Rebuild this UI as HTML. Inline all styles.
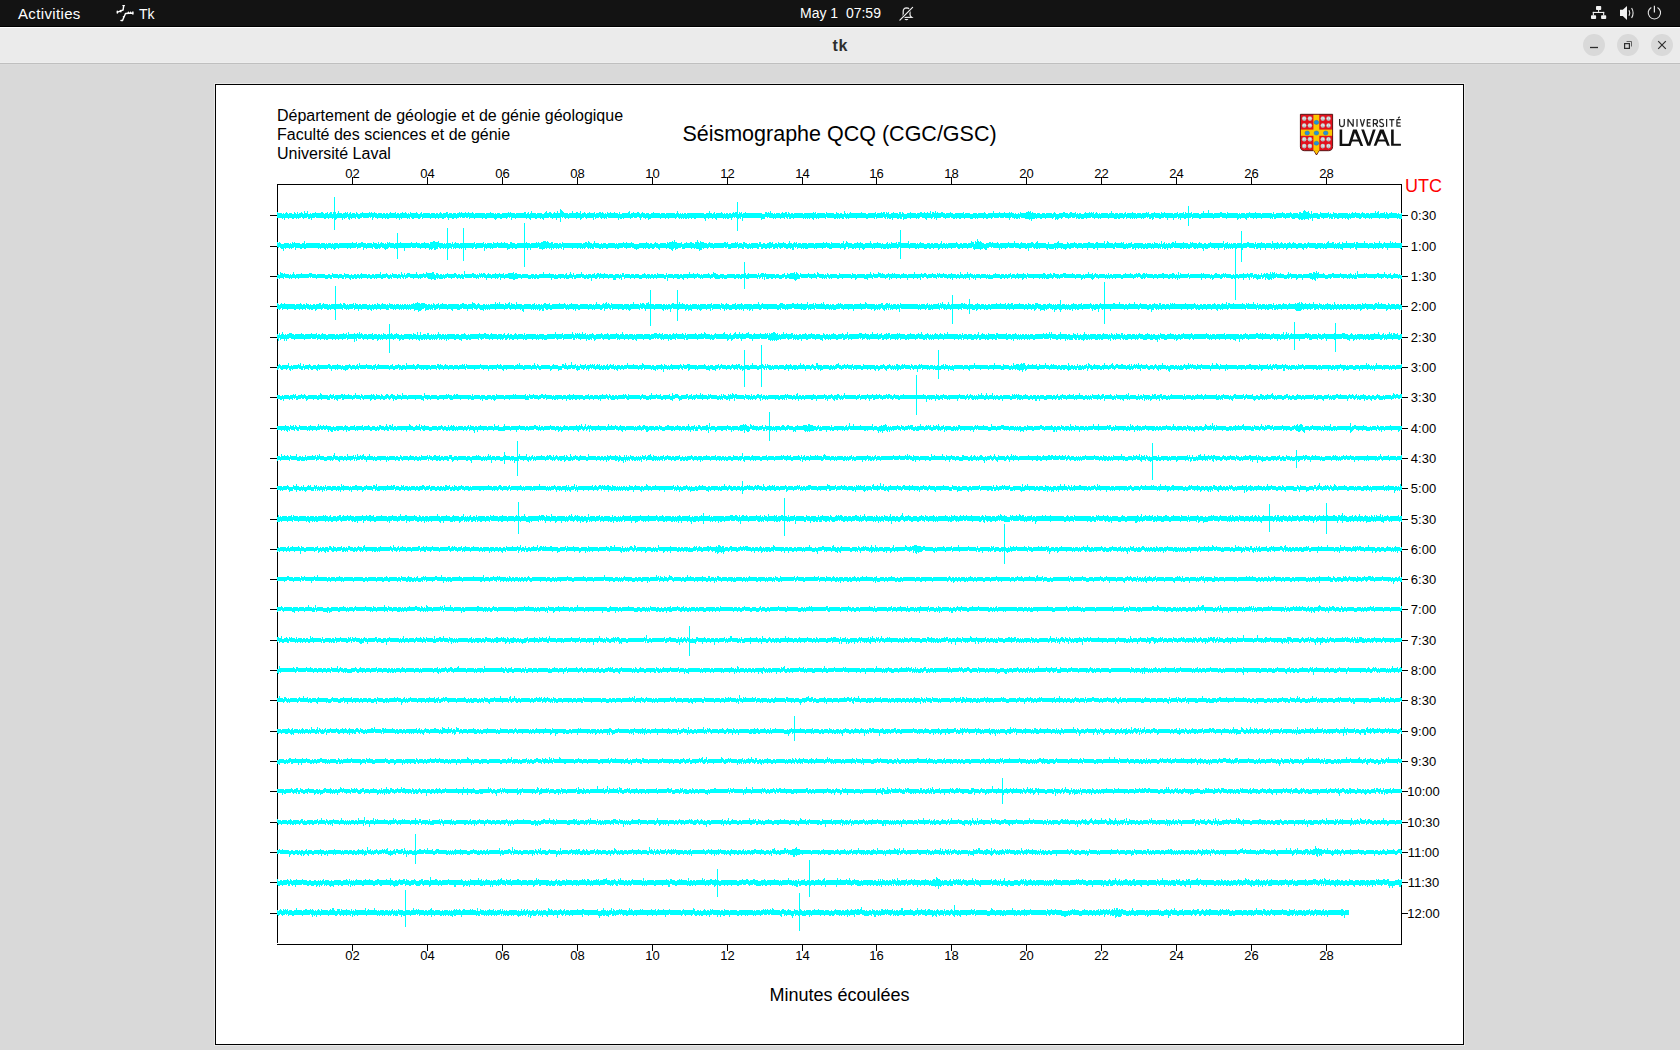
<!DOCTYPE html>
<html><head><meta charset="utf-8"><style>
html,body{margin:0;padding:0;width:1680px;height:1050px;overflow:hidden;background:#d9d9d9;font-family:"Liberation Sans",sans-serif}
.t{position:absolute;white-space:pre;font-family:"Liberation Sans",sans-serif}
#top{position:absolute;left:0;top:0;width:1680px;height:26px;background:#131313}
#tb{position:absolute;left:0;top:26px;width:1680px;height:39px;background:#ebebeb;border-top:1px solid #000}
</style></head><body>
<div id="top"></div>
<div style="position:absolute;left:0;top:26px;width:1680px;height:1px;background:#000"></div>
<div style="position:absolute;left:0;top:27px;width:1680px;height:1px;background:#fff"></div>
<div style="position:absolute;left:0;top:28px;width:1680px;height:34px;background:#ebebeb"></div>
<div style="position:absolute;left:0;top:62px;width:1680px;height:1px;background:#eeeeee"></div>
<div style="position:absolute;left:0;top:63px;width:1680px;height:1px;background:#bfbfbf"></div>
<div style="position:absolute;left:0;top:64px;width:1680px;height:1px;background:#dbdbdb"></div>

<div class="t" style="left:18px;top:5px;font-size:15px;line-height:18px;color:#fff;letter-spacing:0.35px">Activities</div>
<div class="t" style="left:139px;top:5px;font-size:14px;line-height:18px;color:#fff">Tk</div>
<div class="t" style="left:800px;top:4px;font-size:14px;line-height:18px;color:#fff">May 1  07:59</div>
<div class="t" style="left:832.5px;top:37px;font-size:16px;line-height:18px;color:#2e2e2e;font-weight:700;letter-spacing:0.6px">tk</div>
<svg width="1680" height="65" style="position:absolute;left:0;top:0">
 <g fill="none" stroke="#fff" stroke-width="1.3" stroke-linecap="round">
  <path d="M123.7 5.8 L123.1 10 L117.6 12.1 M122.9 5.6 H124.4 M117.3 11.3 V13 M120.3 10.6 L120.8 11.8 M125.5 13.5 L132.9 13 M132.9 11.9 V14.1 M128.4 12.3 V13.4 M130.6 12.2 V13.2 M125.5 13.5 L122.5 20.5 H121 M124.2 16.3 L123.4 16.9" stroke-width="1.45"/>
 </g>
 <g fill="#f2f2f2">
  <rect x="1596" y="6" width="5.2" height="4" rx="0.8"/>
  <rect x="1598.1" y="9.5" width="1" height="2.6"/>
  <rect x="1592.8" y="11.9" width="11.4" height="1.1"/>
  <rect x="1592.8" y="11.9" width="1.1" height="3.5"/>
  <rect x="1603.1" y="11.9" width="1.1" height="3.5"/>
  <rect x="1591" y="15.2" width="5.1" height="3.9" rx="0.8"/>
  <rect x="1601.1" y="15.2" width="5.1" height="3.9" rx="0.8"/>
  <path d="M1620 9.8 H1622.8 L1627 6 V20 L1622.8 16.1 H1620 Z"/>
 </g>
 <g fill="none" stroke="#e6e6e6" stroke-width="1.1">
  <path d="M1629 10.3 Q1630.6 13 1629 15.7"/>
  <path d="M1631.6 8 Q1634.6 13 1631.6 18"/>
  <path d="M1651.3 7.4 A6.2 6.2 0 1 0 1657.5 7.4" />
  <path d="M1654.4 5.7 V12.6" stroke-width="1.2"/>
  <path d="M902.3 17.3 Q903.2 16.2 903.2 14.5 V11.6 Q903.2 7.9 906.6 7.8 Q910 7.9 910 11.6 V14.5 Q910 16.2 911.6 17.3 Z" stroke-width="1.25"/>
 </g>
 <path d="M899.6 20.4 L912.9 7.1" stroke="#141414" stroke-width="2.8"/>
 <path d="M899.9 20.1 L912.6 7.4" stroke="#f0f0f0" stroke-width="1.2" stroke-linecap="round"/>
 <path d="M904.3 19.1 H908.5 Q906.4 21.6 904.3 19.1Z" fill="#f0f0f0"/>
 <g fill="#d9d9d9">
  <circle cx="1594" cy="45" r="11"/>
  <circle cx="1628" cy="45" r="11"/>
  <circle cx="1662" cy="45" r="11"/>
 </g>
 <g fill="none" stroke="#2e2e2e">
  <path d="M1590 47.5 H1598" stroke-width="1.3"/>
  <rect x="1624.6" y="43.6" width="4.8" height="4.8" stroke-width="1.2"/>
  <path d="M1626.6 41.5 H1631.5 V46.5" stroke-width="0.9" stroke="#555"/>
  <path d="M1658.2 41.2 L1665.8 48.8 M1665.8 41.2 L1658.2 48.8" stroke-width="1.2"/>
 </g>
</svg>

<svg width="1680" height="1050" viewBox="0 0 1680 1050" style="position:absolute;left:0;top:0" shape-rendering="crispEdges"><rect x="214" y="83" width="1251" height="963" fill="#e8e8e8"/><rect x="215" y="84" width="1249" height="961" fill="#000"/><rect x="216" y="85" width="1247" height="959" fill="#fff"/><g shape-rendering="geometricPrecision"><path d="M1300.4 114.3 H1332.6 V146.6 Q1332.6 150.7 1328.5 150.7 H1319 L1316.5 155 L1314 150.7 H1304.5 Q1300.4 150.7 1300.4 146.6 Z" fill="#e3101c" stroke="#4a0c0c" stroke-width="0.9"/><rect x="1313.4" y="114.8" width="5.9" height="36" fill="#fcc800"/><rect x="1300.9" y="129.6" width="31.2" height="6.2" fill="#fcc800"/><path d="M1314 150.4 L1316.5 154.2 L1319 150.4 Z" fill="#fcc800"/><circle cx="1304.2" cy="118.6" r="2.3" fill="#b9c0c0"/><circle cx="1304.2" cy="118.3" r="1.35" fill="#eef2f2"/><path d="M1304.2 117.4 V120.8" stroke="#9aa2a2" stroke-width="0.5"/><circle cx="1304.2" cy="125.5" r="2.3" fill="#b9c0c0"/><circle cx="1304.2" cy="125.2" r="1.35" fill="#eef2f2"/><path d="M1304.2 124.3 V127.7" stroke="#9aa2a2" stroke-width="0.5"/><circle cx="1304.2" cy="139.3" r="2.3" fill="#b9c0c0"/><circle cx="1304.2" cy="139.0" r="1.35" fill="#eef2f2"/><path d="M1304.2 138.1 V141.5" stroke="#9aa2a2" stroke-width="0.5"/><circle cx="1304.2" cy="146.1" r="2.3" fill="#b9c0c0"/><circle cx="1304.2" cy="145.8" r="1.35" fill="#eef2f2"/><path d="M1304.2 144.9 V148.3" stroke="#9aa2a2" stroke-width="0.5"/><circle cx="1309.9" cy="118.6" r="2.3" fill="#b9c0c0"/><circle cx="1309.9" cy="118.3" r="1.35" fill="#eef2f2"/><path d="M1309.9 117.4 V120.8" stroke="#9aa2a2" stroke-width="0.5"/><circle cx="1309.9" cy="125.5" r="2.3" fill="#b9c0c0"/><circle cx="1309.9" cy="125.2" r="1.35" fill="#eef2f2"/><path d="M1309.9 124.3 V127.7" stroke="#9aa2a2" stroke-width="0.5"/><circle cx="1309.9" cy="139.3" r="2.3" fill="#b9c0c0"/><circle cx="1309.9" cy="139.0" r="1.35" fill="#eef2f2"/><path d="M1309.9 138.1 V141.5" stroke="#9aa2a2" stroke-width="0.5"/><circle cx="1309.9" cy="146.1" r="2.3" fill="#b9c0c0"/><circle cx="1309.9" cy="145.8" r="1.35" fill="#eef2f2"/><path d="M1309.9 144.9 V148.3" stroke="#9aa2a2" stroke-width="0.5"/><circle cx="1322.8" cy="118.6" r="2.3" fill="#b9c0c0"/><circle cx="1322.8" cy="118.3" r="1.35" fill="#eef2f2"/><path d="M1322.8 117.4 V120.8" stroke="#9aa2a2" stroke-width="0.5"/><circle cx="1322.8" cy="125.5" r="2.3" fill="#b9c0c0"/><circle cx="1322.8" cy="125.2" r="1.35" fill="#eef2f2"/><path d="M1322.8 124.3 V127.7" stroke="#9aa2a2" stroke-width="0.5"/><circle cx="1322.8" cy="139.3" r="2.3" fill="#b9c0c0"/><circle cx="1322.8" cy="139.0" r="1.35" fill="#eef2f2"/><path d="M1322.8 138.1 V141.5" stroke="#9aa2a2" stroke-width="0.5"/><circle cx="1322.8" cy="146.1" r="2.3" fill="#b9c0c0"/><circle cx="1322.8" cy="145.8" r="1.35" fill="#eef2f2"/><path d="M1322.8 144.9 V148.3" stroke="#9aa2a2" stroke-width="0.5"/><circle cx="1328.5" cy="118.6" r="2.3" fill="#b9c0c0"/><circle cx="1328.5" cy="118.3" r="1.35" fill="#eef2f2"/><path d="M1328.5 117.4 V120.8" stroke="#9aa2a2" stroke-width="0.5"/><circle cx="1328.5" cy="125.5" r="2.3" fill="#b9c0c0"/><circle cx="1328.5" cy="125.2" r="1.35" fill="#eef2f2"/><path d="M1328.5 124.3 V127.7" stroke="#9aa2a2" stroke-width="0.5"/><circle cx="1328.5" cy="139.3" r="2.3" fill="#b9c0c0"/><circle cx="1328.5" cy="139.0" r="1.35" fill="#eef2f2"/><path d="M1328.5 138.1 V141.5" stroke="#9aa2a2" stroke-width="0.5"/><circle cx="1328.5" cy="146.1" r="2.3" fill="#b9c0c0"/><circle cx="1328.5" cy="145.8" r="1.35" fill="#eef2f2"/><path d="M1328.5 144.9 V148.3" stroke="#9aa2a2" stroke-width="0.5"/><ellipse cx="1316.4" cy="122.4" rx="2.35" ry="2.05" fill="#2590da" stroke="#156aa8" stroke-width="0.4"/><ellipse cx="1307.2" cy="133.0" rx="2.35" ry="2.05" fill="#2590da" stroke="#156aa8" stroke-width="0.4"/><ellipse cx="1316.4" cy="133.0" rx="2.35" ry="2.05" fill="#2590da" stroke="#156aa8" stroke-width="0.4"/><ellipse cx="1325.7" cy="133.0" rx="2.35" ry="2.05" fill="#2590da" stroke="#156aa8" stroke-width="0.4"/><ellipse cx="1316.4" cy="143.2" rx="2.35" ry="2.05" fill="#2590da" stroke="#156aa8" stroke-width="0.4"/></g><path shape-rendering="geometricPrecision" fill="none" stroke="#262626" stroke-width="1.25" stroke-linejoin="bevel" d="M1339.6 119.1 V124 Q1339.6 126.5 1341.95 126.5 Q1344.3 126.5 1344.3 124 V119.1 M1348 126.8 V119.1 L1353.2 126.6 V118.9 M1357 119.1 V126.8 M1360.3 119.1 L1362.4 126.6 L1364.5 119.1 M1370.7 119.7 H1367.3 V126.2 H1370.7 M1367.3 122.9 H1370.3 M1373.4 126.8 V119.7 H1375.5 Q1377.5 119.7 1377.5 121.65 Q1377.5 123.6 1375.5 123.6 H1373.4 M1375.3 123.6 L1377.7 126.8 M1383.4 120.2 Q1382.7 119.3 1381.5 119.3 Q1379.7 119.3 1379.7 121.1 Q1379.7 122.5 1381.6 122.9 Q1383.6 123.3 1383.6 124.9 Q1383.6 126.5 1381.5 126.5 Q1380.1 126.5 1379.4 125.6 M1386.6 119.1 V126.8 M1389.3 119.7 H1394.3 M1391.8 119.7 V126.8 M1400.8 119.7 H1396.9 V126.2 H1400.8 M1396.9 122.9 H1400.4 M1398.1 118.3 L1399.7 116.8"/><g fill="#111" shape-rendering="geometricPrecision"><path d="M1339.6 129.4 H1342.2 V143.7 H1349.6 V145.9 H1339.6 Z"/><path d="M1347.90 145.9 L1353.05 129.4 H1356.75 L1363.20 145.9 H1360.60 L1354.90 132.80 L1350.50 145.9 Z"/><rect x="1350.70" y="139.5" width="9.70" height="2"/><path d="M1361.2 129.4 H1364 L1368.7 142.7 L1372.9 129.6 H1375.7 L1370.2 145.8 H1367.2 Z"/><path d="M1373.70 145.8 L1379.95 129.6 H1383.65 L1389.80 145.8 H1387.20 L1381.80 133.00 L1376.30 145.8 Z"/><rect x="1376.50" y="139.5" width="10.50" height="2"/><path d="M1391.1 129.6 H1393.7 V143.7 H1400.9 V145.8 H1391.1 Z"/></g><path d="M277.5 184 V943 M277 184.5 H1402 M1401.5 184 V944 M277 944.5 H1402" stroke="#000" stroke-width="1" fill="none"/><path d="M270 215.5H277M1402 215.5H1408M270 246.5H277M1402 246.5H1408M270 276.5H277M1402 276.5H1408M270 306.5H277M1402 306.5H1408M270 337.5H277M1402 337.5H1408M270 367.5H277M1402 367.5H1408M270 397.5H277M1402 397.5H1408M270 428.5H277M1402 428.5H1408M270 458.5H277M1402 458.5H1408M270 488.5H277M1402 488.5H1408M270 519.5H277M1402 519.5H1408M270 549.5H277M1402 549.5H1408M270 579.5H277M1402 579.5H1408M270 609.5H277M1402 609.5H1408M270 640.5H277M1402 640.5H1408M270 670.5H277M1402 670.5H1408M270 700.5H277M1402 700.5H1408M270 731.5H277M1402 731.5H1408M270 761.5H277M1402 761.5H1408M270 791.5H277M1402 791.5H1408M270 822.5H277M1402 822.5H1408M270 852.5H277M1402 852.5H1408M270 882.5H277M1402 882.5H1408M270 913.5H277M1402 913.5H1408M352.5 177V184M352.5 945V951M427.5 177V184M427.5 945V951M502.5 177V184M502.5 945V951M577.5 177V184M577.5 945V951M652.5 177V184M652.5 945V951M727.5 177V184M727.5 945V951M802.5 177V184M802.5 945V951M876.5 177V184M876.5 945V951M951.5 177V184M951.5 945V951M1026.5 177V184M1026.5 945V951M1101.5 177V184M1101.5 945V951M1176.5 177V184M1176.5 945V951M1251.5 177V184M1251.5 945V951M1326.5 177V184M1326.5 945V951" stroke="#000" stroke-width="1" fill="none"/><path d="M277 212h1V213h4V214h1V213h1V214h1V213h1V212h1V213h1V214h1V213h3V214h2V212h1V213h1V214h1V212h1V214h1V213h2V212h1V213h1V214h1V211h1V213h2V211h1V214h2V213h1V214h1V213h3V212h1V213h5V212h2V213h1V214h1V213h2V212h1V214h1V213h1V212h2V214h1V212h1V213h1V212h1V214h1V213h1V211h1V213h3V214h1V213h2V212h1V213h1V212h1V214h1V213h1V212h1V214h1V213h3V214h1V212h1V213h1V214h2V213h2V212h1V213h6V212h1V213h1V212h1V213h2V212h1V213h2V214h1V213h4V214h1V213h2V214h1V213h2V214h1V213h1V212h1V213h4V212h1V214h1V213h2V214h1V213h2V212h1V213h2V212h1V213h1V214h1V213h1V214h1V212h1V213h5V212h1V213h1V214h2V213h1V212h1V214h1V213h7V214h1V213h4V214h1V213h2V214h1V213h1V212h1V213h1V214h1V213h3V212h2V214h1V213h3V214h1V213h3V214h1V213h2V212h1V213h1V212h1V213h3V212h1V213h2V212h1V213h3V212h1V213h1V214h1V213h10V214h1V213h4V212h1V213h3V214h1V213h1V214h1V213h3V214h2V213h6V212h1V213h1V212h1V213h4V214h1V213h8V212h2V214h1V213h1V212h1V214h1V213h1V211h1V213h4V214h1V213h5V214h2V213h1V212h1V211h1V213h2V212h2V213h1V214h1V213h1V212h1V213h2V211h1V213h3V210h1V211h1V212h1V213h4V214h1V213h3V211h1V213h3V212h2V213h3V214h1V213h2V212h1V213h1V214h1V213h2V212h1V213h4V212h1V214h1V213h3V212h2V213h1V212h1V213h1V214h1V213h1V214h1V212h1V213h2V212h1V213h3V212h1V213h3V214h1V212h1V214h2V213h6V212h1V211h1V214h1V213h2V212h1V213h3V212h2V213h1V214h1V213h1V212h1V213h2V214h1V213h3V214h2V213h2V212h1V213h6V214h1V213h4V214h1V213h9V214h1V213h1V211h1V213h1V214h1V213h1V214h1V213h1V214h1V213h2V214h1V213h17V214h2V213h3V211h1V213h2V214h1V213h1V212h1V214h1V213h5V212h1V213h1V214h1V213h1V214h1V213h2V214h1V213h2V214h1V213h1V212h1V213h1V212h2V213h1V214h1V212h1V213h1V212h1V214h1V213h2V212h1V213h16V214h3V212h2V213h1V212h1V213h1V211h1V213h2V214h1V213h1V214h1V213h4V214h1V213h1V212h1V213h2V212h2V214h1V212h1V213h1V214h1V213h2V214h1V213h9V214h1V213h9V212h1V213h1V212h1V214h1V213h8V214h1V212h1V213h7V214h2V212h1V213h2V214h1V213h2V214h2V211h1V213h1V214h1V213h1V214h1V213h1V212h1V213h10V212h1V213h4V214h2V213h7V212h1V214h1V213h4V212h1V213h1V212h2V214h1V212h1V213h1V212h1V214h2V213h2V212h1V213h4V214h1V212h2V214h1V212h1V213h1V214h3V213h3V212h1V213h5V214h1V213h3V212h2V213h2V212h1V213h2V212h1V213h2V211h1V214h1V212h2V213h1V211h1V213h1V212h1V213h3V212h2V213h2V214h1V213h4V212h1V213h2V214h2V213h8V212h1V214h1V213h5V214h3V213h4V214h1V213h6V212h1V213h1V214h2V213h5V211h1V213h5V212h1V213h4V212h1V213h4V212h1V213h1V212h1V213h2V214h1V213h1V214h2V213h1V214h1V212h1V213h5V212h2V211h1V212h1V211h1V213h1V212h1V213h3V214h1V213h3V214h2V213h3V214h1V213h6V214h1V213h1V212h1V213h1V214h3V213h4V212h2V213h3V214h1V213h1V212h2V213h3V212h1V214h1V213h1V214h1V213h2V214h3V213h1V212h1V213h3V212h1V213h1V212h1V213h1V212h1V214h1V213h1V212h1V213h1V214h1V213h1V214h1V213h7V214h1V213h2V211h1V213h2V214h1V213h3V214h1V213h4V214h1V213h1V212h1V214h1V213h5V212h1V213h3V214h1V213h4V214h1V213h4V212h1V213h1V212h1V214h2V213h3V212h1V213h5V214h1V212h1V213h2V212h1V213h8V214h1V213h3V212h1V214h1V213h4V212h1V214h1V212h1V213h5V212h1V214h1V213h6V214h2V213h2V211h1V213h9V214h1V213h6V212h2V213h4V214h1V212h1V213h10V214h1V213h1V214h1V213h4V214h1V213h3V212h1V213h5V212h1V213h5V214h1V213h10V214h1V212h1V214h2V213h6V212h1V213h2V214h1V213h4V212h1V213h1V214h1V213h5V214h1V212h2V213h2V211h1V210h1V211h1V212h2V211h1V213h1V214h1V211h1V214h1V213h5V214h2V212h1V213h7V212h1V214h1V213h1V214h2V212h1V213h3V214h1V213h10V214h1V213h1V214h1V213h1V212h1V213h2V212h1V213h4V214h1V213h1V212h1V213h2V214h1V213h3V214h1V213h5V211h1V213h1V212h1V211h1V214h1V213h4V212h1V214h1V212h1V213h1V214h1V213h2V212h1V213h5V214h1V213h1V214h2V213h1V219h-3V218h-1V219h-1V218h-8V219h-2V218h-1V219h-1V218h-5V219h-1V218h-7V219h-1V218h-1V219h-1V218h-3V219h-1V218h-2V217h-1V218h-1V219h-2V218h-3V217h-1V218h-4V219h-1V218h-1V220h-1V219h-1V218h-1V219h-1V218h-2V219h-1V218h-3V219h-2V218h-2V219h-1V217h-1V219h-2V218h-1V219h-1V217h-1V218h-4V219h-1V218h-2V217h-1V219h-3V218h-4V221h-1V218h-1V219h-1V218h-1V220h-1V219h-3V220h-1V219h-1V220h-2V219h-1V220h-1V219h-1V218h-3V219h-3V218h-1V217h-1V218h-4V219h-1V218h-2V217h-1V218h-6V219h-2V217h-1V219h-1V218h-1V219h-1V218h-8V219h-1V218h-4V219h-1V218h-2V219h-1V218h-3V217h-1V218h-2V220h-1V219h-1V218h-4V219h-1V218h-1V219h-1V220h-1V218h-10V219h-1V218h-4V217h-2V218h-6V219h-1V218h-12V219h-2V218h-6V219h-1V217h-1V218h-5V219h-2V218h-3V220h-1V218h-1V219h-1V217h-1V218h-3V220h-1V218h-5V220h-1V218h-2V217h-1V218h-3V219h-2V218h-4V217h-1V219h-1V220h-1V218h-1V219h-2V217h-1V218h-1V217h-1V218h-2V219h-1V218h-1V219h-1V218h-4V219h-1V218h-1V219h-1V218h-1V219h-1V218h-1V219h-1V218h-3V219h-1V217h-1V218h-1V219h-1V218h-3V219h-2V218h-1V219h-3V218h-5V219h-1V218h-7V219h-1V218h-1V219h-1V218h-3V219h-1V218h-2V217h-1V218h-4V219h-1V218h-2V219h-3V218h-1V219h-2V218h-1V219h-1V217h-1V218h-3V217h-1V218h-2V219h-1V218h-3V217h-2V218h-1V219h-1V218h-2V219h-1V220h-1V219h-1V220h-1V217h-1V218h-1V219h-1V218h-6V219h-1V218h-3V219h-2V218h-3V219h-1V218h-1V219h-3V221h-1V219h-1V220h-1V219h-4V218h-4V217h-1V219h-1V218h-1V219h-2V218h-1V219h-1V218h-2V217h-1V218h-1V220h-1V218h-4V217h-1V218h-4V217h-1V218h-5V217h-1V218h-1V219h-1V218h-3V219h-2V218h-2V219h-1V218h-5V219h-1V218h-1V219h-1V218h-2V219h-3V218h-5V219h-1V218h-3V219h-2V218h-2V219h-1V218h-1V219h-2V218h-2V217h-1V218h-4V219h-1V218h-2V217h-2V218h-4V220h-1V218h-1V219h-1V217h-1V218h-1V219h-1V218h-4V220h-1V219h-1V218h-3V217h-2V218h-1V219h-1V218h-1V219h-1V218h-5V219h-1V218h-3V219h-3V220h-1V217h-1V219h-2V218h-1V219h-2V218h-4V220h-1V218h-1V219h-2V218h-1V219h-1V217h-1V219h-1V218h-1V217h-1V218h-6V219h-1V217h-1V219h-1V218h-6V219h-2V218h-9V219h-1V218h-7V219h-1V218h-1V219h-1V218h-1V217h-1V219h-2V218h-2V219h-1V218h-1V219h-1V218h-1V219h-2V218h-7V217h-1V219h-1V218h-6V219h-1V218h-1V219h-1V218h-2V220h-1V219h-1V218h-2V219h-1V218h-1V219h-1V218h-1V219h-1V218h-1V219h-1V218h-9V219h-1V218h-2V219h-2V217h-1V219h-1V218h-1V217h-1V219h-1V218h-3V219h-1V218h-4V219h-1V218h-1V219h-1V218h-4V217h-1V218h-1V217h-2V219h-3V220h-1V218h-18V221h-1V217h-1V219h-1V218h-1V219h-1V218h-2V217h-1V218h-1V217h-1V218h-1V220h-1V218h-2V219h-2V218h-1V219h-1V218h-1V219h-1V218h-6V220h-1V219h-1V218h-2V219h-1V218h-3V219h-1V218h-2V221h-1V219h-1V218h-8V219h-2V218h-2V219h-1V218h-2V219h-1V218h-1V219h-2V218h-1V219h-1V218h-1V219h-1V218h-1V219h-1V218h-1V217h-1V218h-1V219h-1V218h-6V219h-1V218h-2V219h-1V218h-4V219h-1V218h-9V219h-2V220h-1V218h-2V219h-1V218h-2V217h-1V218h-1V220h-1V218h-1V217h-2V218h-3V217h-1V218h-2V219h-1V218h-6V219h-1V218h-1V219h-2V218h-1V220h-1V218h-10V217h-1V219h-1V218h-1V219h-1V218h-2V219h-1V218h-1V217h-1V218h-3V219h-1V217h-1V220h-1V218h-6V219h-1V218h-1V217h-1V218h-2V219h-1V218h-4V219h-1V218h-7V219h-1V218h-2V219h-1V218h-1V217h-1V218h-1V217h-1V218h-4V220h-1V218h-3V219h-1V218h-2V217h-1V218h-5V220h-1V219h-1V218h-1V219h-1V218h-3V219h-2V218h-4V220h-1V219h-1V218h-2V219h-1V218h-10V219h-1V218h-3V220h-1V217h-1V218h-1V217h-1V218h-1V219h-1V218h-4V219h-2V218h-3V219h-1V220h-1V219h-1V218h-7V219h-2V218h-2V219h-1V218h-7V219h-1V218h-4V219h-1V217h-1V218h-2V217h-1V218h-3V217h-1V218h-1V217h-1V218h-2V219h-1V218h-2V219h-2V218h-3V220h-1V218h-1V217h-1V218h-2V219h-2V218h-3V219h-1V218h-2V219h-1V218h-4V219h-1V218h-7V219h-1V217h-1V218h-1V219h-2V218h-4V219h-2V218h-1V217h-1V219h-1V218h-1V219h-1V218h-5V219h-1V218h-1V220h-1V218h-2V219h-1V218h-7V219h-2V218h-1V219h-1V218h-2V219h-1V218h-4V219h-1V218h-2V217h-1V218h-1V220h-1V217h-1V218h-1V217h-1V218h-6V217h-1V218h-2V219h-2V218h-1V217h-1V219h-1V218h-3V219h-1V218h-1V220h-1V219h-1V217h-1V218h-2V219h-1V218h-1V220h-1V218h-5V219h-1V220h-1V218h-2V219h-1V218h-3V219h-1V218h-2V219h-2V218h-8V217h-1V218h-3V220h-1V218h-1V219h-2V217h-1V218h-3V219h-1V218h-1V217h-1V218h-2V219h-1V218h-1V219h-1V218h-2V219h-2V218h-3V219h-1V218h-3V220h-1V218h-1V219h-1V218h-5ZM277 242h1V243h1V242h1V243h1V244h3V243h5V244h1V243h1V244h1V242h1V243h1V242h1V243h5V244h2V243h2V241h1V244h1V243h14V244h1V243h4V244h1V243h1V244h1V243h3V244h1V243h1V244h1V243h4V244h1V243h13V242h1V243h3V242h1V244h1V243h3V242h2V243h3V244h1V243h5V244h1V242h1V243h3V244h1V242h1V244h1V243h1V242h1V243h2V244h1V243h1V244h1V242h1V243h1V242h1V243h4V244h1V243h5V242h1V243h10V242h1V243h4V242h1V243h3V244h1V243h3V242h1V243h4V244h1V242h3V241h2V242h3V241h1V243h4V244h1V243h1V244h1V243h5V244h1V242h1V244h1V243h1V242h1V243h3V244h1V243h14V242h1V244h1V243h7V242h1V244h1V243h1V244h1V243h5V244h1V242h1V243h3V242h1V243h3V242h1V243h2V242h1V243h3V244h2V242h2V243h3V244h2V243h9V242h1V243h3V244h1V243h5V242h1V243h1V242h1V243h2V242h2V241h3V242h1V241h1V242h1V243h2V242h2V244h1V243h4V244h1V243h2V244h1V242h1V243h19V244h1V243h2V242h2V243h1V241h1V242h1V243h2V244h1V243h1V241h1V243h4V244h2V243h1V244h1V243h3V244h2V243h7V244h1V243h1V244h1V243h5V242h1V243h2V242h1V243h4V242h1V243h2V244h5V243h7V242h1V243h2V244h1V243h2V244h2V243h1V242h1V243h2V244h2V243h6V244h1V242h1V243h1V242h3V241h1V242h1V240h1V242h2V243h4V242h1V244h2V243h2V242h1V243h3V242h2V243h2V244h1V242h2V240h1V242h1V243h1V241h1V242h3V243h3V244h1V243h1V242h1V243h3V244h1V243h10V242h2V243h1V242h1V244h3V243h4V242h1V243h1V242h1V244h1V243h3V244h1V242h2V243h2V244h2V243h1V244h1V243h7V244h1V242h2V244h2V243h2V244h2V243h2V242h2V243h1V242h1V244h2V243h2V244h1V242h1V243h4V242h1V243h2V244h2V243h1V241h1V243h2V244h1V243h1V242h1V243h1V242h1V244h1V243h3V244h1V243h5V244h1V243h6V244h1V243h8V242h1V243h2V242h1V243h3V244h1V242h1V243h8V244h1V243h2V241h1V244h1V243h1V241h1V242h1V243h4V244h2V243h3V242h1V243h2V242h1V243h2V244h2V243h5V241h1V243h1V244h1V243h4V242h1V243h3V244h1V243h1V244h3V243h1V242h1V244h1V243h1V244h1V242h1V243h4V242h1V244h1V242h3V243h7V241h1V244h1V243h6V244h1V243h1V244h1V243h1V242h1V243h3V244h3V243h3V244h1V243h2V244h1V243h4V244h2V243h1V241h1V244h1V243h2V244h1V243h1V244h1V243h8V242h1V243h1V244h2V243h2V244h1V243h4V244h1V243h3V241h1V242h2V244h1V241h1V242h1V239h1V241h1V242h1V241h1V242h1V243h2V244h2V243h3V242h2V243h1V242h1V243h4V242h1V243h1V244h1V243h8V242h1V243h5V241h1V243h4V244h1V243h1V242h1V243h4V244h1V243h4V242h2V243h1V244h1V243h1V242h1V241h1V243h8V244h2V242h1V244h5V243h3V242h1V241h1V243h4V244h4V242h1V243h1V244h1V243h4V242h1V243h2V244h1V243h4V244h1V243h5V242h2V243h4V244h1V243h1V242h2V243h6V241h1V244h1V243h1V241h1V242h1V243h4V244h1V243h1V242h1V243h5V242h1V243h1V242h1V244h2V243h1V244h1V243h3V242h1V244h2V243h9V244h2V243h1V244h1V243h4V244h1V243h1V244h1V242h1V243h3V244h1V243h1V244h1V241h1V244h1V243h1V242h1V244h1V243h1V244h1V243h2V244h1V243h1V242h2V243h1V241h1V243h7V242h1V243h4V244h2V242h1V243h1V242h1V243h4V244h1V243h1V242h1V243h2V244h2V243h2V244h2V243h2V242h1V243h12V241h1V244h1V243h2V242h1V244h1V243h1V244h1V243h1V244h1V243h3V244h1V243h5V244h1V243h4V242h2V243h5V244h1V242h1V244h1V243h4V242h1V243h3V244h1V243h5V244h1V241h1V243h4V242h1V243h1V244h1V243h1V242h1V243h1V244h1V243h2V244h1V243h2V242h1V243h1V244h1V243h1V242h1V243h2V244h2V243h4V244h2V243h2V244h1V243h1V242h1V243h7V244h1V243h6V244h1V243h1V244h1V243h1V242h1V241h1V243h3V242h2V244h1V243h1V244h1V243h2V242h1V244h2V242h1V243h3V241h1V243h7V242h1V244h1V242h2V243h6V241h1V243h3V244h1V243h4V244h1V242h1V243h4V241h1V243h2V244h1V243h1V242h1V243h5V241h1V243h1V242h1V243h2V242h1V243h6V248h-1V249h-1V248h-12V250h-1V248h-2V247h-1V248h-1V249h-1V248h-3V249h-1V248h-2V249h-1V248h-1V249h-1V248h-4V249h-1V248h-11V250h-1V249h-1V247h-1V248h-3V249h-1V248h-7V250h-1V249h-2V248h-1V249h-1V248h-1V249h-1V248h-1V249h-1V248h-7V249h-2V248h-1V249h-1V248h-2V249h-1V248h-2V249h-3V248h-6V247h-1V248h-1V249h-1V248h-2V250h-1V249h-1V248h-4V249h-2V248h-4V249h-1V248h-3V249h-1V250h-1V248h-2V249h-1V248h-3V249h-1V248h-1V249h-2V248h-1V250h-1V248h-2V249h-1V248h-5V250h-1V248h-4V250h-1V248h-2V249h-2V247h-1V249h-1V248h-5V247h-2V248h-4V250h-1V248h-5V249h-2V248h-2V249h-1V248h-1V249h-1V248h-1V249h-1V248h-1V249h-1V248h-1V250h-1V247h-1V248h-4V250h-1V248h-3V249h-1V248h-3V247h-1V248h-2V249h-3V248h-1V251h-1V249h-1V248h-4V249h-1V248h-1V249h-2V248h-1V247h-1V248h-2V249h-2V248h-1V249h-1V248h-2V249h-1V248h-1V249h-2V248h-6V247h-1V248h-2V249h-1V248h-2V250h-1V248h-1V249h-2V248h-1V249h-1V247h-1V249h-1V248h-1V249h-1V248h-4V249h-1V248h-1V249h-1V248h-3V249h-2V248h-1V249h-2V248h-1V249h-1V248h-2V249h-1V248h-2V250h-1V248h-1V249h-2V247h-1V248h-3V249h-1V248h-1V249h-3V248h-7V247h-1V249h-2V248h-7V249h-1V248h-7V250h-1V248h-2V249h-2V248h-5V250h-1V248h-4V249h-1V248h-4V249h-1V248h-2V247h-1V248h-3V249h-2V248h-2V249h-1V250h-1V249h-2V248h-1V249h-1V248h-3V249h-1V248h-1V250h-1V248h-1V249h-5V248h-1V250h-1V249h-1V248h-6V249h-1V248h-1V249h-2V248h-1V249h-1V248h-1V247h-1V248h-3V251h-1V248h-1V249h-2V248h-4V249h-2V248h-4V247h-1V248h-5V247h-1V248h-2V249h-1V248h-3V249h-1V248h-1V250h-1V248h-6V247h-1V248h-1V247h-2V248h-2V250h-2V249h-1V248h-1V249h-2V250h-1V249h-5V250h-1V249h-1V247h-1V248h-4V249h-1V248h-4V249h-1V248h-2V249h-2V248h-1V247h-1V248h-4V249h-1V248h-3V249h-1V248h-1V249h-1V248h-2V249h-1V248h-2V249h-1V250h-1V248h-4V249h-1V248h-2V249h-2V248h-2V249h-3V248h-5V249h-1V248h-1V249h-2V248h-5V249h-1V248h-9V247h-1V248h-1V249h-1V248h-6V249h-1V248h-1V249h-2V248h-1V249h-3V248h-1V249h-1V248h-6V249h-1V248h-1V249h-1V248h-7V249h-1V250h-1V249h-1V248h-2V250h-1V248h-3V249h-1V248h-1V249h-2V248h-3V249h-1V247h-2V249h-1V250h-1V248h-3V249h-1V248h-8V249h-3V248h-2V247h-1V248h-3V249h-1V248h-5V249h-1V248h-1V249h-1V248h-6V249h-3V248h-1V249h-1V248h-1V249h-1V248h-3V249h-1V247h-1V248h-1V247h-1V250h-2V248h-1V249h-1V248h-2V249h-2V248h-2V247h-1V248h-2V249h-1V248h-1V247h-1V249h-1V248h-2V249h-2V247h-1V248h-2V249h-1V248h-2V249h-2V248h-2V249h-2V247h-2V249h-2V248h-4V249h-1V248h-1V249h-1V248h-1V249h-2V248h-2V247h-1V249h-2V248h-3V249h-1V247h-1V248h-6V249h-3V247h-1V248h-2V247h-1V248h-10V249h-1V248h-3V247h-1V248h-1V249h-1V248h-3V249h-1V248h-1V250h-2V251h-1V249h-3V248h-1V249h-1V248h-2V249h-1V248h-6V249h-3V247h-1V248h-3V249h-2V250h-1V248h-1V249h-1V251h-1V250h-1V249h-2V248h-2V249h-1V248h-6V250h-1V249h-1V248h-2V247h-1V248h-1V249h-2V248h-2V249h-2V248h-2V249h-1V248h-1V249h-1V248h-4V249h-2V250h-1V249h-2V248h-2V247h-1V248h-4V249h-1V248h-2V247h-1V248h-4V249h-2V248h-1V249h-1V248h-7V249h-2V248h-3V249h-1V248h-1V249h-2V248h-4V247h-1V249h-2V248h-1V249h-1V248h-1V249h-1V248h-1V247h-1V248h-1V249h-1V248h-1V249h-1V248h-1V249h-1V248h-2V249h-1V248h-4V249h-1V248h-8V250h-1V247h-1V249h-1V248h-2V249h-1V248h-1V249h-1V248h-2V249h-1V248h-1V250h-1V248h-1V249h-1V248h-2V249h-1V248h-1V249h-2V250h-1V249h-3V247h-1V248h-7V250h-1V248h-2V250h-1V248h-10V249h-2V248h-2V249h-1V248h-2V249h-2V250h-1V248h-9V247h-1V248h-4V249h-1V248h-1V249h-1V248h-3V249h-1V248h-1V251h-1V247h-1V248h-6V249h-2V247h-1V248h-1V249h-1V248h-6V250h-1V248h-3V249h-1V248h-1V249h-1V248h-3V249h-1V248h-1V249h-1V247h-1V249h-1V248h-2V249h-1V248h-2V249h-1V248h-1V249h-1V248h-2V249h-1V248h-1V247h-1V249h-2V250h-2V248h-1V249h-1V250h-1V249h-1V250h-1V248h-3V249h-1V248h-4V249h-1V248h-3V247h-1V248h-4V247h-1V248h-6V251h-1V248h-7V249h-1V248h-1V249h-1V248h-4V247h-1V248h-1V249h-2V250h-1V249h-1V248h-2V247h-1V248h-1V249h-1V248h-1V249h-3V248h-1V247h-1V249h-1V248h-5V249h-1V248h-2V250h-1V247h-2V248h-3V249h-1V247h-1V248h-5V249h-1V248h-2V249h-1V248h-8V249h-1V248h-2V249h-1V250h-1V249h-1V248h-1V249h-1V248h-3V249h-1V248h-1V250h-1V249h-1V248h-3V249h-1V248h-1V249h-1V248h-12V249h-2V248h-2V249h-2V248h-4V250h-1V247h-1V248h-2V249h-1V248h-1V249h-1V248h-3V249h-1V248h-1V251h-1V249h-2V248h-1V247h-1V248h-1V247h-1ZM277 275h1V274h1V275h1V272h1V273h2V274h1V273h1V274h4V275h1V274h1V275h1V274h1V272h1V274h1V275h1V274h5V273h1V274h7V273h3V274h4V275h1V274h8V275h3V274h2V275h2V273h1V274h5V275h1V274h3V275h2V273h1V274h4V275h2V274h1V275h2V274h2V275h1V274h2V275h1V274h1V273h1V274h5V275h1V274h2V275h2V274h2V275h1V274h5V272h1V275h1V274h4V273h1V274h1V275h2V274h1V275h1V273h1V274h4V275h1V274h2V275h1V272h1V274h1V275h1V273h1V275h1V274h1V273h3V274h6V272h1V274h1V275h1V274h4V273h1V274h2V272h1V273h5V272h2V274h1V275h1V273h2V274h1V275h1V274h2V275h1V274h1V275h1V274h2V273h1V274h6V273h2V274h1V275h1V274h2V275h1V274h2V275h1V271h1V274h7V273h2V274h2V275h1V274h1V275h1V273h1V274h1V273h1V274h1V273h2V274h1V275h1V274h1V273h1V274h2V275h1V274h3V273h1V274h3V273h1V274h3V273h1V275h1V274h3V273h5V272h1V274h1V273h2V274h4V275h1V274h6V275h3V274h3V275h1V274h2V275h2V274h4V272h1V274h5V273h1V274h4V275h1V274h1V275h2V274h6V275h1V274h1V273h1V275h2V274h1V272h1V274h1V275h1V273h1V275h2V274h5V272h1V274h2V275h2V274h1V275h1V274h3V275h1V274h2V273h1V275h1V274h1V273h2V274h1V273h1V274h3V273h1V274h3V275h1V274h4V275h2V274h4V275h1V274h1V275h1V273h2V275h1V274h5V275h1V274h3V275h1V274h4V275h3V274h2V273h1V274h1V275h1V274h3V275h1V274h2V275h1V274h2V275h1V273h1V274h6V275h2V273h1V275h1V274h5V275h1V274h5V275h1V274h2V275h1V274h6V272h1V274h3V273h1V274h3V273h1V274h2V275h1V274h1V275h1V274h5V273h1V274h1V275h1V274h2V272h1V273h2V274h2V275h2V274h4V275h3V274h8V275h1V274h4V275h1V274h3V273h2V275h1V274h1V273h1V274h8V275h1V273h1V275h1V274h1V273h3V274h1V273h1V274h9V275h1V274h3V275h3V274h2V273h1V275h2V273h1V274h2V273h4V272h1V274h1V272h1V273h1V274h1V275h1V273h1V274h7V273h1V274h5V273h1V274h1V275h1V272h1V273h1V274h5V275h1V274h1V275h1V273h1V274h1V275h1V274h7V275h2V273h1V274h11V275h1V273h1V274h3V275h1V274h8V275h1V274h4V272h1V274h1V275h1V273h1V274h4V272h1V273h2V274h1V273h1V274h2V275h1V274h2V273h1V274h3V273h1V274h1V273h1V274h5V275h1V274h2V273h1V274h3V275h1V274h6V272h1V274h6V273h1V274h2V273h2V274h1V275h1V274h4V273h1V274h3V275h1V273h1V274h1V273h1V274h3V273h1V274h3V275h1V274h3V273h1V274h4V275h1V274h2V275h1V272h1V274h2V275h1V274h3V272h1V274h2V273h1V274h2V275h1V274h1V275h1V274h4V275h1V274h5V275h1V274h1V275h1V274h1V275h3V274h2V273h1V274h4V275h1V274h3V275h1V274h2V275h1V274h2V273h1V275h1V274h3V275h1V274h1V273h1V274h5V273h1V274h2V275h1V273h1V274h15V273h2V274h1V275h1V274h3V273h1V274h1V275h1V273h2V274h4V275h1V274h3V273h3V274h6V273h1V274h2V275h1V274h5V275h2V274h1V275h1V274h3V272h1V274h3V273h1V275h1V274h1V273h1V274h2V275h1V274h6V275h1V274h1V275h1V273h1V275h1V274h2V275h1V274h8V275h2V274h2V273h1V274h4V273h1V274h2V275h1V274h2V273h1V274h1V273h2V274h1V275h1V274h1V273h2V274h1V273h1V274h6V275h1V274h3V275h1V274h4V273h2V274h4V275h1V274h3V273h2V274h1V275h1V274h1V275h1V272h1V275h1V273h1V274h7V273h1V275h1V274h11V273h1V274h1V273h1V274h6V275h1V274h1V275h2V274h1V273h2V274h3V275h1V274h2V273h1V274h1V273h1V274h5V275h2V274h1V275h1V274h3V275h1V274h4V273h1V274h3V273h1V274h2V273h3V275h1V274h3V275h1V274h1V275h2V273h1V275h1V274h1V273h1V274h1V273h2V274h2V272h1V274h1V272h1V273h1V272h1V274h1V273h1V274h3V273h1V274h3V275h3V274h1V272h1V274h1V273h1V274h6V275h1V274h4V275h1V274h6V273h3V274h1V272h2V273h1V271h1V273h1V272h1V274h4V273h1V274h1V275h3V274h4V273h2V274h6V273h1V274h6V275h1V274h2V273h1V274h1V275h1V274h1V275h1V273h1V275h1V271h1V274h6V273h1V274h1V273h1V274h10V273h2V274h5V272h1V274h2V275h1V274h2V273h1V275h2V274h1V273h1V274h3V275h1V274h1V275h2V279h-2V278h-1V279h-1V278h-5V279h-2V278h-3V279h-1V278h-2V277h-1V278h-2V279h-1V278h-3V277h-1V278h-2V279h-1V278h-7V277h-1V278h-8V277h-1V279h-3V278h-1V279h-1V278h-2V279h-1V278h-1V279h-1V278h-3V279h-1V278h-2V277h-1V278h-7V277h-1V278h-1V279h-1V278h-2V279h-3V278h-7V279h-1V278h-1V281h-1V280h-1V279h-1V280h-1V279h-2V278h-7V280h-1V278h-4V279h-1V280h-1V278h-4V279h-1V277h-1V278h-1V279h-1V278h-1V279h-3V278h-7V277h-1V278h-2V279h-1V278h-1V280h-1V279h-1V280h-2V279h-1V278h-1V280h-1V277h-1V278h-1V279h-1V277h-1V279h-3V280h-1V279h-1V278h-2V279h-1V277h-1V278h-1V277h-1V280h-1V278h-1V277h-1V278h-3V280h-1V278h-4V279h-1V278h-3V279h-1V278h-1V279h-2V278h-5V277h-1V278h-1V277h-1V278h-1V279h-2V278h-6V279h-1V280h-1V278h-1V279h-1V278h-4V279h-1V278h-3V280h-1V278h-11V279h-1V277h-1V278h-8V279h-1V278h-1V280h-1V278h-1V279h-1V278h-2V279h-1V278h-2V279h-2V278h-4V279h-1V278h-5V279h-1V278h-3V279h-1V278h-6V277h-1V278h-1V279h-1V278h-1V279h-2V278h-1V277h-2V278h-1V277h-1V278h-2V279h-1V278h-10V279h-2V278h-5V279h-1V278h-2V279h-1V278h-2V279h-1V278h-1V279h-1V278h-1V279h-1V278h-6V279h-1V278h-2V277h-1V278h-1V279h-1V280h-1V279h-1V278h-6V279h-1V278h-1V279h-1V280h-1V278h-5V279h-1V278h-11V277h-1V278h-3V279h-1V278h-1V279h-1V278h-2V277h-1V278h-1V279h-1V278h-3V279h-3V278h-1V279h-1V278h-1V279h-1V278h-2V279h-1V278h-5V279h-1V278h-5V277h-1V279h-1V278h-2V279h-1V280h-1V278h-3V279h-1V278h-2V279h-1V278h-3V279h-1V277h-1V278h-2V279h-1V278h-2V279h-1V278h-2V279h-2V278h-7V279h-5V278h-1V279h-1V278h-5V279h-1V278h-4V280h-1V278h-1V279h-1V278h-2V277h-1V280h-1V278h-3V279h-1V278h-1V279h-1V278h-3V279h-1V278h-2V279h-1V278h-3V280h-1V278h-1V279h-1V278h-2V279h-1V278h-3V277h-1V278h-3V277h-1V278h-1V277h-1V279h-1V278h-3V277h-1V278h-4V279h-1V278h-1V277h-2V278h-2V277h-1V280h-1V278h-2V279h-1V278h-3V279h-1V278h-5V280h-1V278h-6V279h-1V278h-3V279h-1V278h-4V279h-1V278h-1V280h-1V277h-1V278h-2V279h-1V278h-5V277h-2V278h-4V277h-1V279h-1V278h-4V280h-1V279h-3V278h-7V279h-1V280h-1V278h-3V279h-1V278h-8V279h-1V278h-3V279h-2V278h-5V279h-1V278h-1V279h-1V278h-1V277h-1V279h-1V278h-1V279h-1V278h-1V279h-1V278h-3V277h-2V279h-1V278h-4V279h-1V278h-2V277h-1V278h-7V277h-1V279h-3V280h-1V281h-1V280h-1V279h-5V278h-2V279h-2V277h-1V278h-2V279h-3V278h-3V279h-1V278h-2V279h-2V278h-2V279h-3V277h-1V280h-1V277h-1V279h-1V277h-1V278h-1V279h-1V277h-1V279h-1V278h-8V279h-3V278h-4V279h-2V278h-1V279h-1V278h-2V279h-2V278h-7V279h-3V278h-1V279h-1V278h-2V279h-5V278h-1V277h-1V278h-2V279h-1V278h-7V279h-1V278h-1V279h-1V278h-2V277h-1V278h-2V279h-1V278h-6V279h-1V278h-3V280h-1V279h-1V278h-2V279h-3V278h-3V279h-1V278h-5V281h-1V277h-1V279h-2V278h-7V279h-1V278h-2V279h-1V278h-2V279h-1V278h-1V279h-1V278h-1V279h-1V278h-4V279h-3V278h-4V279h-1V278h-3V279h-1V278h-5V279h-1V277h-2V280h-1V278h-1V279h-1V278h-3V280h-3V278h-4V279h-1V278h-4V279h-1V278h-3V279h-1V277h-1V278h-1V279h-2V278h-3V281h-1V278h-2V279h-2V278h-1V279h-2V278h-2V277h-1V278h-5V279h-2V277h-1V279h-1V278h-3V279h-3V278h-1V279h-1V278h-3V279h-1V278h-2V279h-4V278h-2V280h-1V278h-12V279h-2V278h-1V279h-2V278h-1V279h-1V278h-1V279h-3V278h-6V279h-1V278h-3V279h-3V280h-2V279h-4V278h-4V279h-1V278h-3V280h-1V277h-1V278h-1V279h-1V278h-1V279h-1V278h-3V279h-1V278h-4V280h-1V278h-2V277h-1V278h-1V277h-1V278h-1V277h-1V279h-1V278h-1V279h-1V278h-3V277h-1V278h-7V277h-1V279h-2V278h-1V279h-1V278h-2V279h-1V278h-1V277h-1V278h-3V279h-1V278h-3V277h-1V278h-2V279h-1V278h-1V279h-4V278h-1V279h-1V278h-1V280h-2V279h-2V280h-1V279h-3V278h-1V277h-1V278h-2V277h-1V278h-2V279h-1V278h-1V279h-1V278h-4V279h-1V278h-3V277h-2V278h-2V279h-1V277h-1V279h-1V278h-1V277h-1V279h-1V278h-2V279h-1V278h-4V277h-1V279h-1V278h-1V279h-2V278h-1V277h-1V278h-3V279h-2V278h-4V279h-1V278h-1V279h-1V278h-2V279h-2V278h-2V279h-1V278h-5V279h-1V278h-1V279h-1V278h-2V279h-2V278h-1V279h-2V278h-1V280h-1V279h-1V278h-3V279h-1V277h-1V279h-2V278h-3V279h-1V278h-5V277h-1V279h-2V278h-2V279h-3V278h-8V279h-1V278h-4V277h-1V278h-1V277h-1V278h-10V279h-1V278h-2V279h-1V278h-3V279h-1V278h-1V279h-1V278h-4V277h-1V279h-1V278h-3V279h-1V278h-1V279h-1ZM277 303h1V304h1V305h1V304h1V303h1V304h2V303h1V304h10V305h1V304h4V303h1V304h1V305h1V304h2V305h1V303h1V304h2V305h1V304h1V305h2V304h2V305h1V304h3V303h2V305h1V304h1V303h1V304h4V305h1V304h1V305h1V304h9V303h1V304h1V305h1V303h2V304h1V305h1V304h1V305h1V304h4V303h1V305h1V303h1V304h2V305h1V304h2V305h1V304h5V305h2V304h1V305h2V304h1V305h1V304h2V305h1V303h1V304h2V305h1V304h1V303h1V304h3V305h1V304h1V305h1V303h1V304h3V305h1V304h1V305h1V304h3V305h1V304h1V305h1V304h1V305h1V304h2V305h1V304h1V305h1V304h1V305h1V304h2V303h1V304h1V303h2V302h1V303h2V304h1V303h4V304h2V305h1V304h2V305h1V304h1V305h1V303h1V304h1V305h1V304h2V303h1V305h1V304h2V303h1V304h4V305h1V304h11V305h1V304h2V303h2V304h3V305h1V304h4V302h1V303h2V304h1V305h1V304h1V303h1V304h1V305h3V304h2V305h1V304h1V305h1V304h1V305h1V304h5V302h1V304h1V303h1V304h1V302h1V304h4V305h1V303h1V304h2V303h1V302h1V305h1V303h1V304h3V305h1V302h1V304h5V305h2V304h7V305h1V304h2V303h1V305h1V304h1V305h1V304h2V305h1V304h1V305h1V304h1V303h2V304h3V303h1V305h2V304h7V303h1V304h4V303h1V304h1V305h1V304h1V305h1V304h2V303h1V304h6V305h2V304h8V305h1V304h3V305h1V304h1V305h1V304h1V302h1V304h3V305h2V304h1V303h1V304h1V303h1V302h1V304h1V303h1V304h1V305h1V303h1V304h11V305h1V304h5V305h1V304h3V302h1V304h5V305h1V303h1V304h1V303h2V304h1V305h1V303h2V302h1V304h5V305h1V304h7V305h1V304h2V305h1V304h1V305h1V304h2V305h1V304h1V303h2V304h3V303h1V304h1V302h1V304h2V303h1V304h2V305h1V304h2V305h2V304h1V305h1V304h5V305h1V304h1V305h1V304h6V305h1V304h4V303h1V305h1V304h7V305h1V303h1V304h2V305h1V304h1V303h1V304h2V305h3V304h3V303h1V305h1V304h4V303h1V304h1V305h1V304h8V305h1V304h5V302h1V304h1V305h1V304h1V303h1V304h14V305h2V304h1V303h3V304h2V305h1V304h6V303h2V304h3V303h1V304h3V303h1V304h5V302h1V305h1V304h4V303h1V305h1V303h1V304h5V303h1V304h1V302h1V304h1V305h1V304h3V305h1V304h1V305h1V304h2V305h2V304h2V303h1V304h1V303h1V304h2V305h1V304h9V305h1V304h6V303h1V304h4V302h1V303h1V304h8V305h1V304h1V305h1V304h3V303h2V305h2V304h1V303h2V304h1V303h1V305h1V304h1V305h1V304h3V305h1V304h2V305h1V303h1V304h17V305h1V304h1V305h1V304h4V305h1V304h1V303h1V305h1V304h1V305h1V304h1V305h1V304h5V303h1V305h1V303h1V304h1V302h1V304h3V305h1V304h1V302h1V304h1V305h1V304h10V303h2V304h1V303h1V304h2V305h1V304h1V303h1V304h3V305h2V304h2V303h1V304h2V305h1V304h3V305h1V304h1V305h2V304h2V305h1V304h5V303h1V304h3V303h1V304h4V303h1V305h1V304h1V303h1V304h2V303h2V305h1V304h5V303h1V304h4V305h1V304h2V305h1V303h1V304h2V305h1V304h2V305h1V303h3V304h3V305h2V304h3V305h1V304h2V303h1V304h2V305h1V304h1V305h1V304h1V305h1V304h4V305h1V304h3V305h1V304h1V305h1V304h1V305h2V304h2V303h1V304h3V305h1V304h3V303h1V305h1V304h7V303h1V304h1V305h1V304h1V305h1V304h3V305h1V304h1V303h1V304h3V303h1V304h8V303h2V304h4V302h1V304h4V305h1V304h2V305h1V304h1V303h1V304h4V302h1V304h3V305h1V304h1V303h1V304h6V305h2V304h2V305h1V304h2V303h1V304h3V305h1V303h2V305h1V304h3V305h1V304h3V305h1V303h1V304h1V303h1V304h1V303h1V304h10V303h1V304h8V303h1V304h1V305h1V304h1V305h2V304h2V305h1V304h3V305h1V304h4V305h1V304h2V303h1V304h1V305h1V304h3V305h1V304h1V303h1V304h3V302h1V305h1V303h2V304h3V303h1V304h8V303h1V304h2V305h1V303h1V304h1V303h1V304h4V302h1V304h2V305h1V303h1V305h1V304h2V305h1V304h3V305h1V304h1V305h1V304h4V305h1V303h1V305h2V304h1V305h1V304h3V305h1V304h1V303h1V304h3V305h1V304h1V303h1V304h5V303h1V304h1V303h2V302h1V304h1V302h1V303h1V304h2V303h1V304h3V303h1V304h3V302h1V304h4V305h1V303h1V304h2V305h1V304h1V305h1V304h2V303h1V304h3V305h1V304h1V305h1V302h1V304h1V305h1V304h2V305h1V304h2V305h1V304h3V305h1V304h3V305h1V304h3V305h1V304h1V305h1V304h4V305h1V303h1V304h2V303h1V304h7V305h1V304h1V303h2V304h1V302h1V304h2V303h1V304h4V305h2V303h1V304h1V305h1V304h4V305h1V304h3V305h1V304h1V305h1V310h-1V309h-1V310h-1V309h-3V310h-1V309h-4V310h-1V309h-2V310h-1V311h-1V309h-9V308h-1V309h-1V310h-2V309h-5V310h-1V309h-1V308h-1V309h-3V310h-1V311h-1V309h-3V310h-1V309h-1V310h-1V309h-3V310h-1V309h-3V310h-1V309h-3V310h-1V309h-2V310h-1V309h-2V310h-1V309h-2V310h-1V309h-1V310h-2V309h-2V310h-1V309h-2V310h-1V309h-1V310h-1V309h-2V308h-1V310h-1V309h-2V310h-2V308h-1V309h-2V310h-1V309h-2V310h-1V309h-3V310h-1V309h-1V310h-1V311h-5V310h-1V309h-7V310h-1V309h-5V310h-1V309h-3V310h-1V309h-1V310h-2V308h-1V310h-1V309h-3V310h-2V309h-1V310h-1V309h-3V310h-1V309h-2V310h-1V308h-1V310h-1V309h-9V308h-1V310h-1V309h-15V308h-1V309h-1V310h-1V309h-4V310h-1V309h-1V310h-1V309h-2V311h-1V310h-1V309h-4V310h-1V309h-4V310h-1V309h-3V310h-1V309h-2V310h-2V309h-1V310h-1V309h-1V308h-1V309h-2V310h-1V309h-3V310h-1V309h-5V310h-1V309h-11V310h-1V309h-3V310h-1V309h-3V310h-1V309h-2V310h-1V309h-1V310h-1V309h-1V308h-1V310h-2V312h-1V309h-2V310h-2V309h-6V308h-1V309h-1V310h-1V309h-10V310h-1V309h-2V310h-1V309h-13V311h-1V309h-7V310h-1V309h-1V308h-1V309h-1V312h-1V309h-2V310h-2V309h-1V311h-1V309h-1V308h-1V309h-7V310h-1V309h-3V310h-2V309h-1V310h-1V309h-2V311h-1V309h-1V310h-2V309h-1V310h-1V309h-1V310h-1V309h-3V310h-1V309h-1V310h-1V309h-2V310h-2V312h-1V309h-1V310h-1V309h-2V308h-1V309h-2V310h-1V309h-1V311h-1V310h-3V311h-1V309h-2V308h-1V309h-1V310h-1V311h-1V309h-2V310h-1V309h-3V310h-1V309h-2V310h-1V309h-10V310h-1V309h-3V310h-1V309h-2V310h-1V309h-15V310h-1V309h-2V310h-2V309h-1V310h-1V309h-3V310h-1V309h-2V310h-1V311h-1V309h-1V310h-3V309h-2V308h-1V309h-1V310h-1V309h-4V308h-1V310h-1V309h-2V310h-1V309h-7V310h-1V309h-3V310h-1V309h-1V310h-1V309h-1V308h-1V309h-1V308h-1V310h-1V309h-6V310h-1V309h-1V310h-3V308h-1V309h-1V310h-1V309h-4V310h-1V309h-1V310h-1V309h-17V308h-1V312h-1V309h-2V310h-1V309h-3V310h-1V309h-1V310h-1V308h-1V310h-1V308h-1V310h-1V309h-1V311h-1V310h-1V309h-1V308h-1V309h-1V310h-1V309h-1V310h-1V309h-1V310h-1V311h-1V309h-2V310h-1V309h-4V308h-1V309h-4V310h-1V309h-7V311h-1V309h-4V310h-1V309h-4V310h-1V309h-2V308h-1V309h-4V310h-3V309h-1V310h-1V309h-1V310h-1V309h-3V310h-1V309h-9V308h-1V310h-1V309h-3V310h-1V309h-1V310h-1V308h-1V309h-1V310h-3V309h-1V310h-1V309h-7V308h-2V309h-4V310h-1V309h-1V310h-1V309h-3V308h-1V310h-1V309h-1V310h-2V309h-9V310h-1V309h-4V308h-1V309h-1V310h-2V309h-6V311h-1V309h-1V310h-1V311h-1V309h-1V310h-1V309h-3V311h-1V309h-1V310h-1V309h-1V310h-1V309h-2V310h-2V309h-3V310h-3V309h-2V310h-1V309h-1V311h-1V309h-2V308h-1V310h-1V309h-7V310h-1V308h-1V311h-1V309h-3V310h-1V309h-4V310h-1V311h-1V310h-1V309h-1V310h-1V309h-5V311h-1V310h-2V311h-1V309h-1V310h-1V311h-1V309h-6V310h-1V308h-1V309h-4V308h-1V309h-1V312h-1V309h-2V310h-1V309h-1V310h-1V309h-1V311h-1V310h-1V309h-7V310h-1V309h-8V311h-1V309h-1V308h-1V309h-2V308h-1V310h-1V309h-8V310h-1V311h-1V310h-1V309h-1V310h-1V309h-2V310h-2V309h-3V310h-1V309h-5V310h-1V308h-1V310h-1V309h-1V308h-1V309h-3V311h-1V308h-1V309h-1V310h-2V309h-5V310h-1V309h-1V310h-1V309h-3V310h-1V309h-8V310h-2V309h-2V311h-1V309h-1V310h-1V309h-4V310h-1V309h-1V310h-1V309h-1V308h-1V309h-12V310h-2V309h-2V310h-2V309h-1V308h-1V311h-2V309h-1V310h-1V311h-1V309h-1V310h-1V309h-1V310h-1V309h-1V310h-1V309h-1V310h-1V309h-7V312h-1V311h-1V309h-1V310h-1V309h-4V310h-1V309h-4V310h-1V309h-1V308h-1V309h-3V310h-1V309h-8V310h-1V309h-5V310h-1V309h-1V310h-1V309h-1V310h-1V309h-1V311h-1V310h-3V309h-1V308h-1V309h-1V310h-1V309h-2V308h-1V310h-1V309h-4V311h-1V309h-4V308h-1V309h-2V310h-3V309h-4V311h-1V310h-1V309h-3V310h-1V309h-7V310h-1V308h-1V309h-2V310h-2V308h-1V310h-1V309h-1V310h-1V309h-1V310h-3V311h-1V308h-1V309h-2V310h-1V311h-2V312h-1V310h-3V311h-1V309h-3V310h-1V309h-1V310h-1V309h-1V310h-1V309h-2V310h-1V309h-1V310h-1V309h-1V310h-1V309h-3V310h-1V309h-1V310h-1V309h-3V308h-1V310h-3V309h-5V310h-1V309h-3V310h-1V309h-2V310h-1V309h-1V311h-1V310h-1V309h-1V310h-2V309h-5V310h-1V309h-2V311h-1V309h-3V310h-1V308h-1V309h-4V310h-1V309h-1V310h-1V309h-2V308h-1V310h-1V309h-7V310h-1V309h-3V310h-1V309h-1V310h-2V309h-3V308h-1V309h-1V310h-1V309h-4V310h-1V311h-1V309h-2V310h-2V309h-1V310h-1V309h-2V308h-1V310h-1V309h-2V310h-1V309h-2V310h-1V309h-3V310h-2V309h-6V310h-1V309h-4V310h-1V308h-1V309h-1V310h-1V309h-2ZM277 334h1V335h1V333h1V335h1V334h1V332h1V334h1V335h1V334h1V335h1V334h2V333h3V334h2V335h1V334h6V333h1V334h2V335h1V334h6V333h1V334h4V333h1V335h1V334h2V335h1V334h1V333h1V334h3V335h2V334h7V335h1V334h2V335h1V334h4V333h1V334h2V333h1V335h1V332h1V334h5V333h1V334h2V333h1V334h1V332h1V334h1V333h1V334h1V335h1V334h3V335h1V334h4V333h1V335h1V334h3V335h1V334h2V335h1V334h1V335h1V333h1V334h2V335h1V334h4V333h1V334h1V335h1V334h2V333h1V334h2V335h2V334h1V335h2V334h8V335h1V333h1V334h2V335h1V332h1V335h2V332h1V335h2V334h3V335h1V333h2V335h2V334h1V335h1V334h1V335h1V334h1V335h1V334h1V332h1V334h2V335h1V334h2V335h1V334h1V335h1V334h8V335h1V334h3V335h2V334h3V333h1V334h1V335h2V334h1V335h1V334h9V333h1V334h4V333h2V334h3V335h1V334h1V333h1V334h5V335h1V334h4V335h1V334h1V333h1V335h2V334h1V333h1V335h1V334h2V335h2V334h1V333h1V334h1V335h1V334h5V335h1V333h1V335h1V334h10V335h1V334h1V335h1V334h5V335h3V334h8V332h1V334h6V333h1V335h1V334h8V332h1V334h1V335h1V333h1V334h1V333h1V334h1V333h1V334h2V332h1V334h2V333h1V335h1V334h1V335h1V334h3V333h1V334h1V335h2V334h5V333h1V334h1V335h1V334h3V333h1V334h1V335h1V334h6V333h1V334h2V335h1V334h2V332h1V334h1V335h1V334h3V335h1V334h4V335h1V334h1V335h1V334h7V335h1V334h6V335h1V334h3V333h3V334h2V333h1V334h2V333h1V335h1V334h4V335h1V334h2V335h1V334h1V333h1V334h2V333h1V334h5V333h1V334h1V335h1V333h1V335h1V334h8V333h1V334h1V335h1V334h3V333h1V334h2V332h1V333h1V334h4V335h1V334h1V335h2V334h1V333h1V334h7V333h1V332h1V334h3V335h1V334h1V333h1V335h2V334h1V333h1V332h1V334h3V332h1V334h2V333h1V334h3V333h2V332h1V334h3V335h1V334h1V333h1V334h5V333h1V334h4V333h1V334h1V333h1V335h1V333h1V334h1V333h2V332h2V333h1V334h1V333h1V335h1V334h1V335h1V334h2V332h1V334h2V333h1V334h4V333h2V335h1V334h1V335h1V334h1V335h2V334h2V335h1V334h3V333h1V334h1V335h1V334h3V333h1V334h3V335h1V334h4V335h3V333h1V334h1V335h1V334h2V335h1V334h1V335h1V334h2V333h1V334h2V335h2V334h4V333h1V334h1V335h1V334h2V332h1V335h1V334h10V333h3V334h3V333h1V334h3V335h1V334h2V332h1V334h4V333h1V335h1V334h2V333h1V335h2V334h2V333h1V334h1V333h2V335h1V334h6V333h1V334h1V333h1V334h5V335h2V334h3V333h1V334h4V335h1V334h2V333h1V334h2V332h1V334h1V335h2V334h2V333h1V334h1V335h1V334h1V335h1V334h1V335h1V334h1V333h1V334h2V335h1V334h1V333h1V334h2V335h1V333h1V334h2V332h1V334h10V335h1V334h2V335h1V333h1V335h1V334h3V335h1V334h4V335h2V334h2V335h1V334h1V332h1V335h2V334h1V333h1V334h2V335h1V334h1V335h1V333h1V334h6V335h1V333h2V334h8V333h1V335h1V334h3V335h1V334h3V333h1V334h1V335h1V334h1V335h1V334h1V335h1V334h2V335h1V334h2V335h1V334h1V335h1V334h3V335h2V334h8V333h1V334h2V333h1V334h2V332h1V334h1V332h1V334h4V335h2V334h2V332h1V334h6V335h1V334h2V335h3V333h1V334h2V335h1V333h1V335h2V334h1V335h2V334h1V332h1V334h2V335h1V334h1V335h1V334h6V335h1V334h4V335h1V334h1V333h1V334h4V335h1V334h1V335h1V333h1V334h1V335h1V334h1V335h1V333h1V334h3V335h1V333h2V335h1V334h1V335h2V334h4V335h1V334h3V335h1V334h1V335h1V334h1V333h1V334h3V335h2V334h2V333h1V334h2V335h1V334h1V335h1V334h2V335h3V334h1V335h1V333h1V334h4V335h2V334h3V333h1V334h3V335h1V334h1V335h2V334h2V335h1V334h2V333h1V334h7V333h1V334h1V335h1V334h12V333h1V334h2V335h1V334h1V335h1V334h3V335h1V334h8V333h1V335h1V334h13V335h1V334h2V335h1V334h2V333h1V334h2V335h1V334h7V333h2V334h2V333h1V334h1V333h1V334h2V333h1V334h4V335h1V334h2V333h1V334h6V335h1V334h2V332h1V335h1V334h1V332h1V334h1V333h1V335h1V334h1V333h1V334h2V333h1V334h10V333h2V334h1V333h1V334h2V335h1V334h5V335h1V333h1V334h2V335h1V334h2V333h1V334h9V333h1V334h7V333h3V334h3V335h2V334h1V333h1V334h1V335h2V334h1V335h1V334h6V335h1V334h1V335h1V334h3V335h1V334h4V333h1V334h3V332h1V334h1V335h2V334h1V333h1V335h1V334h1V335h1V334h2V332h1V334h1V333h1V335h1V333h2V334h2V333h1V335h2V334h2V339h-2V340h-2V339h-5V340h-1V339h-5V340h-1V339h-1V340h-1V338h-1V339h-1V340h-2V339h-6V340h-3V339h-1V340h-2V339h-2V340h-1V339h-1V340h-1V339h-3V340h-1V339h-2V340h-1V339h-1V340h-1V341h-1V339h-3V341h-1V340h-2V339h-4V338h-1V339h-7V340h-1V339h-7V341h-1V339h-1V338h-1V339h-2V340h-1V339h-2V338h-1V340h-1V339h-5V340h-3V338h-1V339h-1V338h-2V339h-5V341h-1V339h-4V338h-1V339h-4V340h-1V338h-1V339h-3V340h-1V339h-3V340h-1V339h-2V341h-1V339h-3V338h-1V339h-2V340h-1V339h-7V340h-1V339h-4V338h-2V339h-7V340h-1V339h-2V338h-1V339h-2V340h-1V339h-2V342h-1V339h-3V341h-1V340h-2V339h-2V340h-1V339h-4V340h-1V339h-5V340h-1V339h-3V340h-1V339h-3V340h-1V339h-1V340h-1V339h-2V338h-1V339h-12V340h-1V339h-1V338h-1V339h-1V340h-1V339h-5V338h-1V339h-2V340h-1V339h-2V340h-1V341h-1V339h-1V340h-1V339h-7V340h-3V339h-3V338h-1V340h-1V339h-1V342h-1V340h-2V339h-2V340h-3V339h-3V340h-4V339h-3V338h-1V339h-1V340h-1V339h-1V340h-1V339h-3V340h-1V339h-3V340h-3V339h-1V340h-1V339h-1V338h-1V340h-1V339h-4V340h-1V339h-1V340h-1V339h-1V338h-1V341h-1V339h-1V340h-1V339h-5V340h-2V339h-1V340h-1V339h-1V340h-3V339h-3V340h-1V339h-1V340h-1V339h-1V340h-2V339h-1V340h-1V341h-1V340h-2V339h-1V340h-2V338h-1V340h-2V339h-1V338h-1V340h-4V339h-1V340h-1V339h-1V341h-1V339h-4V340h-1V339h-2V340h-2V339h-4V338h-1V340h-1V338h-1V339h-5V338h-1V339h-8V340h-2V339h-3V340h-1V339h-1V340h-1V339h-2V340h-1V339h-2V340h-1V339h-1V340h-1V339h-1V340h-1V339h-3V341h-1V339h-1V340h-1V339h-3V340h-2V339h-8V338h-1V340h-2V339h-2V340h-1V339h-3V340h-2V339h-1V340h-1V339h-4V340h-2V338h-1V339h-1V340h-1V339h-2V340h-3V339h-3V340h-1V339h-3V340h-1V338h-1V340h-1V339h-2V340h-1V339h-3V340h-1V339h-10V340h-1V339h-4V340h-1V339h-4V340h-1V339h-1V340h-1V339h-1V340h-1V339h-1V338h-1V340h-1V339h-1V340h-2V339h-4V338h-1V339h-2V340h-1V339h-6V340h-1V339h-1V340h-2V339h-4V340h-1V338h-1V339h-1V340h-1V339h-1V340h-1V339h-4V340h-1V338h-1V339h-2V340h-1V339h-2V340h-2V338h-1V339h-2V340h-1V339h-8V340h-1V339h-1V340h-1V339h-1V338h-1V339h-2V340h-1V338h-1V339h-1V338h-1V339h-7V340h-1V339h-2V340h-1V338h-1V339h-2V340h-2V338h-1V339h-4V340h-2V339h-5V340h-1V339h-1V340h-1V339h-2V340h-1V339h-1V338h-1V341h-1V340h-2V339h-4V340h-1V339h-3V338h-1V339h-3V340h-2V339h-4V341h-1V339h-2V340h-2V339h-1V340h-1V339h-1V340h-1V338h-1V339h-3V340h-1V339h-1V338h-1V339h-5V340h-1V339h-1V340h-2V341h-1V340h-1V341h-1V340h-1V341h-1V340h-1V341h-1V340h-2V338h-1V339h-6V338h-1V339h-7V341h-1V339h-3V338h-3V339h-4V341h-1V339h-1V338h-1V339h-3V338h-1V339h-2V340h-1V341h-1V339h-2V340h-1V341h-1V339h-11V338h-1V339h-1V340h-2V339h-1V340h-1V339h-5V338h-1V339h-6V340h-1V339h-9V340h-2V338h-1V340h-1V339h-7V338h-1V340h-1V339h-3V340h-2V339h-1V341h-1V339h-4V340h-1V339h-1V340h-1V339h-1V338h-1V339h-2V338h-1V339h-1V338h-1V339h-3V340h-2V339h-5V340h-1V339h-6V341h-1V340h-1V339h-1V340h-2V339h-3V340h-1V339h-3V340h-1V339h-4V340h-1V339h-1V340h-1V338h-1V339h-6V340h-2V339h-4V340h-1V339h-1V338h-1V339h-5V340h-1V341h-1V339h-1V338h-1V340h-1V339h-1V340h-2V339h-1V341h-1V339h-5V340h-1V339h-2V338h-1V339h-1V338h-1V340h-2V338h-1V339h-8V340h-1V338h-1V339h-4V340h-1V339h-1V338h-1V339h-8V340h-3V339h-1V340h-1V339h-3V340h-1V339h-1V340h-1V339h-3V340h-1V339h-5V340h-2V339h-1V340h-1V339h-5V340h-1V339h-3V340h-2V339h-2V340h-1V338h-1V339h-1V340h-2V338h-1V339h-1V340h-1V339h-1V340h-1V339h-2V340h-1V339h-4V340h-1V339h-2V340h-1V339h-4V338h-1V339h-2V340h-1V339h-1V338h-1V340h-1V339h-7V340h-2V339h-1V340h-2V339h-4V341h-1V340h-2V339h-3V340h-2V339h-5V340h-1V339h-1V341h-1V339h-1V340h-1V339h-2V340h-1V339h-1V340h-1V338h-1V339h-1V340h-1V339h-1V340h-1V339h-1V340h-1V339h-1V340h-2V339h-2V340h-1V339h-1V340h-1V339h-1V340h-2V339h-1V341h-1V340h-1V339h-1V340h-1V339h-3V340h-1V339h-2V340h-1V339h-5V340h-2V339h-1V340h-1V341h-1V339h-2V338h-1V339h-2V340h-1V339h-6V340h-1V339h-3V340h-1V339h-1V340h-1V339h-1V340h-1V341h-1V339h-3V340h-2V339h-4V340h-1V339h-3V340h-1V339h-1V338h-1V339h-3V338h-1V341h-1V339h-1V342h-1V339h-6V340h-1V338h-1V339h-3V340h-1V339h-3V340h-1V339h-2V340h-1V339h-2V340h-1V339h-4V340h-2V339h-1V340h-1V339h-3V340h-1V339h-2V340h-1V338h-1V339h-4V338h-1V339h-6V340h-1V339h-9V340h-1V339h-3V338h-2V339h-2V341h-1V339h-1V341h-1V339h-3V340h-1V338h-1V341h-1V339h-1ZM277 366h1V365h1V364h1V365h1V366h1V365h6V363h1V366h2V365h1V366h1V365h5V364h1V365h1V363h1V366h2V364h1V366h1V365h4V364h1V365h1V366h2V365h3V366h1V365h1V364h1V365h9V364h2V365h1V366h1V365h5V364h1V365h3V366h1V365h1V366h2V365h4V364h1V365h1V366h1V365h3V366h1V365h1V364h1V366h1V363h1V365h6V364h1V365h5V366h1V365h2V364h1V366h1V365h1V364h1V365h10V366h1V365h2V364h1V366h2V365h3V364h1V365h2V366h1V365h3V366h1V363h1V365h6V364h1V365h1V366h1V365h1V364h2V365h11V366h1V365h5V366h1V364h2V365h1V364h1V365h2V366h1V365h1V364h1V365h2V366h1V365h4V366h1V365h4V366h1V365h3V364h1V365h1V364h1V366h1V364h1V365h13V364h1V365h7V366h1V365h8V364h1V365h2V364h1V365h1V366h1V365h11V366h1V365h2V364h1V365h1V363h1V365h3V366h1V365h7V366h1V365h2V363h1V365h1V366h1V364h1V365h1V366h2V365h9V366h2V365h1V364h1V365h4V366h4V364h2V365h1V363h1V365h1V366h1V365h3V362h1V365h3V364h1V366h1V365h1V366h2V364h1V365h4V364h1V366h1V365h3V364h1V365h1V364h1V365h1V364h1V366h1V365h1V364h1V365h1V364h1V366h1V365h1V366h1V365h2V366h1V365h1V364h1V366h1V365h1V364h1V365h2V364h1V366h1V365h1V366h1V365h3V366h1V365h2V366h1V365h3V363h1V365h5V364h1V365h4V366h1V365h3V363h1V364h1V365h7V366h1V365h2V366h2V365h5V364h1V365h1V366h1V364h1V365h2V366h1V365h1V366h1V365h1V364h1V365h8V364h1V365h1V366h1V364h1V365h3V364h3V365h7V366h1V365h6V364h1V365h1V366h2V365h1V366h1V365h3V366h2V365h3V364h1V366h1V365h1V364h1V365h4V366h1V365h3V366h1V365h1V364h1V365h3V364h1V365h1V364h2V366h1V365h1V366h3V365h4V366h1V365h2V363h1V365h4V366h2V365h2V364h2V365h1V366h1V364h1V366h1V364h1V365h3V366h1V365h1V366h1V365h4V366h1V365h5V366h1V365h1V364h1V365h3V364h1V365h1V366h1V365h4V366h1V365h2V363h1V365h2V364h1V365h1V366h1V365h4V366h1V365h1V364h1V365h1V366h2V363h2V365h4V366h1V365h6V366h1V365h2V366h1V365h1V366h1V365h1V364h2V363h1V365h2V366h1V365h2V364h1V365h2V364h1V365h4V364h1V366h1V365h7V366h2V364h1V365h11V366h1V365h2V366h2V365h3V364h1V365h1V366h2V365h2V364h1V365h1V366h1V365h1V366h1V365h1V366h1V364h2V365h2V366h1V365h1V364h1V365h1V364h1V365h5V366h1V364h1V365h1V366h1V365h3V366h1V365h1V364h1V365h1V364h1V365h7V366h1V365h3V366h1V365h1V366h2V365h1V366h3V365h2V364h1V366h1V364h1V365h2V366h1V365h1V366h2V365h1V366h1V365h9V366h1V365h4V366h1V365h5V363h1V365h13V366h1V365h5V363h1V365h6V366h2V364h1V365h5V366h2V365h1V366h1V363h1V365h2V364h3V365h1V364h1V363h1V364h1V363h2V365h1V366h1V365h1V364h1V365h3V364h1V365h3V364h1V366h2V364h1V365h5V363h1V365h3V366h1V365h1V364h1V365h1V364h1V365h3V366h1V365h2V366h1V365h6V366h1V363h1V365h1V366h1V365h2V366h1V365h1V366h2V364h1V366h1V365h2V366h1V365h1V366h1V365h2V364h1V366h1V363h1V364h1V365h2V366h1V365h1V364h1V365h5V366h2V365h2V363h1V365h3V366h1V365h2V364h1V363h1V365h1V366h1V365h1V364h2V365h3V364h2V365h3V366h1V365h2V364h1V366h1V364h1V366h1V365h1V364h1V365h1V364h1V365h1V363h1V365h2V364h1V365h4V364h1V365h1V366h2V365h3V366h1V365h1V364h1V365h1V366h1V365h4V363h1V365h3V366h1V365h1V366h2V365h4V366h1V365h2V366h1V365h1V366h1V365h2V366h1V365h1V364h1V365h3V363h1V365h1V364h1V365h1V364h1V365h3V366h1V364h1V365h3V364h1V365h8V366h1V365h1V363h1V365h3V363h1V364h1V365h1V366h1V364h1V365h5V364h1V365h10V366h1V365h7V366h1V365h3V364h2V365h7V366h1V364h1V365h7V364h1V366h1V365h1V364h1V366h1V365h1V364h1V365h1V364h2V365h5V364h1V365h2V364h1V365h2V366h1V365h1V366h1V365h4V366h1V365h1V366h1V364h1V365h3V364h1V365h1V366h1V365h12V366h1V365h3V366h1V365h9V366h1V365h2V366h1V365h5V364h1V365h5V366h1V365h1V366h1V365h4V366h2V365h4V366h1V365h6V363h1V365h1V364h1V365h1V366h1V365h1V366h1V365h1V366h1V365h1V363h1V365h5V366h1V365h6V366h1V365h1V366h1V365h3V366h1V365h5V364h1V368h-1V369h-5V370h-1V369h-3V370h-1V369h-1V370h-1V369h-4V370h-1V369h-1V370h-1V369h-7V371h-1V369h-1V370h-1V369h-1V370h-1V369h-2V370h-1V369h-4V370h-1V369h-2V371h-1V369h-3V370h-3V369h-4V370h-3V369h-1V370h-1V371h-1V369h-2V368h-1V369h-2V371h-1V369h-2V370h-1V369h-1V370h-2V369h-2V371h-1V369h-6V370h-1V369h-1V370h-1V369h-1V370h-2V369h-2V370h-1V369h-8V370h-1V369h-1V368h-1V369h-4V370h-1V369h-1V370h-1V369h-3V370h-2V369h-1V370h-1V369h-2V368h-1V371h-2V368h-1V369h-4V370h-1V369h-1V368h-1V369h-1V368h-1V370h-2V369h-2V370h-1V369h-5V370h-1V371h-1V369h-2V370h-1V369h-2V370h-2V369h-2V370h-1V369h-5V370h-1V369h-3V370h-1V369h-3V370h-1V369h-9V370h-1V369h-1V371h-1V369h-5V370h-1V369h-8V371h-1V369h-8V368h-1V370h-1V369h-3V370h-1V369h-3V368h-1V369h-1V368h-1V369h-3V370h-1V369h-1V368h-1V369h-1V370h-4V369h-1V370h-1V369h-2V370h-1V369h-3V370h-1V372h-1V371h-1V369h-1V370h-1V369h-5V370h-1V369h-1V371h-1V370h-1V369h-1V368h-1V369h-1V370h-1V369h-3V370h-2V369h-1V368h-1V369h-4V368h-1V371h-1V369h-3V368h-1V369h-1V368h-1V369h-1V370h-1V369h-1V370h-2V369h-2V370h-1V369h-8V368h-2V369h-1V370h-1V369h-2V368h-1V369h-2V370h-1V369h-4V370h-1V369h-1V370h-2V369h-2V370h-1V369h-4V370h-2V369h-1V368h-1V369h-1V371h-1V368h-1V369h-2V370h-1V369h-1V370h-4V368h-1V370h-2V369h-1V370h-1V369h-2V370h-2V371h-1V370h-1V369h-2V370h-2V369h-1V370h-2V369h-2V370h-1V369h-7V370h-1V369h-3V368h-1V369h-6V370h-2V369h-10V370h-1V371h-1V369h-1V370h-1V372h-1V370h-2V371h-1V370h-2V369h-1V370h-1V369h-2V370h-1V369h-1V370h-2V369h-5V370h-3V369h-7V370h-1V369h-4V370h-1V369h-7V370h-1V369h-5V368h-1V369h-4V371h-1V370h-1V369h-4V370h-1V369h-9V371h-1V370h-3V369h-1V371h-1V369h-3V370h-1V369h-3V370h-6V369h-1V370h-1V369h-3V370h-1V369h-1V370h-1V369h-4V370h-1V368h-1V369h-3V372h-1V369h-3V370h-1V369h-1V368h-1V370h-1V369h-5V368h-1V369h-3V370h-1V369h-1V370h-1V371h-1V369h-1V370h-1V369h-1V370h-1V369h-1V370h-1V369h-1V368h-1V369h-2V371h-1V370h-1V369h-1V368h-1V369h-3V370h-1V371h-1V369h-2V371h-1V370h-1V369h-3V370h-1V369h-2V370h-1V369h-4V370h-2V369h-4V370h-1V369h-2V370h-1V368h-1V370h-1V369h-3V368h-1V369h-2V368h-1V369h-2V370h-1V369h-2V368h-2V369h-2V370h-1V369h-1V370h-1V369h-1V370h-2V369h-6V370h-2V371h-1V369h-1V370h-1V369h-1V368h-1V370h-2V369h-1V368h-1V369h-1V370h-1V369h-4V371h-1V369h-7V370h-1V369h-1V370h-2V369h-1V370h-1V369h-3V371h-1V369h-2V370h-2V369h-5V370h-1V369h-4V370h-1V369h-1V370h-3V369h-1V368h-1V370h-1V368h-1V370h-1V369h-1V368h-2V369h-2V370h-2V369h-7V370h-3V369h-2V370h-2V371h-1V369h-1V370h-1V369h-1V368h-1V370h-1V369h-2V370h-1V369h-1V368h-1V369h-1V370h-1V369h-3V370h-1V369h-4V368h-1V369h-1V370h-1V368h-1V369h-2V371h-1V370h-3V369h-2V371h-1V370h-3V369h-8V370h-1V369h-1V370h-1V369h-5V370h-1V371h-1V368h-1V369h-3V368h-1V370h-1V369h-1V368h-1V369h-1V370h-1V369h-5V370h-1V369h-2V370h-1V369h-1V370h-1V369h-3V372h-1V369h-1V370h-1V369h-3V370h-1V369h-1V371h-1V370h-2V369h-1V370h-1V369h-6V370h-1V368h-1V369h-1V370h-1V369h-2V370h-1V369h-10V368h-1V369h-3V370h-1V369h-2V370h-1V369h-2V371h-1V370h-1V369h-1V370h-1V369h-3V368h-1V369h-1V370h-2V369h-1V370h-1V369h-1V370h-2V369h-1V370h-2V369h-3V370h-1V369h-2V368h-1V369h-1V368h-1V369h-1V371h-1V369h-1V370h-1V368h-1V369h-1V370h-1V369h-2V368h-1V370h-2V371h-1V370h-1V368h-1V369h-3V368h-1V369h-3V370h-1V369h-3V368h-2V370h-3V371h-1V369h-6V370h-1V371h-1V369h-9V370h-2V369h-1V368h-1V370h-1V369h-4V370h-1V369h-6V370h-2V369h-8V370h-1V369h-7V370h-1V369h-2V371h-1V370h-1V369h-4V368h-1V370h-1V369h-3V370h-1V369h-3V371h-1V369h-4V370h-1V369h-2V368h-1V369h-5V370h-1V369h-7V368h-1V370h-1V369h-6V370h-1V369h-4V370h-1V369h-4V370h-1V369h-4V370h-1V369h-3V370h-1V369h-1V368h-1V370h-1V369h-5V370h-1V369h-2V370h-2V369h-2V370h-1V369h-1V370h-1V369h-2V368h-1V369h-2V370h-1V369h-9V370h-1V369h-2V370h-2V369h-1V370h-1V368h-1V369h-3V370h-2V369h-3V370h-1V369h-12V370h-1V368h-1V370h-1V369h-1V370h-1V369h-5V368h-1V369h-6V368h-1V370h-1V369h-2V370h-1V369h-3V370h-1V369h-1V368h-1V369h-1V370h-2V371h-1V370h-2V369h-1V370h-1V369h-3V370h-1V369h-1V370h-1V369h-3V371h-1V369h-2V368h-1V369h-8V370h-1V369h-1V371h-1V370h-1V369h-3V370h-2V369h-1V368h-1V370h-1V369h-3V370h-1V368h-1V370h-2V369h-2V368h-1V369h-5V370h-1V369h-1V371h-1V370h-1V368h-1V369h-1V370h-1V369h-3V370h-2V369h-1V368h-1V369h-1V370h-1ZM277 395h3V396h2V395h1V396h1V395h5V396h1V395h3V394h1V395h1V394h1V396h2V395h3V394h1V395h2V394h1V395h1V396h2V395h9V396h1V395h2V393h1V394h1V395h6V396h1V395h1V394h1V395h2V394h1V396h1V395h6V394h2V395h1V394h1V395h3V394h1V395h3V396h1V395h2V393h1V395h4V396h1V394h1V395h1V396h1V395h7V394h1V395h1V394h1V395h1V396h1V394h1V395h3V396h1V394h1V395h1V396h2V395h1V394h2V395h1V396h1V395h1V394h2V395h2V396h2V394h1V395h3V396h1V393h1V395h4V396h1V395h14V396h2V393h1V395h5V396h1V395h6V396h2V395h7V394h1V395h1V394h1V395h3V396h1V395h1V394h1V395h1V394h2V395h13V396h1V394h1V396h1V395h6V396h1V395h4V396h2V395h4V396h1V395h3V396h1V394h1V395h7V396h1V395h8V394h1V395h1V394h1V395h9V394h1V396h1V395h1V396h1V394h1V395h3V394h1V395h4V396h1V395h2V394h2V395h2V394h1V395h6V396h1V395h1V396h1V395h7V396h1V395h3V396h1V395h2V394h1V395h3V394h1V395h9V396h2V395h3V394h1V396h1V395h3V396h1V395h4V396h1V395h3V394h1V395h3V394h1V395h1V396h1V394h1V395h1V396h1V395h2V396h1V395h2V396h1V395h5V394h1V395h1V394h1V395h1V396h1V394h1V395h11V396h1V395h1V394h1V395h3V396h3V395h2V393h1V395h4V394h1V395h3V394h1V396h2V395h6V394h1V396h2V393h1V395h2V394h3V395h1V396h2V395h5V394h2V396h1V395h2V394h1V396h1V395h3V394h1V395h3V393h1V395h1V394h1V395h4V396h1V394h1V395h1V394h1V395h6V396h2V395h1V396h1V394h1V396h1V394h1V395h2V396h2V394h1V395h1V394h1V395h1V393h1V394h1V395h1V394h2V395h7V396h1V394h1V395h4V396h1V394h1V396h1V395h2V396h1V395h1V394h2V395h2V394h1V396h1V395h2V396h1V395h1V396h1V395h11V396h1V395h5V394h1V395h1V394h1V395h4V396h1V395h2V396h1V394h1V393h1V396h1V395h2V396h1V395h2V396h1V395h8V394h1V395h2V396h1V395h7V394h1V395h2V396h1V395h3V394h1V395h1V396h1V395h3V394h2V395h1V396h1V395h1V396h1V395h1V393h1V395h11V396h1V395h2V394h1V396h1V395h6V394h1V395h4V394h1V395h3V394h1V395h2V394h1V395h2V396h1V395h3V394h1V395h1V394h2V395h2V396h1V395h1V394h1V395h4V396h1V395h3V394h1V395h19V394h1V395h2V396h1V395h8V396h1V394h1V395h2V396h1V395h3V394h1V395h3V396h1V395h11V394h1V395h5V396h1V395h1V394h1V396h1V395h1V394h1V395h2V396h1V395h1V396h1V395h1V396h1V394h1V395h2V393h1V395h2V396h1V395h1V393h1V395h1V396h1V395h3V393h1V396h1V395h1V396h1V395h2V396h2V395h2V396h1V395h7V396h2V394h1V395h1V394h1V395h1V394h1V395h1V394h1V395h3V396h1V395h2V394h1V395h2V396h2V395h2V396h1V395h3V396h1V395h2V396h1V395h4V396h2V395h6V396h1V395h2V396h1V395h1V394h1V396h2V395h2V394h1V395h3V396h1V395h2V394h1V395h3V394h1V396h1V395h4V393h1V395h3V396h2V395h2V396h1V395h1V396h1V395h1V396h1V394h1V395h5V394h1V395h1V396h1V395h1V394h2V396h1V395h5V394h1V395h1V396h2V395h1V396h1V394h1V395h9V394h1V395h1V393h1V396h1V395h6V396h2V394h1V396h1V395h2V396h1V394h1V395h6V396h2V394h1V395h1V394h2V396h1V395h3V394h2V396h1V395h3V396h2V395h1V396h1V395h1V394h1V395h11V396h1V394h1V396h1V395h5V396h1V395h2V396h1V395h2V394h1V395h3V394h1V395h1V396h1V395h1V394h1V395h10V394h1V396h1V395h2V396h1V395h2V394h1V395h5V396h1V395h1V396h2V395h1V394h2V395h7V394h1V396h1V395h1V394h1V395h5V394h1V396h3V395h2V396h2V394h2V395h2V396h1V395h2V394h1V395h3V394h1V393h1V395h1V396h1V395h1V396h1V395h5V396h2V395h2V394h2V396h1V395h1V396h2V395h2V396h2V395h1V394h1V395h3V396h1V395h2V396h1V395h8V394h1V396h1V395h1V396h1V395h5V396h2V395h4V394h1V396h1V395h1V396h1V395h4V394h2V395h2V394h1V395h6V396h1V395h1V394h1V395h2V394h1V395h1V396h1V395h1V394h1V396h1V395h1V396h1V395h3V394h1V395h2V396h2V395h2V396h2V395h2V396h2V395h1V394h1V395h2V396h3V395h1V396h1V395h6V396h1V395h1V393h1V394h1V395h1V394h2V395h2V394h2V399h-1V398h-1V399h-2V398h-2V399h-1V398h-1V399h-2V400h-1V399h-6V400h-1V399h-1V400h-4V399h-1V398h-1V399h-1V400h-2V399h-2V401h-1V400h-1V399h-2V400h-2V399h-1V401h-1V399h-3V400h-2V399h-1V400h-1V398h-1V399h-1V400h-1V399h-1V398h-1V399h-2V398h-1V399h-1V401h-1V399h-9V398h-2V399h-1V400h-2V399h-1V400h-1V399h-1V400h-1V398h-1V399h-4V401h-1V400h-1V399h-4V400h-2V399h-1V400h-1V398h-1V399h-8V400h-1V399h-2V400h-1V399h-4V400h-3V399h-2V400h-2V399h-1V400h-1V398h-2V399h-2V400h-2V399h-5V400h-1V399h-1V400h-1V399h-2V398h-1V399h-4V400h-1V399h-1V400h-1V399h-1V400h-1V399h-2V400h-2V399h-2V400h-1V401h-1V400h-1V399h-6V398h-1V399h-1V400h-1V398h-1V399h-8V398h-1V399h-1V401h-1V400h-1V399h-1V400h-1V399h-5V398h-1V400h-1V399h-1V400h-1V399h-1V400h-3V399h-12V400h-1V399h-8V400h-1V399h-1V400h-2V399h-5V400h-1V399h-1V400h-1V399h-13V400h-1V399h-1V400h-2V399h-3V400h-1V399h-1V398h-1V401h-1V399h-2V400h-1V399h-4V400h-1V401h-1V399h-1V400h-1V399h-1V400h-1V399h-1V401h-1V398h-1V400h-1V399h-2V400h-1V399h-1V400h-2V399h-6V400h-1V399h-1V400h-1V399h-3V401h-1V400h-1V399h-1V400h-1V399h-3V398h-1V400h-1V399h-1V400h-2V399h-7V401h-1V398h-1V399h-2V400h-1V399h-2V400h-1V399h-4V398h-1V400h-1V399h-1V400h-1V399h-1V400h-1V399h-2V400h-2V399h-6V400h-1V399h-1V400h-1V399h-7V400h-1V399h-3V398h-1V400h-1V399h-1V400h-2V398h-1V399h-1V400h-1V399h-2V400h-1V399h-5V400h-3V399h-4V401h-1V399h-2V401h-2V399h-2V400h-1V399h-2V400h-2V399h-5V400h-1V399h-1V400h-2V399h-1V400h-1V398h-1V399h-4V400h-2V399h-7V401h-1V399h-2V400h-2V399h-2V400h-1V399h-1V400h-1V399h-4V400h-1V399h-2V400h-2V399h-6V400h-1V399h-1V400h-1V399h-1V400h-2V399h-1V398h-1V399h-1V400h-1V398h-1V399h-1V400h-1V399h-5V398h-1V399h-1V401h-1V399h-7V400h-1V399h-1V400h-1V399h-3V398h-1V400h-1V399h-2V400h-2V399h-2V401h-1V399h-3V400h-1V399h-1V400h-1V399h-2V402h-1V399h-26V400h-2V399h-3V398h-1V399h-1V400h-1V399h-2V398h-1V399h-2V398h-1V399h-3V400h-1V399h-2V398h-1V399h-4V400h-2V398h-1V399h-2V401h-1V399h-1V398h-1V399h-1V400h-1V399h-4V400h-1V398h-1V399h-2V400h-1V399h-11V398h-1V399h-1V400h-1V399h-1V400h-1V399h-1V398h-1V400h-2V399h-1V401h-1V400h-1V399h-1V398h-1V399h-3V401h-1V399h-1V400h-1V398h-1V399h-7V401h-1V399h-3V400h-2V399h-6V400h-1V399h-2V400h-1V399h-2V401h-1V399h-2V400h-1V399h-2V400h-1V399h-4V398h-1V400h-1V398h-1V400h-1V399h-1V400h-1V399h-2V400h-2V399h-2V400h-1V399h-7V400h-1V399h-1V400h-1V399h-2V400h-1V398h-1V401h-1V399h-1V398h-2V399h-1V400h-1V399h-2V400h-1V399h-1V400h-1V399h-1V400h-1V399h-2V398h-1V400h-1V399h-8V398h-1V401h-1V398h-1V399h-3V401h-1V399h-1V400h-2V399h-2V398h-1V400h-1V399h-1V400h-1V399h-1V400h-2V399h-6V398h-1V399h-2V400h-1V399h-4V400h-1V399h-5V398h-1V399h-1V400h-1V399h-1V400h-1V399h-3V400h-1V398h-1V399h-5V400h-2V401h-1V399h-1V398h-3V399h-2V401h-1V400h-2V399h-4V400h-1V399h-2V400h-2V399h-4V398h-1V399h-5V400h-1V399h-1V400h-3V399h-3V398h-1V399h-1V400h-1V399h-11V400h-2V399h-1V398h-1V399h-7V400h-1V399h-2V400h-4V399h-1V398h-1V400h-1V399h-1V398h-1V399h-5V401h-1V399h-1V400h-1V399h-4V400h-1V399h-3V400h-1V399h-4V400h-2V399h-3V400h-1V399h-2V400h-2V399h-2V400h-1V399h-1V400h-2V399h-2V401h-1V399h-3V400h-1V399h-4V400h-1V399h-1V400h-2V399h-1V400h-1V399h-5V400h-1V398h-1V399h-2V398h-2V399h-2V400h-1V399h-4V398h-1V399h-3V398h-1V400h-4V399h-15V400h-1V399h-4V400h-1V399h-8V400h-1V401h-1V400h-1V399h-1V400h-1V399h-3V400h-3V399h-2V401h-1V399h-1V400h-1V399h-6V400h-3V399h-2V400h-1V399h-7V400h-1V399h-7V400h-3V399h-1V398h-1V399h-4V400h-1V399h-4V400h-2V399h-6V400h-1V399h-2V400h-1V399h-2V398h-1V401h-1V400h-2V399h-5V400h-1V399h-7V400h-1V399h-5V400h-1V399h-4V400h-2V399h-1V401h-1V399h-1V398h-1V399h-1V400h-1V399h-1V398h-1V399h-2V400h-2V399h-2V400h-1V399h-4V400h-2V399h-2V400h-1V401h-1V399h-6V400h-1V399h-1V398h-1V400h-1V399h-4V398h-1V399h-2V400h-1V399h-8V400h-2V398h-1V399h-3V401h-1V400h-1V399h-1V400h-1V398h-1V399h-2V398h-1V400h-3V399h-5V400h-1V399h-2V400h-2V399h-3V400h-1V399h-5V400h-1V401h-1V399h-1V398h-1V399h-2V398h-1V399h-3V400h-2V398h-1V399h-1V398h-1V400h-1V399h-2V400h-1V399h-5V401h-1V399h-1V400h-2V399h-3ZM277 426h8V425h1V426h3V427h1V425h1V426h2V425h1V427h1V425h1V426h1V427h2V425h1V426h7V427h1V426h2V425h1V426h5V427h1V426h1V424h1V426h1V425h1V426h2V425h1V426h2V425h1V426h4V427h2V426h1V427h2V426h7V427h1V426h1V425h1V426h2V427h2V426h4V425h1V427h1V426h6V425h1V427h1V426h4V425h1V426h1V427h2V426h3V427h2V426h1V427h1V425h2V426h3V427h1V426h1V424h1V426h1V427h1V425h2V426h1V424h1V427h1V426h2V427h1V426h12V424h1V425h1V426h2V427h2V426h1V425h1V426h2V424h1V427h1V425h1V426h2V425h1V426h4V427h3V426h5V427h1V426h3V425h1V426h1V427h1V426h2V427h2V425h1V427h1V426h1V425h1V426h1V425h1V426h1V427h1V426h1V427h1V426h5V427h1V426h2V427h1V426h1V425h1V427h1V425h1V426h3V427h1V426h2V427h1V426h2V425h1V426h6V427h1V426h5V427h1V424h1V426h3V425h1V427h4V426h1V424h1V426h5V427h1V426h8V425h1V426h5V427h1V426h2V427h1V426h5V425h2V426h2V427h1V425h1V427h1V426h2V427h1V426h6V425h1V426h4V427h1V426h3V427h1V426h1V427h2V426h1V425h1V426h3V427h1V426h7V425h1V426h2V425h1V426h1V424h1V426h1V427h1V426h1V424h1V427h1V426h1V425h1V426h1V425h1V426h7V425h1V426h7V427h1V426h1V424h1V426h2V425h1V426h3V425h1V426h2V427h1V426h1V425h1V426h4V427h1V426h8V427h1V426h1V427h1V426h2V425h1V426h1V427h1V426h1V425h2V426h3V427h1V426h5V427h1V426h3V427h1V425h1V426h2V427h3V426h2V425h2V426h5V427h1V426h2V425h1V426h3V427h1V426h3V427h1V426h2V424h1V426h1V427h1V426h3V425h1V427h1V426h1V427h1V425h2V426h1V427h1V426h4V425h2V427h1V423h1V427h1V426h4V427h2V426h10V425h1V426h3V427h1V426h6V427h1V426h1V425h3V424h1V425h1V424h1V425h1V426h2V427h1V424h1V425h1V426h1V425h1V426h4V427h1V426h3V425h1V427h2V425h1V426h3V425h1V426h2V427h1V426h1V427h1V426h5V427h1V426h1V425h2V426h1V427h1V426h1V425h2V426h4V427h2V426h2V425h1V426h5V425h4V426h1V424h2V425h3V426h3V427h1V426h1V425h1V427h1V426h1V427h1V426h8V427h1V425h1V427h2V426h10V427h1V426h1V425h1V427h1V426h1V423h1V426h3V424h1V426h6V425h1V426h11V424h1V427h1V426h3V427h2V426h2V425h1V426h1V425h2V424h1V425h1V427h1V426h1V427h1V426h1V427h1V426h5V425h1V426h2V427h1V425h1V426h2V427h1V426h3V425h1V426h1V425h3V427h2V426h1V427h1V426h3V424h1V426h3V427h1V426h1V425h1V426h1V425h1V426h1V425h1V427h2V425h1V426h2V425h1V426h1V424h1V426h1V427h1V426h2V425h1V427h1V426h6V427h2V426h2V427h1V426h1V427h1V425h2V426h13V427h1V426h1V425h1V426h1V425h1V426h5V425h1V426h4V427h3V424h1V426h4V427h1V426h4V425h3V426h5V427h1V426h4V427h1V426h1V427h1V426h1V427h1V426h2V427h3V426h2V427h1V425h1V426h5V427h1V426h6V425h2V426h2V427h1V426h6V425h1V426h1V427h1V426h2V427h1V426h3V427h1V425h1V426h2V427h1V426h4V427h1V424h1V426h3V427h1V425h1V426h3V427h1V426h4V427h1V426h2V427h1V426h5V424h1V426h4V424h1V426h8V425h1V426h1V425h2V427h2V426h1V427h1V425h1V426h10V427h1V426h2V427h1V424h1V426h1V425h1V426h1V427h1V426h2V425h1V426h3V427h1V426h3V425h1V426h9V427h1V426h2V427h1V426h2V427h1V426h4V425h1V426h4V427h1V426h1V424h1V426h2V427h1V426h5V427h1V426h3V427h1V425h1V426h3V427h1V426h1V427h2V426h3V427h1V426h3V427h2V426h1V424h1V425h1V426h3V425h1V426h1V423h1V426h1V425h1V427h1V425h1V426h9V427h3V426h3V427h1V426h2V425h1V426h2V425h1V426h3V425h1V424h1V426h7V427h1V426h1V427h1V425h1V426h4V427h1V426h1V424h1V426h2V427h1V425h1V426h1V425h3V426h2V425h1V427h1V426h8V425h1V426h7V427h2V426h2V425h1V426h1V425h1V424h1V426h1V425h1V424h2V425h1V427h2V426h4V427h1V426h2V425h1V426h8V427h1V426h1V427h1V425h1V426h5V424h1V427h2V426h3V427h1V426h13V427h2V426h2V425h2V426h7V425h1V426h3V427h3V426h1V427h1V426h4V427h1V425h1V426h1V427h1V426h4V427h1V426h5V425h1V426h11V430h-2V431h-1V432h-1V430h-6V431h-1V430h-6V431h-1V430h-2V432h-1V430h-1V431h-1V430h-1V429h-1V431h-1V430h-4V431h-1V430h-1V431h-4V430h-3V431h-1V430h-3V431h-1V430h-2V429h-2V430h-1V431h-1V432h-1V431h-1V430h-3V431h-1V430h-9V431h-1V430h-1V431h-1V430h-1V431h-2V430h-1V431h-1V430h-1V431h-1V430h-3V431h-1V430h-1V431h-1V430h-3V431h-1V430h-4V429h-1V430h-2V431h-1V430h-4V433h-1V432h-1V431h-1V430h-1V431h-1V432h-2V431h-2V430h-1V429h-1V430h-2V431h-2V430h-3V431h-1V430h-2V431h-1V429h-1V430h-8V431h-1V429h-1V430h-2V429h-3V430h-2V431h-1V430h-2V429h-1V430h-1V431h-1V430h-4V429h-1V431h-3V430h-5V431h-1V430h-2V429h-1V430h-6V431h-1V430h-2V431h-1V430h-1V431h-1V430h-1V431h-3V430h-3V431h-1V430h-6V431h-1V430h-1V431h-1V429h-1V430h-5V429h-1V430h-2V431h-2V430h-3V431h-1V430h-3V432h-1V431h-1V430h-1V431h-1V430h-1V431h-1V430h-1V429h-1V431h-1V430h-3V431h-1V430h-3V431h-1V430h-1V431h-1V430h-4V431h-1V430h-4V429h-1V430h-4V431h-1V430h-2V431h-1V430h-2V431h-1V430h-1V431h-2V430h-3V431h-1V430h-2V429h-1V430h-3V431h-1V430h-1V431h-1V430h-1V431h-1V430h-2V432h-1V430h-4V431h-1V430h-1V431h-2V430h-2V431h-1V430h-4V431h-1V430h-3V431h-1V430h-1V431h-2V429h-1V430h-2V429h-1V430h-8V431h-1V430h-4V429h-1V430h-5V431h-1V430h-2V431h-1V430h-4V432h-1V430h-4V431h-1V430h-2V431h-1V430h-1V431h-1V430h-2V431h-1V430h-1V431h-1V430h-2V429h-1V431h-1V430h-3V432h-1V430h-1V432h-2V430h-8V431h-1V430h-2V429h-2V430h-6V431h-2V430h-5V431h-1V430h-2V432h-1V431h-2V432h-1V430h-1V431h-1V430h-1V431h-1V430h-1V431h-1V430h-4V431h-1V430h-6V429h-2V430h-4V431h-1V430h-5V431h-3V430h-10V429h-1V430h-1V429h-1V430h-1V432h-1V430h-2V431h-1V430h-5V431h-1V430h-3V431h-1V429h-1V430h-1V431h-1V430h-1V431h-1V430h-1V431h-3V430h-4V431h-1V430h-1V432h-1V429h-1V430h-2V431h-1V430h-1V431h-1V430h-1V429h-1V430h-3V431h-2V430h-2V429h-1V430h-3V431h-1V430h-5V431h-3V430h-1V431h-2V430h-2V429h-1V430h-1V429h-1V430h-3V431h-1V430h-2V429h-1V431h-1V430h-2V429h-1V430h-3V431h-1V430h-1V431h-1V430h-1V432h-1V430h-1V432h-1V431h-1V430h-1V431h-2V433h-1V431h-1V432h-1V431h-1V433h-1V431h-1V430h-3V431h-1V430h-5V431h-1V430h-1V431h-2V430h-14V429h-1V430h-1V431h-1V430h-2V431h-1V430h-1V431h-1V430h-4V431h-1V430h-3V431h-2V430h-1V431h-1V430h-3V432h-1V430h-4V431h-3V429h-1V430h-1V431h-1V430h-2V431h-4V432h-1V431h-1V432h-1V431h-1V432h-1V431h-1V430h-8V432h-1V431h-1V432h-1V430h-4V429h-1V430h-2V431h-1V430h-4V431h-1V430h-3V432h-1V430h-1V431h-1V430h-1V431h-1V430h-1V431h-1V430h-3V431h-1V429h-1V431h-2V429h-1V430h-3V431h-1V430h-1V431h-1V430h-4V429h-2V431h-1V432h-2V431h-1V430h-1V433h-1V430h-1V431h-3V430h-1V431h-1V430h-4V431h-1V430h-1V432h-1V430h-3V429h-1V431h-1V430h-3V431h-2V430h-4V431h-1V432h-1V430h-4V431h-1V429h-1V433h-1V430h-1V431h-1V430h-4V431h-1V430h-1V429h-2V431h-3V429h-1V431h-1V430h-2V432h-1V430h-1V431h-1V430h-2V431h-1V430h-3V431h-1V430h-1V431h-1V430h-4V431h-1V430h-1V431h-2V430h-6V431h-3V430h-2V429h-1V431h-1V430h-3V431h-1V430h-2V431h-1V430h-2V431h-1V432h-2V430h-1V429h-1V430h-2V431h-1V430h-4V431h-1V430h-1V431h-1V430h-8V431h-1V430h-2V432h-1V431h-1V430h-2V431h-1V430h-2V429h-1V430h-8V431h-1V430h-5V431h-1V430h-4V431h-1V430h-2V431h-1V430h-1V429h-1V432h-1V429h-1V430h-1V431h-1V429h-1V430h-1V431h-1V430h-1V429h-1V430h-2V432h-1V431h-1V430h-3V431h-1V430h-4V431h-1V430h-5V431h-1V432h-1V430h-1V431h-1V432h-1V430h-2V431h-1V430h-4V429h-1V430h-6V431h-1V430h-2V431h-1V430h-1V431h-1V430h-2V429h-2V430h-5V431h-1V430h-2V431h-1V430h-5V429h-1V430h-2V432h-1V430h-5V431h-1V430h-5V431h-7V430h-4V431h-1V430h-5V431h-1V430h-3V431h-1V430h-5V432h-1V430h-2V433h-1V431h-1V430h-3V431h-1V429h-1V430h-1V431h-1V430h-2V431h-1V430h-5V431h-1V430h-1V431h-1V430h-1V431h-2V430h-2V431h-1V430h-1V431h-2V430h-2V431h-1V430h-1V429h-1V430h-3V431h-1V430h-5V431h-3V430h-4V431h-2V430h-1V429h-1V431h-1V430h-5V431h-2V430h-6V432h-1V430h-4V431h-1V430h-4V431h-1V430h-2V431h-1V430h-3V429h-1V431h-2V430h-2V431h-1V430h-3V429h-1V430h-1V431h-1V430h-1V431h-2V430h-3V431h-2V430h-6V431h-1V430h-5V431h-1V430h-1V431h-1V430h-5V431h-2V430h-1V432h-1V430h-2V431h-1V430h-4V431h-2V430h-1V431h-2V430h-1V432h-2V431h-1V430h-1V432h-1V430h-1V429h-1V430h-2V429h-1V430h-2V429h-1V430h-3V431h-1V430h-3V431h-1V430h-2V431h-1V430h-1V431h-1V430h-7V429h-1V431h-2V430h-1V429h-1V431h-1V430h-3V429h-1V431h-1V430h-1V432h-1V431h-1V430h-1V431h-1V430h-2V431h-1V430h-4ZM277 456h3V457h1V454h1V456h2V455h1V456h2V455h1V456h1V457h1V455h1V456h5V454h1V457h2V456h2V457h1V456h1V457h2V455h1V457h1V456h5V455h1V456h2V455h1V457h1V455h1V456h1V454h1V456h4V457h3V456h5V457h1V455h1V453h1V456h3V457h1V456h4V457h1V456h2V457h1V454h1V456h5V455h1V457h1V455h1V457h1V454h1V456h2V455h1V456h1V455h1V454h1V456h2V457h1V456h2V454h1V456h3V457h1V456h1V457h2V456h9V457h1V456h1V457h1V456h6V457h1V456h2V457h2V455h1V456h1V457h1V456h5V457h1V456h1V455h1V456h3V457h1V456h2V457h2V456h1V457h1V455h1V456h5V455h1V457h1V455h1V456h2V457h1V456h1V455h2V456h3V455h1V457h1V456h2V457h1V456h4V457h1V455h3V457h2V456h3V457h1V456h8V457h1V456h3V457h2V456h4V455h1V456h1V455h1V456h2V457h2V456h1V457h1V456h1V457h1V456h1V454h1V456h1V455h1V457h1V456h3V457h1V456h4V457h3V456h1V457h1V455h1V456h4V457h1V456h3V457h3V456h2V454h1V456h6V454h1V457h2V456h1V457h1V456h1V455h1V457h1V456h1V457h1V456h5V455h1V456h3V457h1V456h1V455h1V456h1V455h2V456h1V457h1V455h1V457h1V456h1V455h1V456h1V457h1V456h5V455h1V457h1V455h1V456h1V457h2V454h1V456h1V457h1V456h2V455h1V456h2V457h1V456h1V455h1V456h5V457h2V454h1V456h7V457h1V456h3V457h1V456h2V457h1V456h2V457h1V455h1V456h2V455h1V456h4V455h1V456h2V457h1V455h1V456h1V457h3V455h1V457h1V455h1V457h1V456h1V457h1V455h1V456h3V457h2V456h1V457h1V456h1V457h1V456h1V457h1V455h1V456h2V455h1V457h1V456h1V455h2V454h1V456h1V457h1V455h1V456h3V457h1V456h1V457h1V456h3V455h1V457h1V456h2V455h1V456h3V457h1V456h2V457h1V456h4V455h1V457h2V456h1V457h2V456h1V457h1V456h4V455h1V456h1V457h1V456h3V457h1V456h4V457h1V456h3V455h1V456h3V457h1V456h4V455h1V457h1V456h4V457h1V456h2V457h1V456h1V457h2V456h3V457h2V455h1V456h4V457h1V456h3V453h1V457h1V456h6V457h1V456h1V455h1V456h7V457h2V456h4V455h1V457h1V456h6V457h1V456h6V455h1V456h1V455h1V456h3V455h1V456h2V455h1V457h2V456h5V455h1V456h1V457h1V455h1V457h1V456h1V455h1V457h1V456h3V457h1V455h1V456h4V455h1V456h1V455h1V456h4V457h1V455h1V454h1V455h1V456h4V457h1V456h3V457h1V456h1V457h1V456h6V457h1V456h2V457h1V456h1V457h1V456h2V455h1V457h1V456h1V457h2V456h11V455h1V456h3V457h1V456h1V457h1V456h1V455h1V457h1V456h3V457h1V456h12V455h1V456h5V455h1V456h5V455h1V456h1V454h1V456h1V455h1V456h2V457h1V455h1V456h5V457h1V456h9V457h2V454h1V456h2V455h1V456h7V454h1V456h2V457h1V455h1V456h4V455h1V456h3V457h1V456h3V457h3V455h2V456h4V457h2V456h1V455h1V457h1V456h1V455h1V456h1V457h1V456h1V457h1V456h1V455h2V456h1V457h2V456h1V457h1V456h3V455h1V456h1V457h1V456h1V454h1V456h1V457h2V455h1V456h6V457h1V456h1V455h1V456h1V457h1V456h1V454h1V456h1V455h1V456h1V455h1V456h2V457h1V456h9V455h1V456h8V455h1V456h3V457h1V456h1V455h1V456h4V455h2V456h1V455h2V456h2V455h1V456h3V455h1V456h2V455h1V456h2V455h1V457h1V456h1V455h1V456h1V457h1V456h3V457h2V456h1V457h1V456h1V457h1V456h1V457h1V456h3V455h1V456h8V455h1V456h4V457h1V456h2V457h1V455h1V456h3V457h1V456h2V457h1V456h1V457h1V455h1V456h7V454h1V456h3V457h3V456h4V457h1V455h1V456h2V455h1V456h2V454h1V457h1V455h1V456h2V455h1V457h1V455h1V456h1V457h1V456h1V457h2V456h5V457h1V455h1V457h2V456h7V457h1V456h1V457h1V456h5V457h1V456h10V455h1V457h1V455h1V457h2V455h1V457h3V456h1V457h1V455h2V454h1V456h3V454h1V456h3V455h1V456h2V455h1V456h1V455h2V456h5V457h2V456h1V455h1V456h2V457h1V456h3V455h1V456h4V457h1V455h1V456h2V457h2V456h1V457h1V456h2V455h1V456h3V455h2V456h5V455h1V457h1V455h1V456h2V457h1V456h1V457h3V456h2V457h3V456h5V457h1V456h2V455h1V457h2V456h2V457h2V455h1V456h3V457h1V456h1V457h3V456h8V455h1V456h1V455h2V456h3V457h1V456h1V455h1V456h2V455h1V456h4V457h1V456h1V457h3V456h6V457h1V456h1V455h1V456h1V455h1V456h2V457h1V456h1V457h1V456h2V455h1V456h2V455h1V456h3V455h1V456h3V457h1V456h12V455h1V456h9V457h1V456h2V454h1V456h1V457h1V456h5V455h1V457h1V456h6V457h1V456h4V455h1V460h-5V461h-1V460h-6V461h-1V460h-6V461h-1V460h-1V459h-1V460h-2V461h-1V460h-1V461h-1V460h-6V461h-1V460h-1V461h-1V460h-1V461h-1V460h-5V461h-1V460h-3V462h-1V460h-3V459h-1V460h-3V459h-1V460h-2V459h-1V460h-2V461h-1V460h-1V461h-1V460h-1V461h-1V460h-4V461h-1V460h-6V461h-3V460h-1V461h-1V460h-9V462h-1V460h-3V459h-1V460h-1V461h-1V459h-1V460h-3V461h-1V462h-1V460h-3V461h-3V460h-1V461h-1V460h-3V459h-1V461h-3V460h-1V461h-2V459h-1V460h-2V461h-1V460h-2V461h-1V460h-2V461h-3V460h-2V461h-3V462h-1V461h-1V460h-3V463h-1V460h-4V462h-1V460h-1V461h-1V459h-1V460h-6V461h-1V460h-1V461h-2V460h-2V459h-1V461h-1V460h-4V459h-1V460h-3V461h-1V460h-2V459h-1V460h-1V461h-2V460h-3V461h-1V460h-1V459h-1V462h-1V461h-1V459h-1V460h-2V459h-1V461h-1V460h-1V461h-1V460h-2V461h-1V460h-4V461h-1V460h-1V461h-3V459h-1V461h-1V462h-1V459h-1V461h-1V460h-2V461h-1V460h-7V461h-1V462h-1V460h-5V461h-1V460h-1V461h-2V460h-3V461h-1V460h-2V461h-2V460h-1V461h-2V460h-4V461h-1V462h-1V461h-2V460h-1V459h-1V461h-1V460h-3V462h-1V461h-1V460h-3V459h-1V460h-3V461h-1V460h-4V461h-3V460h-1V461h-1V460h-4V461h-1V460h-5V461h-1V460h-1V461h-1V460h-1V461h-2V460h-1V461h-2V460h-1V461h-1V460h-2V461h-1V460h-4V459h-1V460h-8V459h-1V460h-3V461h-1V460h-1V461h-1V460h-1V461h-1V460h-1V461h-2V460h-3V461h-1V460h-1V459h-1V460h-1V461h-1V459h-1V460h-5V459h-1V460h-6V459h-1V460h-5V461h-1V460h-4V461h-2V460h-2V461h-2V460h-3V461h-1V460h-13V461h-1V460h-4V461h-1V460h-3V462h-1V460h-1V459h-1V460h-1V461h-2V460h-6V462h-1V461h-1V460h-1V459h-1V460h-1V461h-1V460h-1V459h-1V460h-3V461h-1V460h-1V463h-1V461h-1V460h-4V461h-1V460h-1V461h-1V460h-3V461h-2V460h-1V461h-2V460h-5V461h-4V460h-3V461h-1V460h-3V459h-1V460h-1V462h-1V460h-3V461h-1V460h-14V461h-2V460h-3V461h-1V460h-5V461h-1V460h-3V462h-1V460h-1V461h-2V460h-2V459h-1V460h-3V459h-1V460h-5V459h-1V460h-5V459h-1V460h-12V461h-1V460h-3V461h-1V459h-1V460h-1V461h-1V460h-1V461h-2V460h-1V461h-1V459h-1V460h-1V461h-1V460h-2V462h-1V460h-6V461h-2V460h-1V461h-1V459h-1V460h-2V461h-1V460h-1V461h-1V460h-1V461h-2V460h-6V461h-1V460h-1V461h-1V460h-3V461h-1V460h-5V459h-1V460h-1V461h-2V460h-11V461h-1V460h-3V461h-1V460h-2V462h-1V459h-1V461h-1V460h-7V461h-2V460h-4V461h-1V460h-2V459h-1V460h-8V461h-1V460h-6V461h-1V460h-5V461h-2V460h-4V461h-1V460h-1V461h-1V460h-2V461h-1V460h-5V462h-1V461h-1V459h-1V460h-1V461h-1V460h-1V461h-1V460h-5V461h-2V460h-3V461h-2V460h-1V461h-1V460h-2V461h-1V460h-1V461h-1V460h-2V461h-1V460h-5V461h-1V460h-7V461h-1V460h-1V462h-1V460h-2V461h-1V460h-3V461h-1V460h-1V459h-1V460h-3V461h-2V460h-1V461h-2V460h-1V461h-2V459h-1V460h-3V461h-2V460h-2V461h-1V460h-3V459h-1V460h-2V461h-1V459h-1V461h-1V460h-2V461h-1V460h-1V461h-1V460h-1V461h-1V460h-1V461h-2V460h-5V461h-1V459h-1V460h-2V459h-1V462h-1V460h-1V461h-1V460h-1V461h-1V460h-1V461h-2V460h-1V461h-1V460h-1V459h-1V461h-1V460h-1V461h-1V460h-1V462h-1V460h-1V463h-1V461h-2V460h-1V461h-1V462h-1V460h-1V461h-2V460h-4V459h-1V460h-1V461h-1V460h-1V462h-1V460h-2V461h-1V460h-2V461h-1V460h-3V461h-1V460h-8V461h-2V460h-6V461h-2V460h-2V459h-1V460h-2V461h-1V460h-1V461h-3V460h-2V461h-1V462h-1V460h-2V461h-2V460h-1V461h-1V460h-1V459h-1V460h-1V461h-1V460h-1V461h-1V460h-2V459h-1V460h-3V461h-1V460h-9V461h-1V460h-1V461h-1V459h-1V460h-1V461h-1V460h-1V462h-1V461h-1V460h-3V461h-1V460h-3V459h-1V461h-1V460h-1V461h-2V463h-1V460h-1V461h-1V460h-1V461h-1V460h-5V461h-1V460h-1V461h-3V460h-4V461h-1V460h-3V463h-1V460h-4V461h-1V460h-1V461h-1V460h-1V461h-2V460h-9V463h-1V461h-1V460h-2V461h-2V460h-8V461h-1V460h-3V461h-1V462h-1V460h-1V459h-2V461h-2V460h-3V461h-1V460h-2V461h-2V460h-1V461h-2V460h-3V461h-1V460h-2V459h-1V461h-1V459h-1V460h-6V461h-1V460h-1V461h-2V460h-2V461h-1V460h-5V461h-1V460h-5V461h-1V460h-1V459h-1V461h-2V460h-2V461h-1V460h-6V461h-1V460h-1V462h-1V460h-5V461h-1V460h-3V461h-2V460h-1V461h-1V460h-6V462h-1V460h-2V459h-1V460h-2V459h-1V460h-3V461h-1V459h-1V461h-1V459h-1V460h-2V461h-1V460h-3V461h-1V460h-2V461h-1V460h-3V462h-1V461h-1V460h-3V459h-1V460h-1V461h-1V460h-1V461h-1V460h-3V461h-3V460h-4V459h-1V460h-2V461h-1V459h-1V460h-8V461h-1V460h-1V461h-4V460h-1V461h-3V460h-6V459h-1V461h-1V460h-8V461h-1V460h-2V461h-1ZM277 486h5V487h1V486h4V485h1V486h1V487h4V485h1V486h2V484h1V486h2V487h2V486h1V487h1V485h1V487h3V486h1V485h1V486h1V485h1V487h3V485h1V486h1V485h1V487h1V486h1V487h1V486h2V487h1V486h1V487h1V485h1V487h1V486h4V487h1V486h4V487h1V486h3V487h1V484h1V486h1V485h1V486h5V487h1V486h1V487h1V486h3V485h2V486h5V487h2V486h2V485h1V486h5V487h1V485h2V486h1V484h1V487h1V486h9V485h1V486h3V485h1V486h1V485h2V487h1V486h3V487h2V485h1V486h1V485h1V487h1V486h3V487h1V486h1V487h1V486h4V487h1V486h2V487h1V486h3V485h2V486h1V487h1V486h3V485h1V487h1V486h4V487h2V486h2V487h1V486h2V487h1V486h1V487h1V485h2V486h2V485h1V487h2V486h1V487h1V485h1V486h2V487h1V486h3V485h1V486h2V487h1V486h4V487h1V486h1V487h1V486h16V485h1V486h3V487h1V486h4V487h1V486h1V485h2V486h1V487h1V486h4V487h1V486h1V485h1V487h1V486h9V485h1V486h1V487h1V486h1V487h1V486h7V487h1V486h6V484h1V486h6V487h1V486h1V487h1V486h1V487h1V486h3V485h1V486h1V487h1V486h4V487h1V486h4V485h1V487h1V485h1V487h2V486h3V484h1V487h1V485h1V487h1V486h14V485h1V487h1V486h1V485h1V486h1V487h1V486h1V485h2V486h1V485h1V486h1V485h1V486h2V485h2V486h2V487h1V485h1V486h3V487h1V486h1V487h1V486h1V487h1V486h1V487h1V486h2V487h1V486h1V487h2V485h1V486h3V487h1V486h1V485h1V486h4V487h1V486h2V487h1V486h2V484h1V485h1V486h3V487h1V486h3V485h1V486h17V485h1V487h1V486h1V487h1V485h1V486h1V487h1V486h1V487h2V486h3V485h1V486h1V487h1V486h1V487h1V486h1V487h3V486h2V487h1V486h1V485h1V486h2V485h1V486h3V487h2V486h2V487h1V486h7V487h1V486h1V487h1V486h3V484h1V486h2V487h1V486h1V485h1V486h2V487h1V486h3V487h1V486h3V487h1V486h1V485h1V487h1V486h3V485h1V486h1V485h1V486h3V487h1V486h1V485h1V486h1V485h2V486h3V487h1V484h1V486h1V487h2V486h2V485h1V486h2V485h1V486h1V485h1V487h1V486h3V487h1V486h5V485h1V486h1V487h1V486h5V487h1V486h3V485h1V486h1V485h1V487h1V486h1V487h1V486h2V487h1V486h2V485h3V486h6V487h1V486h9V484h1V485h2V486h5V485h1V487h1V486h4V485h1V486h2V485h1V486h2V487h1V486h5V487h1V486h1V487h1V485h1V486h1V485h1V486h1V485h1V486h3V485h1V487h1V486h5V487h1V485h1V484h1V486h3V485h1V486h2V483h1V486h2V484h1V487h1V486h2V487h1V486h2V485h1V486h6V485h1V486h3V487h1V486h1V485h2V486h4V485h1V486h2V485h1V486h6V487h1V486h3V485h1V486h3V487h1V486h1V485h1V486h5V487h1V486h7V485h1V486h5V487h3V485h1V486h4V487h1V486h2V487h2V486h5V487h2V486h2V487h1V486h7V485h1V487h1V486h11V487h1V485h1V487h2V485h1V486h1V487h1V486h3V485h1V486h1V485h1V486h4V485h1V487h3V486h8V487h1V484h1V487h1V486h1V485h1V486h1V484h1V486h7V487h1V486h2V487h1V486h4V487h2V485h1V486h3V487h1V486h1V487h2V486h3V487h1V486h3V484h1V486h3V484h1V486h2V487h1V485h1V486h1V487h1V485h1V487h1V486h1V485h1V486h4V485h2V486h6V487h1V486h2V487h1V486h3V485h1V486h1V487h1V484h1V486h1V485h1V486h10V487h1V486h3V487h1V486h12V487h1V486h2V485h1V486h1V487h2V486h5V487h1V486h1V485h1V486h3V485h1V486h5V485h1V486h1V485h1V486h3V487h1V486h2V484h1V486h4V485h1V486h4V487h1V486h1V485h2V486h9V487h2V486h1V487h2V486h1V485h1V486h1V485h1V486h5V485h1V486h2V487h1V486h3V487h1V486h3V487h1V486h3V487h1V485h2V486h2V487h1V486h2V485h1V486h1V487h1V486h2V487h1V486h2V487h1V485h1V486h1V485h1V486h1V487h2V486h1V487h1V486h5V485h1V486h3V485h1V487h1V486h2V485h1V486h2V487h1V486h4V485h1V486h3V487h1V486h2V487h1V486h1V484h1V486h3V485h1V486h4V487h2V486h3V487h1V485h1V486h1V487h2V486h8V487h3V485h1V486h1V487h1V485h1V486h5V487h3V486h4V487h1V485h2V487h1V486h1V485h1V483h1V486h2V487h1V486h2V485h1V486h1V485h1V486h1V487h1V485h1V486h1V487h1V486h1V484h1V485h1V486h1V487h1V486h6V485h1V486h2V487h2V486h5V487h1V486h1V487h1V486h4V487h2V486h4V485h1V486h1V487h1V486h1V487h1V486h11V485h1V487h1V486h3V485h1V486h5V487h1V486h2V487h1V486h1V487h1V484h1V486h1V490h-2V491h-1V490h-1V491h-1V490h-1V491h-1V493h-1V490h-5V491h-1V490h-1V491h-1V490h-1V491h-1V490h-7V491h-1V490h-4V492h-1V490h-1V491h-1V490h-2V491h-1V490h-2V491h-3V490h-4V491h-1V490h-1V491h-1V490h-5V491h-2V490h-9V491h-1V490h-3V491h-2V490h-1V489h-1V491h-1V490h-1V489h-1V490h-4V491h-1V490h-2V489h-1V490h-2V491h-1V489h-2V491h-1V490h-4V491h-2V492h-1V490h-6V492h-1V490h-1V489h-1V491h-4V490h-7V492h-1V491h-1V490h-2V491h-1V490h-3V491h-2V490h-4V489h-1V490h-2V491h-1V490h-2V491h-1V490h-2V491h-1V490h-5V491h-1V490h-2V491h-1V490h-1V491h-2V490h-2V491h-1V492h-1V490h-1V493h-1V490h-7V491h-1V490h-1V491h-2V490h-1V489h-1V490h-1V489h-1V491h-1V490h-2V491h-1V490h-2V491h-1V490h-3V492h-1V491h-1V490h-3V489h-1V491h-1V490h-1V492h-1V490h-1V492h-1V491h-1V490h-2V491h-1V490h-2V491h-1V492h-1V490h-2V491h-1V490h-2V491h-1V490h-2V489h-1V490h-3V491h-2V490h-1V491h-2V490h-4V491h-1V490h-4V491h-1V490h-2V491h-1V490h-1V491h-1V492h-1V490h-7V491h-1V490h-1V491h-1V490h-15V489h-1V490h-1V491h-1V490h-5V491h-2V490h-1V489h-1V490h-2V491h-1V490h-2V491h-1V490h-4V491h-1V490h-4V491h-1V490h-1V491h-1V490h-1V491h-1V490h-3V492h-1V490h-5V491h-1V490h-3V491h-1V490h-1V489h-1V490h-3V491h-1V490h-2V491h-1V490h-2V491h-1V490h-9V491h-1V490h-1V491h-1V490h-1V491h-1V490h-1V489h-1V491h-1V490h-4V491h-1V490h-3V492h-1V490h-1V491h-1V490h-2V492h-1V491h-1V492h-1V490h-1V491h-1V490h-1V492h-1V490h-1V491h-3V490h-3V491h-2V490h-2V491h-2V490h-4V491h-1V490h-4V491h-3V492h-1V491h-1V490h-5V491h-1V490h-1V491h-3V489h-1V490h-4V489h-1V490h-1V489h-1V490h-3V491h-1V490h-2V491h-2V489h-1V491h-2V490h-2V491h-2V490h-6V491h-1V489h-1V490h-7V491h-1V490h-2V492h-1V491h-1V490h-5V491h-4V492h-1V490h-4V489h-1V491h-3V490h-8V491h-1V490h-4V492h-1V491h-1V490h-4V489h-1V490h-1V491h-1V490h-3V489h-1V490h-3V492h-1V490h-1V491h-1V490h-2V491h-1V490h-4V491h-1V490h-5V489h-1V490h-1V491h-1V490h-3V489h-1V491h-1V490h-7V492h-1V491h-1V490h-1V491h-2V490h-3V489h-1V490h-2V491h-1V490h-4V489h-1V491h-1V490h-3V491h-1V490h-1V491h-1V492h-1V491h-1V490h-7V492h-1V490h-1V491h-2V490h-4V491h-1V490h-5V489h-1V490h-4V491h-1V489h-1V490h-4V491h-2V489h-2V491h-1V490h-5V491h-1V490h-2V491h-1V490h-6V489h-1V490h-4V491h-1V490h-2V491h-1V490h-1V491h-1V489h-1V490h-1V489h-1V490h-3V491h-1V490h-5V491h-1V492h-1V489h-1V490h-5V491h-1V490h-3V491h-2V490h-3V491h-1V490h-3V491h-2V490h-2V491h-1V490h-3V489h-1V490h-2V489h-1V490h-1V491h-1V490h-5V489h-1V490h-3V491h-1V489h-1V490h-1V491h-1V490h-3V491h-1V490h-3V491h-2V490h-1V489h-1V490h-1V491h-1V490h-5V491h-2V490h-1V491h-1V490h-3V491h-1V490h-3V491h-1V490h-1V492h-1V491h-2V490h-8V491h-2V490h-1V491h-4V492h-1V490h-1V491h-1V490h-1V489h-1V490h-3V491h-2V490h-1V492h-1V490h-2V491h-1V490h-1V491h-1V489h-1V490h-8V492h-1V490h-4V491h-1V490h-7V491h-1V490h-2V491h-1V490h-4V491h-1V490h-1V492h-1V491h-1V490h-6V492h-1V490h-4V491h-2V490h-1V491h-1V490h-2V491h-1V490h-1V491h-1V490h-1V491h-1V490h-1V491h-1V490h-1V491h-1V490h-1V491h-2V490h-2V492h-1V490h-5V489h-1V491h-1V489h-2V490h-1V491h-1V490h-3V491h-1V490h-4V491h-1V490h-4V491h-1V490h-5V492h-1V490h-1V491h-1V489h-1V490h-3V492h-1V491h-1V490h-1V491h-1V490h-1V492h-1V490h-3V491h-1V490h-1V491h-1V490h-2V492h-1V490h-1V489h-1V490h-3V491h-1V490h-1V491h-1V490h-1V491h-1V490h-11V491h-1V490h-1V491h-1V490h-1V491h-1V490h-5V491h-1V490h-1V491h-1V490h-4V491h-1V490h-6V491h-1V489h-1V490h-1V491h-1V490h-4V491h-1V490h-2V489h-1V490h-1V491h-1V490h-2V491h-1V490h-1V491h-1V490h-8V491h-1V490h-2V491h-2V490h-7V491h-1V490h-1V491h-2V490h-3V491h-1V490h-2V489h-1V490h-2V491h-2V490h-2V491h-2V490h-1V491h-2V489h-1V490h-3V491h-2V490h-1V491h-1V490h-1V491h-2V490h-2V491h-2V490h-3V491h-2V489h-1V490h-3V491h-1V490h-1V489h-1V490h-3V491h-2V490h-2V491h-1V490h-4V491h-1V490h-1V491h-2V490h-2V491h-1V490h-3V491h-2V490h-3V491h-1V489h-1V490h-8V491h-1V490h-1V491h-1V490h-3V491h-3V490h-1V491h-1V489h-2V491h-1V490h-5V489h-1V490h-2V491h-1V492h-1V490h-4V491h-1V490h-5V492h-1V490h-1V491h-1V490h-5V491h-1V490h-2V492h-1V490h-1V491h-1V490h-1V491h-1V490h-3V491h-2V490h-4V491h-1V489h-1V491h-1V490h-1V492h-1V490h-2V491h-1V490h-1V491h-1V489h-1V491h-1V489h-1V491h-3V490h-4V491h-1V492h-1V491h-1V490h-1V491h-1V490h-1V491h-2V490h-2V492h-1V490h-2V489h-1V491h-3V492h-1V490h-1V489h-1V490h-4V491h-1V490h-1V491h-1V490h-3ZM277 517h1V515h1V517h1V516h1V517h1V516h5V517h1V516h3V515h1V517h1V515h1V516h4V517h1V516h7V517h1V516h2V517h1V516h4V517h1V516h2V517h1V516h5V515h1V516h1V515h1V516h2V517h1V516h1V515h1V517h2V516h3V517h1V516h2V515h2V517h1V516h1V515h1V516h3V515h1V516h2V515h1V516h3V517h1V516h7V515h1V516h3V515h1V516h2V515h2V516h2V515h1V517h2V516h5V515h1V516h5V517h1V516h4V515h1V516h4V517h1V516h2V514h1V516h4V515h2V516h7V515h1V516h2V517h2V515h1V516h1V517h1V516h2V517h1V516h3V517h1V516h8V514h1V516h2V517h1V516h5V515h1V516h3V517h2V516h1V515h1V516h5V517h2V516h2V514h1V517h1V516h1V517h1V516h1V517h1V516h1V515h1V517h2V516h2V517h1V515h1V517h1V516h7V517h1V516h3V517h1V515h1V516h2V515h1V516h4V517h1V516h3V515h1V516h4V517h1V516h6V517h1V516h1V515h1V516h3V517h1V516h3V514h1V516h1V517h2V516h11V515h1V516h1V515h3V516h1V517h1V515h1V516h3V517h1V514h1V516h4V517h1V516h8V517h1V516h1V517h1V516h1V515h1V516h1V514h1V516h1V517h1V516h1V515h1V516h1V515h1V516h2V517h1V516h2V517h1V516h2V517h2V514h1V517h1V516h5V517h1V516h3V515h1V517h1V516h2V517h1V516h6V517h2V515h1V517h1V516h2V517h2V516h1V517h1V516h1V517h1V516h1V515h1V516h6V515h1V517h1V516h8V515h1V516h7V515h1V516h7V515h1V516h1V517h1V516h3V515h1V516h1V517h1V516h6V517h1V516h2V517h1V516h1V517h1V516h2V515h1V516h1V517h1V516h7V515h1V517h2V516h1V517h1V516h4V517h1V516h2V515h1V516h7V515h1V517h1V516h1V517h1V516h11V517h1V516h5V515h3V516h2V515h2V516h1V517h1V515h1V517h1V516h1V515h2V516h2V515h1V516h1V517h1V516h7V515h1V516h3V515h1V517h1V516h1V517h1V515h1V516h2V517h1V514h1V516h5V515h1V516h1V515h1V517h1V516h3V515h2V516h1V515h1V516h2V517h1V515h1V517h1V516h4V515h1V517h1V516h8V517h2V515h1V516h3V517h1V516h5V517h2V515h1V517h1V516h2V515h1V516h6V517h1V515h1V516h1V517h3V516h1V515h1V516h1V515h1V516h1V515h2V516h1V517h1V516h3V517h1V516h3V517h1V516h3V515h2V516h2V517h1V515h1V517h1V516h2V514h1V516h1V517h1V516h6V517h1V516h1V517h1V515h1V516h1V517h1V516h1V517h1V516h2V517h1V515h1V516h3V517h1V516h1V514h1V517h1V516h3V517h1V516h2V517h2V516h1V515h1V513h1V516h1V517h1V516h3V515h1V516h2V517h2V516h4V517h2V516h2V515h1V516h2V517h1V515h1V516h2V517h1V516h4V515h1V516h1V517h1V516h1V517h1V516h7V515h1V516h2V517h1V516h1V517h1V515h1V516h2V515h1V516h3V517h1V516h1V515h1V516h2V515h1V516h2V515h1V516h4V515h1V516h8V517h1V516h1V515h1V516h1V517h1V515h1V516h5V517h1V516h3V517h1V516h2V515h1V516h1V514h1V515h1V516h2V515h1V516h2V517h3V515h1V516h1V515h1V516h3V515h1V516h2V514h1V515h1V516h1V515h2V517h1V516h1V517h1V516h4V515h1V517h1V516h2V517h1V516h6V515h1V516h2V515h1V516h4V515h1V516h13V517h2V516h1V515h1V516h1V517h1V516h3V517h1V515h1V516h16V517h1V516h2V517h2V515h1V516h1V515h1V516h4V515h1V516h3V515h1V516h1V517h1V516h1V517h1V516h6V517h3V516h1V515h1V516h2V517h2V516h10V515h1V516h1V517h1V516h1V514h1V517h1V516h2V515h1V516h3V515h1V516h2V515h1V517h1V516h2V517h1V515h1V516h4V517h1V516h2V515h2V516h2V517h2V516h2V515h1V516h6V517h1V515h1V516h5V517h1V515h1V517h1V516h7V515h1V516h1V517h1V516h3V517h2V516h1V517h2V516h3V515h1V516h1V515h1V516h4V517h1V516h1V515h1V516h6V517h1V516h2V515h1V517h1V515h1V516h1V517h1V516h3V517h1V515h1V516h4V517h1V516h4V517h1V516h2V515h1V517h1V516h1V515h1V516h1V517h1V515h1V516h1V517h2V516h1V515h1V516h5V515h1V516h3V517h1V516h1V515h1V517h1V515h2V517h1V516h3V515h1V516h3V517h1V516h1V515h1V516h1V517h1V515h1V516h4V515h1V516h1V517h1V516h3V515h2V516h4V515h1V516h3V517h1V516h1V515h1V517h1V516h2V515h1V516h3V515h1V516h3V515h1V516h5V515h2V516h2V517h1V515h2V516h1V515h1V516h2V515h1V516h2V517h2V516h3V515h1V517h1V516h1V515h1V516h1V517h1V516h1V514h1V516h3V517h1V516h1V515h1V516h2V517h1V516h1V517h1V515h1V516h1V517h1V515h1V517h1V515h1V516h3V514h1V517h1V515h1V517h1V516h3V515h1V516h1V517h1V516h8V515h1V517h1V516h2V522h-1V521h-1V522h-1V521h-7V522h-1V521h-1V522h-1V521h-1V520h-1V521h-3V523h-1V522h-2V521h-5V522h-1V521h-1V522h-1V521h-2V522h-4V523h-1V521h-2V522h-1V521h-2V522h-1V521h-2V522h-1V521h-3V522h-1V521h-2V522h-1V521h-1V522h-3V521h-6V520h-1V521h-1V523h-1V521h-17V520h-1V521h-2V522h-1V520h-1V521h-1V523h-1V521h-3V520h-1V522h-1V521h-4V520h-1V521h-3V522h-1V521h-1V520h-1V521h-5V522h-1V521h-3V522h-1V521h-3V520h-1V522h-2V521h-1V522h-1V521h-2V522h-1V520h-1V521h-1V522h-1V521h-11V523h-1V522h-1V521h-2V522h-1V521h-3V522h-1V521h-3V522h-1V521h-4V522h-1V521h-4V520h-1V522h-1V521h-3V522h-1V521h-2V522h-1V521h-1V522h-1V521h-1V522h-1V521h-6V520h-1V521h-1V522h-1V521h-4V520h-1V521h-5V522h-4V523h-1V521h-3V522h-1V523h-1V520h-1V522h-1V521h-6V522h-1V520h-1V522h-1V521h-6V522h-1V521h-9V522h-2V521h-5V522h-3V521h-4V522h-1V521h-1V522h-2V520h-1V521h-6V520h-1V521h-2V522h-1V521h-2V522h-1V521h-1V522h-1V523h-2V521h-8V522h-2V521h-4V522h-3V521h-6V523h-1V521h-1V522h-2V521h-2V522h-1V521h-1V520h-1V521h-4V520h-1V521h-1V520h-1V522h-2V521h-2V522h-2V521h-2V522h-1V521h-12V520h-1V522h-1V521h-3V522h-1V521h-3V522h-2V521h-13V522h-1V521h-13V522h-1V524h-1V521h-2V522h-1V520h-1V521h-4V522h-1V521h-1V522h-1V521h-4V520h-1V521h-6V520h-1V521h-1V520h-1V522h-6V521h-3V520h-1V521h-1V520h-1V521h-2V522h-1V521h-3V522h-2V521h-2V522h-1V521h-1V520h-1V523h-1V522h-1V520h-1V521h-1V522h-2V521h-6V522h-1V521h-5V520h-1V521h-2V520h-1V521h-4V522h-1V521h-1V522h-1V521h-1V520h-1V521h-2V522h-2V521h-1V522h-1V521h-10V522h-1V521h-1V522h-1V521h-1V522h-1V521h-4V522h-1V521h-2V520h-1V522h-1V521h-2V520h-1V521h-2V522h-2V521h-4V522h-2V521h-2V520h-1V521h-3V522h-1V521h-1V520h-2V521h-1V522h-2V521h-2V522h-1V521h-3V524h-1V521h-2V522h-1V521h-3V520h-1V522h-1V521h-2V522h-1V521h-1V523h-1V521h-2V522h-1V521h-1V522h-1V521h-6V522h-1V521h-1V520h-1V521h-2V522h-1V521h-1V522h-1V521h-3V520h-1V521h-3V522h-1V521h-3V522h-1V521h-2V522h-2V521h-2V520h-1V521h-1V520h-1V521h-3V522h-3V521h-1V520h-1V522h-1V521h-2V522h-2V521h-2V520h-1V522h-3V520h-1V522h-2V521h-1V522h-2V521h-2V523h-1V521h-3V520h-1V522h-2V521h-8V524h-1V520h-1V521h-4V522h-1V521h-1V522h-1V521h-2V520h-1V521h-2V520h-1V521h-1V522h-1V521h-1V522h-2V521h-1V522h-1V521h-6V522h-1V521h-2V520h-1V522h-1V521h-1V522h-1V521h-1V522h-2V521h-1V520h-1V521h-7V522h-1V521h-7V524h-1V521h-1V522h-1V521h-2V520h-1V521h-4V520h-1V521h-5V522h-1V521h-2V522h-2V521h-1V523h-1V521h-2V522h-1V521h-2V522h-1V521h-1V522h-1V521h-11V522h-1V521h-2V522h-3V521h-1V524h-1V522h-1V521h-2V522h-1V521h-5V523h-1V521h-2V523h-1V521h-1V522h-1V521h-1V522h-1V521h-1V522h-2V521h-4V522h-1V521h-1V522h-2V521h-4V522h-1V521h-1V520h-1V521h-7V522h-1V521h-2V522h-1V521h-1V522h-1V521h-2V520h-1V521h-2V522h-2V523h-1V521h-3V523h-1V521h-6V522h-1V520h-1V521h-1V522h-1V521h-1V522h-1V521h-1V522h-2V521h-2V523h-1V521h-1V522h-2V521h-1V522h-1V521h-4V522h-1V521h-2V522h-1V520h-1V521h-3V522h-1V521h-3V522h-1V521h-1V522h-1V520h-1V522h-1V523h-1V521h-2V522h-2V521h-1V523h-1V521h-2V522h-1V521h-1V520h-1V521h-1V522h-1V521h-3V520h-1V521h-1V522h-1V521h-1V522h-1V521h-3V523h-1V521h-4V522h-1V523h-1V521h-4V522h-1V521h-4V523h-1V521h-1V520h-1V521h-1V520h-1V521h-1V520h-1V522h-1V521h-6V522h-1V521h-1V523h-1V522h-3V521h-5V522h-1V521h-5V522h-1V521h-6V522h-1V521h-4V522h-2V521h-2V522h-1V521h-7V520h-1V522h-1V521h-3V522h-1V521h-3V522h-2V521h-2V522h-1V520h-1V522h-1V521h-2V522h-2V520h-1V521h-1V522h-1V521h-1V522h-1V521h-1V522h-1V520h-1V521h-2V522h-1V523h-1V521h-4V522h-1V521h-1V522h-3V521h-6V523h-1V521h-2V523h-1V522h-1V521h-7V522h-1V521h-2V522h-1V521h-1V522h-1V521h-1V523h-1V521h-2V522h-1V521h-2V522h-2V521h-2V520h-1V521h-4V522h-1V521h-2V523h-1V520h-1V521h-4V520h-1V521h-2V522h-1V521h-4V520h-1V521h-2V523h-1V521h-1V522h-1V521h-11V522h-2V521h-3V522h-1V521h-3V520h-1V521h-2V523h-1V520h-1V521h-4V523h-1V521h-1V522h-2V521h-1V522h-1V521h-1V520h-1V521h-2V520h-1V521h-5V522h-1V521h-1V520h-1V521h-2V522h-1V521h-3V522h-2V521h-2V522h-1V521h-2V522h-1V521h-7V522h-2V521h-1V522h-1V521h-1V522h-1V521h-2V523h-1V522h-1V521h-1V522h-1V521h-7V522h-1V521h-4V520h-1V522h-1V521h-4V522h-1V521h-5V522h-1V521h-1V522h-3ZM277 548h1V547h1V548h1V547h6V548h1V547h1V546h1V548h1V547h2V546h1V547h5V546h1V547h1V548h1V546h1V547h2V548h2V547h8V548h1V547h2V546h1V548h2V547h1V548h1V547h2V548h1V547h3V548h1V546h2V547h1V548h1V546h1V547h2V548h1V547h4V546h1V548h1V547h2V548h1V547h1V548h1V546h2V547h3V548h1V547h2V548h1V547h1V546h1V547h3V548h1V546h1V545h1V547h12V548h1V547h2V546h1V547h9V546h1V547h1V548h1V545h1V547h2V548h1V547h1V546h1V548h1V547h2V546h1V547h3V548h1V547h4V548h1V547h6V546h2V548h1V547h2V546h1V547h2V546h1V547h5V546h1V547h6V548h1V547h8V546h2V548h1V547h1V546h1V547h1V546h1V547h2V548h1V547h3V546h1V548h1V547h2V546h1V547h4V548h1V547h2V546h1V547h5V548h1V547h2V548h1V547h6V548h1V547h4V548h1V547h3V548h1V547h2V548h2V547h2V548h1V546h1V547h5V546h1V547h4V546h1V547h2V545h1V548h1V547h2V548h1V546h1V548h2V547h2V548h1V547h2V546h1V547h3V545h1V548h1V547h1V546h2V547h1V546h1V547h1V546h1V547h4V546h2V547h6V548h2V547h5V546h1V548h1V546h1V547h5V546h1V547h5V548h2V547h6V548h1V546h1V547h9V548h1V547h7V546h1V547h2V548h1V546h2V547h2V545h1V547h6V548h1V546h1V548h2V547h1V548h1V547h1V548h1V547h1V546h2V547h1V548h1V545h1V546h1V548h1V547h9V548h1V547h4V548h2V547h1V548h1V547h1V548h2V545h1V547h11V546h1V547h6V548h1V547h2V548h1V547h2V548h1V547h4V548h1V547h1V548h3V547h1V546h1V547h1V546h1V548h1V547h1V546h1V547h2V548h1V547h4V546h2V547h1V546h1V547h5V546h1V547h1V545h2V546h1V547h1V546h2V548h1V547h3V548h1V547h1V546h2V547h5V548h1V547h2V546h1V547h2V546h1V547h1V546h3V547h3V548h1V547h2V548h1V547h3V548h1V547h1V546h1V547h1V548h1V547h1V548h1V547h5V548h1V547h2V545h1V546h1V547h9V548h1V547h3V548h1V547h3V548h2V547h2V548h1V547h5V548h1V547h1V548h1V547h4V545h1V547h2V548h3V547h1V548h2V547h4V546h2V547h7V548h1V546h1V545h1V547h2V548h1V547h2V548h1V547h1V546h1V547h8V548h2V547h5V548h1V546h1V547h1V548h1V547h2V546h1V547h1V546h1V547h3V548h1V547h1V545h1V547h2V548h1V545h1V547h2V548h1V547h4V548h1V547h6V548h2V547h1V545h1V548h1V547h10V545h1V546h1V547h3V546h1V547h1V546h2V545h3V546h4V547h2V546h2V547h8V548h2V547h1V548h1V547h6V546h1V547h1V548h1V547h5V546h1V548h1V547h5V545h1V547h9V546h1V547h7V548h1V546h1V548h2V547h10V548h1V546h1V547h1V546h1V548h1V547h4V548h2V547h5V548h2V547h1V548h1V546h1V547h2V546h1V547h2V546h1V547h7V546h1V547h2V548h1V546h1V547h3V548h1V547h5V546h1V547h2V546h1V547h4V546h1V547h1V546h1V548h2V547h3V548h1V547h3V548h1V547h2V546h1V547h10V548h1V547h1V548h1V547h3V548h1V547h1V548h1V547h2V546h1V547h3V545h1V547h2V548h1V547h2V548h1V547h7V546h1V547h1V548h1V547h2V548h3V547h3V546h1V547h4V548h1V547h2V546h1V548h1V547h1V548h1V547h2V548h2V547h1V548h1V546h1V547h2V546h1V548h2V547h1V548h1V547h2V548h1V547h1V546h2V547h1V548h1V547h1V548h1V547h1V548h1V547h2V548h1V547h2V548h1V546h1V547h1V548h1V547h4V548h1V547h3V546h1V547h5V548h1V547h3V548h1V547h1V548h1V547h1V548h1V547h1V548h1V547h1V548h2V547h3V548h1V547h6V548h1V547h1V546h1V547h4V546h1V547h3V546h1V547h3V545h1V546h1V547h2V546h1V547h4V548h1V547h1V548h1V547h6V548h1V547h2V548h2V545h1V547h2V546h1V547h3V548h1V547h1V548h1V546h1V547h3V548h1V546h2V548h2V547h1V548h1V546h1V548h1V547h1V546h1V548h1V547h5V546h1V548h2V547h2V546h1V547h1V546h1V547h6V546h2V547h1V548h1V546h1V545h1V547h2V548h1V547h2V548h1V547h2V548h1V547h3V548h1V547h3V548h1V547h3V546h1V547h1V546h1V548h2V547h7V546h1V547h2V546h1V547h5V545h1V547h6V548h1V547h4V548h1V545h1V547h3V546h1V547h6V548h1V547h1V546h1V547h1V546h1V547h1V546h1V547h1V546h2V547h3V548h1V547h3V545h1V547h6V548h2V547h3V548h1V547h3V548h2V547h1V546h1V547h3V548h1V547h1V548h1V547h1V546h1V547h4V548h1V547h1V551h-1V552h-1V551h-2V553h-1V551h-1V552h-1V551h-1V552h-1V551h-1V552h-1V551h-5V552h-2V551h-3V552h-2V551h-2V552h-1V553h-1V551h-2V553h-1V551h-7V552h-1V551h-4V550h-1V551h-1V550h-1V551h-1V552h-1V551h-3V552h-1V551h-3V552h-1V551h-2V550h-1V551h-4V553h-1V551h-1V552h-1V551h-2V552h-1V551h-16V553h-1V551h-6V552h-2V550h-1V551h-4V552h-3V551h-2V552h-1V551h-3V552h-1V551h-2V552h-2V551h-1V552h-1V551h-2V552h-1V550h-1V552h-1V551h-1V550h-2V551h-5V552h-1V551h-2V550h-1V552h-1V551h-1V552h-2V551h-6V552h-2V551h-1V552h-1V550h-1V552h-1V551h-1V553h-1V552h-1V550h-2V552h-1V551h-3V550h-1V552h-1V551h-1V552h-1V553h-1V551h-6V552h-2V551h-2V552h-1V551h-6V552h-3V551h-4V550h-1V551h-2V550h-1V551h-4V552h-1V551h-7V552h-1V550h-1V551h-1V552h-1V551h-6V553h-1V551h-3V552h-2V551h-1V552h-1V551h-1V552h-1V551h-1V552h-1V551h-1V552h-3V551h-1V552h-1V551h-5V550h-1V551h-1V552h-1V551h-1V553h-1V551h-2V552h-1V551h-1V552h-1V551h-2V552h-2V551h-1V552h-1V551h-2V552h-1V551h-1V552h-1V551h-1V552h-1V551h-1V550h-2V551h-1V552h-4V551h-1V552h-2V551h-3V550h-1V552h-1V551h-1V554h-1V552h-1V551h-2V552h-1V551h-1V552h-1V551h-3V552h-1V551h-4V550h-1V551h-1V552h-1V551h-1V552h-3V551h-1V552h-2V551h-1V550h-1V551h-4V552h-1V551h-2V552h-1V551h-1V552h-3V551h-1V550h-1V552h-2V551h-1V550h-1V551h-2V552h-1V551h-1V552h-1V551h-3V552h-1V551h-1V552h-1V551h-5V552h-1V551h-7V552h-1V553h-1V551h-2V552h-1V551h-3V552h-1V554h-1V551h-1V552h-1V550h-1V551h-13V552h-2V551h-2V550h-1V552h-1V551h-10V550h-1V551h-4V552h-1V551h-1V552h-2V553h-1V552h-1V551h-3V552h-1V551h-1V552h-2V551h-3V552h-2V550h-1V551h-2V552h-1V551h-1V552h-1V551h-5V553h-1V551h-2V552h-2V550h-1V552h-1V551h-7V550h-1V551h-8V552h-1V551h-6V552h-1V550h-1V551h-5V552h-1V551h-8V552h-1V551h-1V553h-1V552h-1V551h-8V550h-2V551h-1V552h-3V553h-1V552h-1V554h-1V553h-1V551h-1V553h-1V550h-1V551h-2V552h-1V551h-2V550h-2V551h-7V552h-1V551h-2V552h-1V551h-2V552h-1V553h-1V551h-3V553h-1V551h-1V552h-2V551h-4V552h-1V551h-1V552h-1V551h-1V552h-1V551h-1V552h-1V553h-1V551h-1V552h-1V551h-3V550h-1V551h-4V553h-1V551h-1V550h-1V552h-1V551h-1V552h-1V551h-3V552h-2V551h-9V553h-1V552h-1V551h-1V553h-1V552h-2V551h-3V552h-1V551h-4V552h-1V551h-1V552h-1V550h-2V551h-4V554h-1V552h-1V551h-1V552h-3V551h-7V552h-1V551h-1V552h-1V551h-5V552h-1V551h-2V552h-2V551h-3V553h-1V551h-3V553h-1V551h-2V552h-1V551h-6V550h-1V552h-1V551h-2V552h-2V551h-1V552h-2V551h-1V552h-1V551h-1V552h-1V553h-1V551h-2V552h-1V551h-3V553h-1V551h-2V552h-1V551h-5V550h-1V551h-1V550h-1V551h-2V550h-1V551h-2V552h-2V551h-4V552h-1V550h-1V551h-1V552h-1V551h-3V552h-1V554h-1V552h-1V553h-1V552h-2V553h-1V554h-1V552h-1V553h-1V551h-2V552h-1V551h-1V550h-1V551h-1V552h-1V551h-5V552h-2V551h-3V552h-1V550h-1V551h-3V552h-5V551h-1V552h-1V551h-2V552h-1V551h-2V552h-1V551h-1V552h-2V551h-6V553h-1V551h-2V552h-1V551h-2V552h-1V553h-1V551h-4V550h-1V552h-2V551h-1V552h-1V551h-1V552h-2V551h-4V552h-1V553h-1V551h-3V552h-1V551h-4V552h-1V550h-1V551h-1V552h-1V551h-1V550h-2V551h-1V552h-1V551h-1V552h-1V551h-1V552h-2V551h-1V553h-1V552h-1V551h-10V552h-1V551h-2V550h-1V551h-7V552h-1V551h-5V552h-1V551h-2V552h-1V551h-1V552h-1V551h-1V553h-1V551h-4V552h-1V553h-1V551h-4V552h-1V551h-7V552h-1V550h-1V551h-5V552h-2V553h-1V551h-4V552h-1V551h-10V550h-1V551h-2V552h-1V550h-1V551h-6V552h-1V551h-2V552h-2V550h-1V552h-1V551h-2V552h-1V550h-1V551h-1V553h-1V550h-1V551h-10V550h-1V552h-1V551h-2V553h-1V552h-1V551h-2V552h-1V551h-3V552h-1V551h-2V552h-1V551h-1V553h-1V551h-4V552h-1V551h-1V552h-1V551h-2V552h-1V551h-8V552h-1V551h-5V552h-1V551h-1V552h-1V550h-1V551h-3V552h-1V551h-2V550h-1V551h-3V552h-1V551h-1V550h-1V551h-8V552h-1V551h-6V550h-1V551h-1V552h-1V551h-3V550h-1V552h-2V551h-3V552h-1V550h-1V551h-7V552h-1V551h-4V552h-1V551h-6V552h-1V550h-1V551h-1V552h-1V551h-2V550h-1V552h-1V551h-1V550h-1V551h-10V552h-1V551h-1V552h-1V551h-1V552h-2V551h-1V552h-1V551h-5V552h-1V551h-1V550h-1V551h-1V552h-1V551h-1V552h-1V551h-1V550h-1V551h-1V552h-1V551h-1V552h-2V551h-3V550h-2V552h-1V551h-1V552h-1V551h-1V552h-2V550h-1V551h-4V552h-1V551h-2V552h-2V551h-1V550h-2V552h-2V551h-1V553h-1V552h-1V551h-2V552h-1V551h-1V552h-1V553h-1V550h-1V551h-2V552h-1V551h-8V552h-2V551h-3V554h-1V551h-5V552h-1V551h-4V552h-1V551h-2V552h-1V551h-2V552h-1V551h-3V552h-1V551h-1V552h-1ZM277 577h10V576h2V577h4V578h1V577h6V578h1V576h1V577h2V576h1V577h9V576h1V577h2V575h1V577h9V578h1V577h2V578h1V577h4V578h1V577h3V576h1V577h3V578h1V577h9V578h1V577h9V578h2V577h2V578h1V577h8V578h1V577h6V578h1V577h2V576h1V577h1V578h1V577h8V578h1V577h2V578h1V576h1V577h4V578h1V577h1V576h1V577h3V578h2V577h1V578h1V577h1V576h1V578h3V577h2V576h1V577h1V576h1V577h9V576h2V577h4V575h1V577h4V578h1V577h4V578h1V577h7V576h1V577h2V578h1V577h10V576h1V577h9V575h1V578h1V577h4V578h1V577h3V576h1V577h3V576h1V577h1V576h1V577h6V578h1V577h1V578h1V576h1V577h1V578h1V577h2V578h1V577h3V578h1V577h1V578h1V577h2V578h1V577h2V578h1V577h1V576h1V577h1V578h2V577h14V578h1V577h3V578h2V577h2V578h1V577h1V578h1V577h10V576h1V577h4V578h2V577h9V576h1V577h2V578h1V577h6V578h1V577h10V575h1V577h8V578h2V577h3V578h1V577h1V578h1V577h1V578h1V577h1V576h1V577h7V578h3V577h2V578h1V577h3V578h1V577h7V578h1V577h6V575h1V577h1V576h1V578h1V576h1V577h2V578h1V576h1V577h2V578h1V577h1V575h1V576h2V577h1V578h1V577h7V578h1V577h2V578h1V577h2V575h1V577h2V576h1V577h3V578h1V577h7V576h1V577h3V578h2V576h2V578h1V577h3V578h1V577h1V578h1V576h2V577h2V578h1V577h5V578h1V577h5V578h1V577h1V578h1V577h6V578h1V577h2V578h1V577h1V578h1V577h1V576h1V577h7V578h1V577h7V578h1V577h1V578h1V577h4V578h1V577h1V578h1V576h1V577h2V578h2V576h1V577h13V576h1V578h1V577h1V576h1V577h6V578h1V577h9V576h1V577h3V576h1V578h1V577h5V578h1V576h1V577h4V578h1V577h1V576h1V577h1V578h1V577h2V578h1V577h4V578h1V577h4V578h1V577h2V578h1V577h2V576h1V577h1V578h1V577h2V578h1V577h2V576h1V577h3V576h1V577h6V578h1V577h2V576h1V578h3V577h4V578h1V577h2V578h1V577h3V576h1V577h3V578h2V577h1V578h2V577h2V578h1V577h12V578h1V577h4V578h1V577h11V578h1V577h14V578h1V577h1V576h1V577h1V578h1V577h2V578h1V577h2V578h1V577h2V578h1V577h4V578h1V577h1V578h1V577h2V576h1V577h2V578h1V577h2V578h1V577h6V578h2V577h5V578h1V577h5V576h1V577h13V578h1V577h3V578h1V577h2V576h1V577h3V576h1V577h1V578h1V577h5V576h1V577h5V578h1V576h1V575h1V577h4V576h1V578h1V577h3V578h3V577h1V578h2V577h15V576h1V578h1V576h1V577h2V578h1V577h8V576h1V577h3V578h3V577h4V578h1V577h6V576h1V577h2V578h1V577h2V576h1V577h9V578h1V577h6V578h2V577h2V576h1V577h2V576h1V577h1V578h1V577h3V578h1V576h1V578h1V577h2V578h1V577h1V578h1V577h1V576h1V578h1V577h2V576h1V577h2V578h1V577h2V576h1V578h1V577h7V578h1V577h8V578h2V577h2V576h1V577h1V576h1V577h1V578h1V576h1V578h2V577h4V578h1V577h6V578h1V577h1V578h1V577h2V576h1V577h1V576h1V578h1V577h7V578h2V576h1V577h3V578h1V577h5V578h1V577h12V578h1V577h8V576h1V577h2V576h1V577h2V576h1V577h3V578h2V577h2V578h1V577h2V578h1V577h3V578h1V576h1V577h1V578h1V577h3V576h1V577h6V578h1V577h2V578h1V577h5V578h2V577h2V578h1V577h11V578h2V577h1V578h1V577h1V578h1V577h3V578h1V577h3V576h1V577h8V576h1V577h2V578h2V576h1V577h1V578h2V577h4V578h2V576h1V577h1V576h1V577h1V578h1V577h1V576h1V577h6V578h1V576h1V577h3V578h1V577h2V576h1V577h3V576h3V577h1V576h1V577h1V578h1V577h7V576h1V577h8V578h1V577h1V578h2V577h2V578h1V577h1V576h1V578h1V577h1V582h-2V581h-2V582h-1V581h-2V582h-1V584h-1V581h-1V582h-1V581h-2V582h-1V581h-5V580h-1V581h-7V582h-1V581h-4V580h-2V581h-1V582h-1V581h-1V580h-1V581h-2V582h-1V581h-3V582h-2V581h-2V582h-1V581h-3V580h-1V581h-1V582h-1V581h-4V582h-2V581h-2V582h-1V581h-1V582h-2V581h-1V580h-1V582h-3V581h-10V583h-1V581h-3V582h-1V581h-3V582h-1V581h-1V582h-1V581h-1V582h-2V581h-7V582h-1V581h-3V582h-1V581h-2V582h-2V581h-5V582h-1V581h-2V582h-1V581h-4V582h-1V581h-1V580h-1V581h-3V582h-1V581h-2V582h-1V581h-3V582h-1V581h-2V582h-1V581h-2V582h-2V581h-18V582h-1V581h-2V582h-1V581h-9V582h-1V581h-5V582h-1V581h-3V582h-3V581h-4V582h-1V581h-2V583h-1V581h-2V580h-1V581h-2V582h-1V581h-1V582h-1V581h-6V583h-1V581h-4V582h-2V581h-1V582h-1V581h-6V583h-1V582h-1V581h-8V582h-1V581h-7V582h-1V580h-1V581h-2V582h-1V581h-5V583h-1V582h-1V581h-1V582h-1V581h-1V582h-1V581h-2V582h-1V580h-1V582h-1V581h-3V582h-1V581h-1V580h-1V581h-2V580h-1V581h-2V583h-1V582h-1V581h-6V582h-1V581h-6V583h-1V581h-2V580h-1V581h-2V582h-1V581h-2V580h-1V581h-6V582h-1V581h-4V582h-3V581h-3V580h-1V581h-8V582h-1V581h-2V580h-1V582h-1V581h-16V582h-2V581h-1V582h-3V581h-3V582h-1V580h-1V581h-6V582h-1V581h-11V582h-1V581h-5V580h-1V581h-2V582h-1V581h-3V582h-1V581h-8V582h-1V581h-2V582h-1V581h-1V580h-1V581h-5V582h-1V581h-5V582h-2V581h-6V582h-1V581h-2V582h-1V581h-5V582h-1V581h-1V582h-2V581h-3V582h-1V581h-2V582h-1V581h-2V582h-1V583h-1V581h-1V582h-1V581h-1V580h-1V581h-1V582h-1V581h-14V582h-1V581h-6V582h-1V581h-3V582h-2V581h-4V582h-1V581h-12V582h-1V581h-1V582h-3V581h-1V582h-2V581h-7V582h-1V581h-2V582h-1V581h-4V582h-3V581h-1V583h-1V581h-1V582h-1V581h-13V582h-1V581h-2V582h-1V581h-4V582h-2V581h-1V582h-2V581h-3V582h-1V581h-2V583h-1V581h-1V582h-1V581h-1V582h-2V581h-3V582h-1V581h-5V582h-1V581h-5V582h-1V580h-1V581h-13V582h-2V581h-5V580h-1V581h-1V582h-1V580h-1V581h-12V582h-1V581h-1V582h-2V581h-2V580h-1V582h-1V581h-1V582h-1V581h-4V582h-1V581h-1V582h-1V581h-4V582h-1V581h-2V582h-2V581h-8V582h-1V581h-1V582h-1V581h-2V582h-1V581h-6V582h-3V581h-1V582h-1V581h-3V582h-1V581h-5V582h-1V581h-3V580h-1V582h-1V581h-1V583h-1V581h-3V582h-1V581h-2V582h-2V581h-3V582h-1V581h-4V582h-1V581h-2V582h-1V581h-8V582h-2V581h-2V582h-1V581h-7V582h-1V581h-1V580h-3V581h-1V582h-1V581h-3V582h-1V581h-3V582h-1V580h-1V581h-8V582h-1V581h-1V583h-1V581h-4V582h-2V581h-3V582h-1V581h-2V582h-3V581h-3V582h-1V581h-3V580h-1V581h-1V582h-1V581h-1V582h-1V581h-1V582h-1V581h-3V582h-2V581h-3V582h-1V581h-4V580h-1V581h-10V582h-1V581h-6V582h-1V581h-12V582h-2V581h-4V580h-1V581h-6V582h-1V581h-3V582h-1V581h-1V582h-1V581h-2V582h-2V581h-3V582h-1V581h-5V582h-1V581h-8V582h-2V581h-1V580h-1V581h-1V582h-1V581h-2V582h-1V581h-2V582h-1V581h-1V582h-1V581h-3V582h-1V581h-2V582h-1V581h-2V582h-1V581h-1V582h-1V581h-2V582h-1V581h-2V582h-1V580h-1V581h-1V580h-1V582h-1V581h-2V580h-1V581h-3V582h-1V581h-4V582h-1V581h-2V582h-2V581h-17V582h-1V581h-10V582h-2V581h-1V582h-1V581h-1V582h-1V581h-2V583h-1V581h-6V580h-2V581h-2V582h-1V581h-5V582h-1V580h-1V581h-1V580h-1V582h-1V581h-1V582h-3V581h-2V582h-1V581h-1V582h-2V581h-1V582h-2V581h-1V582h-2V581h-4V580h-1V582h-1V581h-2V582h-1V581h-7V582h-2V581h-4V582h-2V581h-5V582h-1V581h-8V582h-1V581h-2V582h-2V581h-9V582h-1V581h-9V582h-1V581h-1V582h-1V581h-5V582h-1V581h-4V582h-1V581h-2V582h-1V581h-12V580h-1V581h-2V583h-1V581h-6V580h-1V581h-2V580h-1V582h-1V581h-6V582h-1V581h-4V580h-2V581h-2V582h-1V581h-7ZM277 607h4V606h1V607h1V608h1V607h8V608h1V607h5V608h1V607h5V608h1V607h3V605h1V607h3V608h1V607h1V608h1V605h1V608h1V607h6V608h4V607h2V608h2V607h7V608h1V607h4V606h1V607h2V608h1V607h1V608h1V607h4V608h1V607h1V606h1V607h9V606h1V607h6V608h1V606h1V607h2V608h1V607h7V605h1V607h2V608h1V606h1V607h3V608h1V607h4V608h1V607h3V608h1V607h1V608h1V607h2V608h1V607h2V606h1V607h5V606h2V607h3V608h1V606h1V607h1V608h1V607h1V608h1V605h1V606h1V607h4V608h1V607h7V606h1V607h1V606h1V608h1V605h1V607h5V605h1V607h2V608h1V607h7V608h1V607h2V608h1V607h12V606h2V607h4V608h1V607h3V608h1V607h2V608h2V607h1V606h1V607h3V608h1V607h16V608h1V607h1V608h1V607h7V606h1V607h3V606h1V607h5V608h1V607h1V608h1V607h2V608h1V607h5V608h1V607h1V608h1V606h1V607h5V608h1V607h3V606h1V607h4V606h1V607h5V608h1V607h3V608h1V607h3V605h1V607h6V608h1V607h22V608h2V607h1V606h1V607h7V608h1V607h2V608h1V607h6V606h1V607h5V608h3V607h3V608h2V607h3V608h1V607h1V608h1V607h1V608h1V606h1V607h5V608h1V607h2V608h2V607h1V608h2V607h2V608h1V607h3V606h1V608h1V607h5V606h1V607h2V608h1V607h2V606h1V608h1V607h2V608h2V607h1V608h1V607h4V608h1V607h2V608h1V607h5V608h2V607h9V608h1V607h3V608h1V606h1V607h12V608h1V607h3V608h1V607h2V608h2V607h2V606h1V607h5V608h2V607h4V608h3V607h1V606h1V608h1V607h3V608h2V607h2V608h1V607h8V606h1V607h7V608h1V606h1V607h10V608h3V607h2V608h1V607h1V608h1V607h3V606h1V607h1V606h1V607h14V606h2V608h1V607h11V608h1V607h7V606h1V607h2V608h1V607h2V608h2V607h3V608h1V607h9V606h1V607h3V608h1V606h1V608h2V607h10V608h1V607h3V606h1V608h1V607h3V608h1V607h3V606h1V607h5V608h1V606h1V608h2V607h4V608h1V607h1V608h1V607h3V606h1V607h7V606h1V608h1V607h4V608h2V607h1V608h1V606h1V607h2V608h1V607h7V608h1V607h1V608h2V607h2V608h1V607h1V606h1V607h3V606h1V607h5V608h2V607h3V606h1V607h5V606h1V607h10V608h1V607h2V608h1V607h1V608h1V607h1V606h1V608h1V607h19V608h1V607h5V608h1V607h3V608h1V607h2V608h1V607h1V608h1V607h14V606h1V607h5V608h2V607h11V606h1V607h1V608h1V607h4V606h1V607h3V606h1V607h3V608h1V607h1V608h2V607h10V608h1V607h16V606h1V608h1V607h9V606h1V608h2V607h2V608h1V606h1V607h6V608h1V607h4V608h1V607h10V606h2V607h3V605h1V606h1V607h7V608h1V607h4V608h2V607h3V608h1V607h1V608h1V607h2V608h1V607h4V608h2V607h3V608h1V607h3V608h1V607h2V605h1V607h2V606h1V605h2V607h9V608h2V607h1V608h1V607h1V606h1V608h1V605h1V607h1V608h1V607h5V608h1V607h8V608h1V607h4V608h1V607h1V608h1V607h4V606h1V607h1V606h1V608h1V606h1V608h1V607h1V608h1V607h5V608h1V607h5V606h1V607h2V606h1V607h12V608h1V606h1V608h1V607h2V608h1V607h3V606h1V607h2V606h1V607h2V606h1V607h2V606h1V607h3V608h1V607h1V606h1V608h1V607h3V608h1V607h4V606h1V605h1V606h1V607h4V608h1V607h2V608h1V606h1V607h2V606h2V607h1V608h1V607h3V608h2V606h1V607h1V608h1V607h2V608h1V607h7V608h3V607h4V608h1V607h1V608h1V607h2V608h1V607h3V606h1V607h2V606h1V608h1V607h8V608h1V607h6V608h1V607h9V608h1V606h1V611h-1V612h-1V611h-9V612h-1V611h-6V612h-1V611h-8V612h-1V611h-3V610h-1V611h-3V612h-1V611h-2V612h-1V611h-1V612h-1V611h-4V612h-3V611h-7V612h-1V611h-2V612h-2V610h-1V612h-2V611h-3V612h-1V611h-2V610h-1V611h-3V613h-1V611h-2V612h-1V611h-4V610h-1V611h-1V612h-1V611h-3V613h-1V612h-1V611h-1V613h-1V611h-1V612h-1V611h-2V612h-1V611h-3V610h-1V611h-8V610h-1V611h-3V612h-1V611h-2V612h-1V610h-1V612h-1V611h-2V612h-1V611h-9V610h-1V611h-8V612h-1V611h-5V612h-1V611h-1V612h-1V610h-1V612h-1V610h-1V611h-6V612h-1V611h-1V612h-1V611h-4V613h-1V611h-6V612h-1V611h-1V613h-1V611h-5V613h-1V611h-2V612h-1V610h-1V611h-1V612h-1V611h-1V612h-2V611h-7V613h-1V611h-1V610h-1V611h-1V610h-1V611h-2V610h-1V611h-2V612h-1V611h-3V612h-1V611h-3V612h-2V611h-4V612h-1V611h-2V612h-1V611h-1V612h-1V611h-3V612h-2V611h-3V612h-2V611h-1V612h-1V611h-5V610h-1V611h-5V610h-1V611h-10V612h-1V611h-1V612h-2V611h-1V612h-1V611h-6V610h-1V612h-1V611h-2V612h-2V610h-1V611h-9V612h-1V611h-17V612h-1V611h-10V612h-2V611h-1V612h-1V611h-12V612h-1V611h-1V610h-1V611h-11V612h-3V611h-14V612h-1V611h-4V612h-3V611h-2V612h-1V611h-3V612h-1V611h-5V612h-1V611h-11V612h-1V611h-1V612h-1V611h-5V612h-1V611h-2V612h-1V611h-1V612h-1V611h-2V612h-2V611h-9V610h-1V611h-9V612h-2V611h-5V610h-1V612h-1V611h-2V610h-1V611h-1V612h-1V611h-2V613h-2V611h-1V612h-1V611h-7V612h-1V611h-1V613h-1V611h-1V612h-1V611h-1V612h-2V611h-4V612h-1V610h-1V612h-1V611h-7V613h-1V611h-2V612h-1V611h-1V612h-1V611h-4V612h-2V611h-1V612h-1V611h-4V612h-1V611h-4V612h-1V611h-3V612h-1V610h-1V611h-3V612h-1V611h-10V612h-2V611h-1V612h-1V611h-13V612h-1V611h-3V612h-2V611h-2V612h-1V611h-2V610h-1V612h-1V611h-6V612h-1V611h-10V612h-2V611h-1V610h-1V611h-13V612h-1V611h-6V612h-1V611h-1V612h-1V611h-2V612h-3V611h-11V612h-2V611h-6V610h-1V611h-8V612h-1V611h-2V612h-2V611h-3V612h-1V610h-1V611h-1V612h-3V611h-4V612h-2V611h-5V610h-1V611h-2V612h-2V611h-2V612h-1V611h-3V612h-1V611h-13V612h-1V611h-3V612h-1V611h-2V612h-1V611h-2V612h-1V611h-3V612h-3V611h-4V612h-1V611h-2V612h-1V611h-4V612h-1V611h-1V612h-2V611h-2V612h-1V611h-2V612h-2V611h-2V610h-1V611h-5V612h-3V611h-2V613h-1V611h-2V612h-2V611h-1V612h-2V611h-1V612h-2V611h-5V610h-1V612h-1V611h-1V612h-1V611h-1V612h-1V611h-3V612h-2V611h-2V612h-4V611h-12V612h-1V611h-2V612h-1V611h-2V613h-1V611h-5V612h-3V611h-4V613h-1V611h-8V612h-1V611h-4V612h-1V611h-3V612h-1V611h-8V612h-1V611h-1V612h-1V611h-3V612h-1V611h-9V612h-1V611h-4V612h-1V613h-1V611h-4V610h-1V613h-1V611h-1V612h-1V611h-5V612h-1V611h-2V612h-1V611h-1V612h-1V611h-9V610h-1V611h-7V612h-1V611h-1V612h-1V611h-16V612h-1V611h-3V610h-1V611h-1V612h-2V611h-2V612h-1V611h-1V612h-1V611h-1V612h-1V611h-5V612h-1V611h-12V612h-2V611h-1V613h-1V611h-7V612h-1V611h-8V610h-1V612h-1V610h-1V611h-1V610h-1V611h-7V612h-1V611h-4V612h-1V611h-1V612h-1V611h-1V612h-1V611h-2V612h-1V611h-3V610h-2V611h-8V612h-1V611h-2V612h-1V611h-1V612h-1V611h-1V612h-3V611h-4V612h-1V611h-3V610h-1V612h-1V611h-2V612h-1V611h-7V612h-1V611h-3V612h-1V611h-1V612h-1V611h-4V610h-1V611h-9V610h-1V611h-1V612h-1V611h-4V612h-1V611h-1V612h-1V611h-6V612h-2V611h-6V612h-2V613h-1V611h-1V613h-1V612h-4V611h-6V612h-1V610h-1V612h-3V611h-7V612h-1V611h-5V612h-1V611h-3V613h-1V612h-2V611h-8V612h-1V611h-1V610h-1V611h-3V612h-1ZM277 637h2V638h2V636h1V639h2V638h2V637h1V638h1V639h1V637h1V638h1V637h1V638h3V639h1V637h1V639h1V638h4V639h1V638h2V639h1V638h2V639h2V636h1V638h1V637h1V638h8V639h1V637h1V639h2V638h6V639h1V638h2V639h1V637h1V638h4V637h1V638h6V639h1V637h1V638h1V637h1V639h1V637h1V638h2V637h1V638h4V639h1V638h1V639h1V638h1V637h1V638h2V639h1V638h7V637h2V639h1V638h3V639h2V638h3V639h1V638h2V637h1V638h9V639h1V638h1V639h1V638h1V636h1V639h1V638h3V639h1V638h5V639h1V638h1V637h1V638h3V637h1V638h1V639h1V637h1V638h1V639h1V637h1V638h6V639h1V636h1V639h1V638h3V637h2V638h2V636h1V638h4V639h1V637h1V638h3V639h1V638h1V639h1V638h1V639h1V638h10V639h1V638h2V637h1V639h1V638h1V639h1V638h6V639h1V638h2V639h1V637h2V638h4V639h1V638h1V639h1V638h2V637h2V638h3V637h1V638h1V637h1V638h2V639h1V637h1V638h1V639h1V638h3V637h1V638h2V639h1V638h2V639h1V638h1V639h3V638h3V637h1V639h1V638h5V637h1V638h3V639h1V637h1V638h2V637h1V638h3V637h1V639h1V638h1V636h1V638h6V639h1V638h6V639h1V638h7V637h1V638h7V637h1V639h1V638h5V639h1V638h6V639h1V638h5V636h1V638h3V639h1V638h1V639h1V637h1V638h2V639h2V638h2V637h1V638h1V637h1V638h1V637h2V638h1V639h1V638h5V639h2V638h16V637h1V638h1V635h1V639h2V638h2V639h1V638h12V637h1V639h1V638h3V637h2V638h5V639h2V637h1V639h1V638h1V637h1V639h1V638h1V637h1V638h1V639h1V637h1V638h2V639h2V638h1V639h3V637h2V638h6V637h1V638h1V639h1V638h3V639h1V638h3V639h1V638h3V639h1V638h5V637h1V639h1V638h1V639h1V638h2V636h2V638h6V639h1V638h1V639h1V637h1V639h2V638h6V637h1V638h5V637h1V638h1V639h1V638h2V639h1V636h1V638h3V639h2V638h1V637h1V638h1V639h1V638h2V639h1V638h4V639h1V638h5V636h1V638h2V637h1V638h4V639h1V638h3V639h1V638h1V637h1V638h7V637h1V638h4V639h1V638h2V639h1V637h1V638h1V639h1V638h7V639h1V638h4V637h1V638h1V637h3V638h3V639h1V637h1V639h1V638h3V637h1V639h1V638h1V639h2V638h7V639h1V638h1V637h1V638h1V637h1V638h6V637h1V639h1V637h1V638h1V636h1V638h2V639h1V637h1V638h1V637h1V639h1V638h1V636h1V638h2V639h1V638h2V637h1V638h1V637h1V638h8V639h1V638h2V639h1V638h1V639h1V637h1V638h3V639h1V638h2V637h1V638h8V639h2V638h4V639h1V637h2V638h2V637h1V638h3V639h1V638h2V639h1V638h1V639h1V638h3V637h1V638h1V637h2V639h1V638h2V639h1V638h3V639h1V638h1V637h1V638h3V639h1V637h1V638h7V636h1V637h1V638h4V637h1V638h8V637h1V639h1V638h2V639h1V638h3V639h1V638h1V639h1V638h1V639h1V637h1V638h4V639h2V638h3V637h2V638h1V637h1V638h2V637h2V639h1V638h2V639h1V638h1V639h1V638h1V639h1V638h6V639h1V637h1V638h2V639h1V638h2V639h2V638h9V639h1V638h1V636h1V638h4V639h1V637h1V639h1V638h1V639h1V638h1V637h2V638h1V639h1V637h1V638h2V639h1V637h1V638h1V639h1V638h1V639h1V638h5V637h1V638h2V639h1V637h1V638h3V637h1V638h2V637h1V638h7V637h1V638h8V639h1V638h7V639h1V638h2V637h1V638h7V639h2V638h1V639h1V636h1V638h1V639h1V638h4V639h1V638h2V637h1V638h5V639h1V637h1V638h3V637h3V638h3V639h1V638h2V637h1V638h1V637h1V639h1V638h3V639h1V638h4V639h1V637h1V638h3V639h1V638h3V637h1V638h1V637h1V638h1V639h1V638h6V639h1V637h1V638h1V637h1V638h1V639h1V638h2V637h1V638h1V639h1V638h4V639h1V637h1V638h1V637h2V638h1V637h2V639h1V638h1V637h1V639h1V637h1V638h3V639h2V638h2V637h1V638h4V637h1V638h3V639h1V637h1V638h5V635h1V638h9V639h1V638h3V635h1V638h5V639h1V638h1V637h2V638h3V637h1V638h11V639h1V638h3V639h1V637h4V638h1V639h1V638h6V639h2V638h1V637h1V638h1V639h1V638h3V637h1V639h1V637h1V638h3V639h2V638h1V637h1V638h4V637h1V638h2V639h2V637h1V639h1V638h1V637h1V638h3V639h1V638h7V637h1V638h2V637h1V638h1V637h1V638h2V639h1V638h1V637h1V639h1V637h1V638h1V639h1V637h1V639h1V637h3V638h2V639h1V638h1V639h1V638h3V639h1V638h3V637h1V638h6V639h1V638h1V637h1V638h10V639h1V638h7V642h-7V643h-1V642h-3V643h-1V642h-4V643h-1V642h-1V641h-1V642h-1V643h-1V642h-4V643h-1V642h-1V641h-1V642h-1V643h-1V642h-1V643h-1V642h-3V643h-1V642h-1V643h-3V642h-3V643h-4V641h-1V643h-1V642h-2V643h-1V642h-4V641h-1V642h-10V643h-1V642h-3V641h-1V642h-1V643h-1V642h-1V643h-2V642h-2V643h-2V645h-1V642h-2V643h-1V642h-1V645h-1V643h-1V642h-3V641h-1V643h-1V641h-1V642h-3V643h-1V642h-1V641h-1V642h-1V643h-2V642h-6V643h-1V642h-2V641h-1V644h-1V642h-1V643h-1V642h-1V643h-1V642h-1V644h-1V643h-1V642h-3V643h-1V642h-2V643h-1V642h-3V641h-1V642h-4V643h-1V642h-1V643h-1V642h-1V643h-1V642h-3V641h-1V642h-3V643h-1V642h-9V641h-1V642h-6V643h-1V642h-5V644h-1V642h-1V643h-1V642h-3V643h-2V642h-4V643h-1V641h-1V642h-1V643h-1V641h-1V643h-1V642h-1V641h-2V642h-2V643h-1V642h-1V644h-1V642h-2V643h-1V642h-1V641h-1V642h-2V643h-1V642h-1V641h-1V643h-1V642h-1V643h-1V642h-3V643h-1V642h-2V643h-1V642h-3V641h-1V642h-3V643h-1V642h-3V641h-1V643h-1V642h-4V643h-1V642h-3V643h-1V641h-1V642h-4V643h-1V642h-1V643h-1V644h-1V642h-1V641h-2V643h-1V644h-1V642h-2V643h-1V642h-5V641h-1V642h-2V644h-1V642h-4V643h-1V642h-2V643h-1V642h-1V643h-2V642h-1V643h-1V642h-5V641h-1V642h-2V644h-1V642h-7V643h-1V642h-4V643h-1V642h-11V641h-1V642h-2V641h-1V642h-3V641h-1V645h-1V642h-4V643h-2V642h-2V643h-1V642h-1V643h-1V642h-1V641h-1V644h-1V642h-2V641h-1V643h-1V642h-2V641h-1V642h-1V644h-1V642h-1V643h-1V641h-1V643h-1V642h-3V643h-1V641h-1V642h-1V643h-1V642h-9V643h-2V642h-2V643h-1V642h-1V643h-1V641h-1V643h-1V642h-3V643h-1V642h-2V643h-1V642h-1V643h-1V642h-1V643h-1V642h-2V643h-1V641h-1V642h-3V643h-1V642h-6V643h-2V642h-4V641h-1V643h-3V642h-1V643h-1V642h-3V643h-1V642h-2V643h-1V641h-1V642h-3V643h-1V642h-2V644h-1V642h-1V641h-1V644h-1V642h-4V641h-1V642h-2V643h-1V642h-1V643h-1V642h-2V641h-1V643h-1V642h-5V645h-1V642h-3V644h-1V642h-2V643h-1V641h-2V642h-5V643h-1V642h-1V643h-2V642h-1V643h-1V642h-1V643h-1V642h-1V643h-1V642h-3V641h-1V643h-1V642h-4V643h-2V642h-4V643h-1V642h-3V641h-1V642h-2V643h-1V642h-4V643h-1V642h-1V643h-1V642h-2V643h-1V642h-6V643h-1V642h-6V643h-1V642h-2V641h-1V642h-1V643h-1V641h-1V642h-1V641h-1V643h-1V642h-4V644h-1V643h-1V642h-2V643h-1V642h-1V643h-1V642h-2V641h-1V643h-1V641h-1V642h-1V643h-1V642h-2V644h-1V642h-2V643h-1V642h-1V643h-1V644h-1V642h-1V644h-1V642h-4V644h-1V641h-1V644h-1V642h-6V643h-1V641h-1V642h-3V643h-2V642h-7V643h-1V642h-2V643h-1V642h-2V643h-1V642h-4V641h-1V642h-2V643h-1V642h-3V643h-1V642h-2V643h-1V642h-3V643h-1V642h-5V643h-1V642h-6V643h-2V642h-2V643h-1V642h-1V643h-1V642h-2V643h-1V642h-1V641h-1V642h-1V643h-2V642h-4V644h-1V642h-2V643h-1V642h-7V644h-1V642h-5V643h-3V641h-1V643h-1V642h-1V643h-2V642h-5V641h-1V642h-3V643h-1V642h-1V643h-1V641h-1V642h-5V643h-1V642h-3V645h-1V642h-3V643h-1V642h-3V643h-1V642h-3V644h-1V642h-4V641h-1V642h-1V644h-1V643h-5V642h-2V641h-1V643h-1V642h-1V641h-1V642h-1V643h-1V642h-2V645h-1V642h-1V643h-2V642h-6V641h-1V642h-2V643h-2V641h-1V642h-12V643h-1V642h-2V643h-2V641h-1V643h-1V641h-1V642h-16V643h-2V642h-4V644h-1V643h-1V644h-1V642h-1V641h-1V642h-1V641h-1V643h-1V642h-3V643h-2V642h-2V641h-1V643h-1V642h-1V643h-1V642h-3V641h-1V642h-1V643h-1V642h-3V645h-1V642h-3V643h-1V642h-2V643h-1V642h-5V643h-1V641h-1V642h-3V643h-1V642h-3V641h-1V642h-7V643h-1V642h-1V643h-1V642h-4V643h-1V642h-6V641h-1V643h-2V642h-4V641h-1V642h-3V643h-1V642h-3V643h-1V642h-5V643h-1V641h-1V642h-1V643h-3V644h-1V643h-1V642h-1V643h-1V642h-2V643h-1V642h-2V643h-3V642h-1V644h-1V642h-2V643h-1V644h-1V642h-3V641h-1V642h-3V643h-2V642h-2V643h-1V642h-1V643h-1V642h-4V641h-1V642h-1V643h-1V642h-2V643h-1V642h-2V643h-2V642h-2V643h-1V642h-1V643h-2V642h-2V643h-1V642h-10V643h-1V642h-1V643h-1V642h-1V643h-1V642h-1V644h-1V642h-1V641h-1V643h-1V642h-4V641h-1V642h-3V641h-1V642h-3V643h-3V642h-6V641h-1V643h-1V642h-2V643h-1V642h-5V641h-1V642h-1V643h-1V642h-5V643h-1V642h-3V643h-1V642h-2V643h-1V642h-1V643h-1V642h-9V641h-1V642h-2V645h-1V642h-2V643h-3V642h-3V643h-1V642h-1V641h-1V642h-7V644h-1V642h-2V641h-1V643h-2V644h-2V643h-1V642h-3V641h-1V642h-2V641h-1V643h-1V641h-1V642h-2V643h-2V642h-5V641h-1V642h-3V643h-1V641h-1V643h-2V642h-1V643h-1V642h-1V643h-1V642h-4V643h-2V641h-1V643h-1V642h-7V643h-1V642h-3V643h-2V642h-2V643h-1V642h-2V643h-1V642h-1V643h-1V642h-2V643h-1V642h-1V643h-1V642h-5V641h-1V643h-2V642h-3V643h-2V642h-2V643h-1V641h-1V642h-1ZM277 669h2V666h1V668h13V667h1V668h1V669h1V667h2V668h8V667h1V668h3V667h1V668h2V669h1V668h3V669h1V668h4V669h1V668h3V669h1V668h3V669h1V667h1V668h5V666h1V669h1V668h1V667h1V668h2V669h1V668h3V669h4V668h4V667h1V668h1V669h2V668h1V667h1V668h4V669h1V668h4V669h1V668h5V667h1V669h1V668h4V669h1V668h4V669h1V668h2V669h1V668h2V669h1V668h1V669h1V668h4V669h1V668h1V667h1V668h2V669h1V668h8V669h1V668h4V669h1V668h1V669h1V668h11V669h1V668h3V667h1V669h1V668h1V669h1V668h4V667h1V668h1V669h1V668h2V667h2V668h1V669h1V668h3V667h1V666h1V668h7V669h1V668h7V669h1V668h1V669h1V668h6V669h1V666h1V668h16V667h1V668h2V669h1V667h1V668h1V669h1V668h3V667h1V669h2V668h7V669h1V668h2V669h1V667h1V669h2V668h4V669h1V668h4V669h1V668h10V669h1V668h1V669h2V668h2V667h1V668h3V669h1V668h4V669h1V668h2V667h1V669h1V668h8V667h1V668h1V669h1V668h2V667h1V668h1V669h1V668h2V669h1V668h6V669h1V668h1V669h1V668h2V667h1V669h2V668h2V669h2V668h3V667h1V668h1V667h1V668h1V667h1V669h2V668h3V669h1V668h2V667h1V668h10V669h1V668h1V669h1V667h1V668h1V669h2V668h1V667h1V668h3V669h2V668h9V669h1V667h1V668h2V669h1V668h1V669h1V668h1V667h1V668h6V667h1V668h7V667h1V669h1V668h4V669h1V668h1V669h2V668h12V669h1V668h1V669h1V668h7V669h1V668h2V669h1V668h9V669h1V668h7V667h1V668h2V669h1V668h1V669h1V666h1V667h1V669h1V668h4V669h1V668h2V669h1V668h3V669h1V668h2V669h1V668h8V667h1V668h1V669h1V668h1V669h1V668h3V669h1V668h8V669h1V667h1V668h1V667h1V666h1V669h2V668h2V669h1V668h9V667h1V668h3V667h1V669h1V668h1V669h1V668h6V669h1V668h8V669h1V668h1V666h1V668h2V669h1V668h6V667h1V668h8V667h1V668h1V667h1V668h14V669h1V668h4V669h1V668h8V669h1V668h1V666h1V668h5V669h1V668h1V669h1V668h3V667h1V668h3V669h2V668h4V669h1V668h2V667h1V668h4V667h1V668h1V667h1V668h2V667h1V669h1V668h1V669h1V667h1V669h1V668h1V669h2V668h2V669h1V668h1V667h2V669h2V668h1V669h1V668h3V669h1V668h13V667h1V669h1V667h1V668h1V669h1V668h7V667h1V668h1V667h1V668h1V669h1V668h3V667h2V668h1V669h2V668h5V669h1V667h1V668h6V669h1V668h2V669h1V668h6V669h1V668h1V669h3V668h4V669h3V668h1V669h1V668h3V669h1V668h4V667h1V668h1V669h1V668h2V669h1V668h2V669h1V668h2V667h1V669h1V668h2V669h1V668h1V669h1V668h3V666h1V668h7V667h1V668h4V667h1V668h4V667h1V669h3V667h1V668h6V669h1V668h3V667h1V668h6V669h1V668h9V669h1V668h1V667h1V668h2V669h1V668h1V669h1V668h4V669h1V668h8V669h2V668h19V669h1V667h1V668h2V669h1V668h5V669h1V668h3V667h1V668h3V669h1V668h1V669h1V668h1V669h1V668h2V667h1V668h1V669h1V668h2V669h1V668h4V667h1V668h8V667h1V669h1V668h4V667h1V668h11V669h1V668h1V669h1V668h2V667h1V669h1V668h2V669h1V668h3V669h1V668h4V667h1V668h7V669h1V668h2V669h2V668h1V669h1V668h10V669h1V668h6V669h1V667h1V668h16V669h1V668h6V669h1V668h4V669h1V668h1V669h1V668h2V667h1V668h7V669h2V668h2V667h1V669h1V668h3V669h1V668h2V669h2V668h3V667h1V668h5V669h1V668h1V667h1V668h1V667h1V669h1V668h2V667h1V668h7V669h1V668h2V667h1V668h1V669h1V668h4V669h1V668h1V669h1V668h2V667h1V668h6V669h1V668h1V667h1V668h17V669h1V668h1V667h1V668h1V669h2V668h1V667h1V668h1V667h1V668h1V669h1V668h1V669h1V668h6V669h1V668h1V669h1V668h1V669h1V668h1V666h1V668h4V667h1V669h1V668h1V667h1V668h1V672h-3V673h-1V672h-3V673h-1V672h-3V673h-1V672h-1V673h-1V672h-1V673h-1V672h-6V673h-1V672h-1V673h-1V672h-1V671h-1V672h-1V671h-1V672h-1V673h-2V672h-3V673h-1V672h-5V673h-1V672h-11V671h-1V672h-1V674h-1V672h-6V671h-1V672h-2V673h-3V672h-4V673h-1V672h-4V673h-1V672h-10V675h-1V672h-2V671h-1V672h-1V673h-1V672h-9V673h-2V672h-2V673h-2V672h-2V673h-1V672h-3V674h-1V673h-1V672h-7V671h-1V672h-2V673h-3V672h-4V673h-1V672h-6V673h-2V672h-2V673h-1V672h-8V673h-1V672h-3V675h-1V673h-1V672h-4V673h-1V672h-1V673h-1V672h-10V673h-1V672h-1V673h-2V672h-2V673h-1V672h-7V671h-1V672h-4V673h-1V672h-3V673h-1V672h-2V673h-1V672h-3V673h-1V672h-1V673h-1V672h-11V671h-1V672h-2V673h-1V672h-1V673h-1V672h-6V673h-1V672h-7V673h-1V672h-2V673h-1V672h-4V673h-1V672h-1V673h-1V672h-1V673h-1V672h-3V674h-1V672h-1V674h-1V672h-1V673h-1V672h-3V673h-1V672h-1V673h-1V672h-3V673h-1V672h-19V673h-2V672h-8V673h-1V672h-4V673h-1V672h-1V673h-2V672h-1V671h-1V672h-1V673h-1V672h-1V673h-1V672h-7V673h-1V672h-6V671h-1V672h-3V673h-1V672h-6V673h-4V671h-1V672h-2V673h-1V672h-1V671h-1V672h-1V673h-1V672h-2V671h-1V672h-11V673h-1V672h-1V673h-1V672h-2V673h-1V671h-1V673h-1V672h-1V673h-1V672h-2V673h-1V672h-2V673h-1V672h-1V671h-1V672h-4V673h-1V672h-3V673h-1V672h-1V674h-2V673h-1V672h-4V673h-2V674h-1V672h-1V673h-1V672h-6V673h-1V672h-2V673h-1V672h-5V673h-1V671h-1V673h-1V672h-5V673h-2V672h-1V671h-2V672h-3V673h-1V672h-1V671h-1V672h-1V671h-1V672h-7V673h-1V672h-2V673h-1V672h-12V673h-1V672h-1V673h-1V672h-3V673h-1V672h-1V673h-2V671h-2V672h-1V673h-1V672h-1V673h-3V672h-1V673h-1V672h-1V673h-1V672h-1V673h-1V671h-1V672h-2V671h-1V672h-9V673h-1V672h-4V673h-3V672h-2V671h-1V672h-1V673h-1V672h-1V673h-1V672h-1V673h-1V672h-7V673h-1V672h-8V674h-1V672h-4V673h-1V672h-3V673h-1V672h-7V673h-1V672h-4V671h-1V672h-8V671h-1V672h-6V673h-2V672h-3V673h-1V672h-7V673h-3V672h-5V673h-1V672h-1V673h-1V672h-4V671h-1V672h-6V673h-1V672h-2V673h-1V672h-2V673h-2V672h-1V671h-1V672h-2V673h-1V672h-3V674h-1V672h-4V673h-1V672h-1V673h-1V672h-1V673h-1V672h-1V673h-1V672h-1V671h-1V674h-1V673h-1V672h-2V674h-1V672h-3V673h-1V672h-2V673h-1V672h-3V673h-1V672h-2V673h-1V672h-4V673h-1V672h-2V673h-1V672h-1V674h-1V672h-4V673h-1V672h-5V673h-1V672h-1V673h-1V672h-7V673h-1V672h-2V673h-1V672h-4V673h-1V672h-2V673h-1V672h-1V673h-1V672h-11V674h-1V673h-2V672h-1V674h-1V672h-4V673h-1V671h-1V672h-7V671h-1V672h-2V673h-1V672h-5V673h-1V672h-1V673h-2V672h-1V671h-1V673h-2V672h-3V673h-1V672h-4V673h-2V672h-5V673h-2V672h-2V673h-1V672h-1V673h-1V672h-10V671h-1V672h-1V674h-1V673h-1V672h-3V673h-2V672h-4V671h-1V672h-3V673h-2V672h-2V673h-2V672h-3V673h-1V672h-1V673h-1V672h-6V673h-1V672h-2V673h-1V672h-1V671h-1V672h-2V673h-1V672h-10V673h-1V671h-1V672h-2V674h-1V672h-4V673h-1V672h-6V673h-4V672h-10V673h-1V672h-4V673h-1V672h-4V673h-2V671h-1V673h-1V672h-2V673h-1V672h-7V673h-2V672h-3V673h-2V672h-1V671h-1V673h-2V672h-19V673h-1V672h-2V673h-1V672h-3V673h-1V672h-1V673h-1V672h-7V673h-1V672h-12V673h-1V672h-2V671h-1V672h-2V673h-1V672h-1V671h-1V672h-4V673h-1V672h-1V674h-1V673h-1V672h-3V673h-1V672h-11V673h-1V672h-1V673h-1V672h-4V673h-1V672h-8V673h-1V672h-4V673h-1V672h-4V673h-1V672h-1V673h-2V672h-1V673h-1V672h-1V673h-2V672h-4V673h-1V672h-4V673h-1V671h-1V672h-5V673h-1V672h-4V673h-1V672h-2V673h-1V672h-3V673h-2V672h-1V671h-1V672h-3V673h-5V672h-1V673h-1V672h-1V673h-1V672h-2V671h-1V672h-1V673h-1V672h-6V671h-1V673h-1V672h-3V673h-1V672h-3V673h-1V672h-4V673h-1V672h-3V673h-1V672h-6V671h-1V672h-8V671h-1V672h-1V673h-1V672h-14V673h-1V672h-1V674h-1V673h-1ZM277 698h2V696h1V698h3V699h1V697h2V698h1V699h1V698h1V699h1V698h7V699h1V698h1V697h1V698h3V696h1V698h3V697h1V699h1V698h2V699h1V698h4V699h1V698h1V697h1V698h9V699h3V698h1V697h1V698h5V699h2V698h3V697h1V698h7V697h1V699h1V698h6V699h1V698h2V699h1V698h4V699h1V698h3V699h3V698h2V699h1V697h1V698h5V699h2V698h3V699h1V698h5V697h1V698h2V697h1V698h3V699h2V698h1V697h1V699h1V698h1V699h1V698h2V697h1V698h6V699h1V698h7V699h1V698h3V697h1V698h4V697h1V699h1V698h2V697h1V699h2V698h2V697h1V698h1V697h2V698h9V699h1V698h7V697h1V698h1V699h2V698h1V699h1V698h2V699h1V698h4V699h2V698h1V699h1V698h2V699h1V697h1V698h3V699h2V698h4V697h1V698h5V696h1V698h7V699h1V697h1V696h1V699h1V698h2V696h1V698h2V699h1V698h2V699h1V698h9V699h1V698h2V699h1V698h2V697h1V698h2V697h1V698h1V697h1V699h1V698h1V697h1V698h2V697h1V698h2V699h1V698h1V699h1V697h1V698h2V699h2V698h4V699h1V698h9V699h1V698h3V699h1V698h5V699h1V697h1V698h17V699h1V698h4V699h3V698h2V699h1V698h3V699h1V698h5V699h1V698h7V697h1V698h2V697h1V698h1V696h1V699h1V698h5V697h1V698h2V699h1V698h1V697h1V698h5V699h1V698h1V699h1V698h2V699h1V698h12V697h1V698h3V697h1V698h1V699h1V698h5V699h1V698h6V699h1V698h2V699h1V698h9V699h2V697h1V698h9V699h1V698h5V699h1V698h3V699h1V697h1V698h2V697h1V698h1V697h1V698h5V699h1V698h1V699h1V695h1V698h2V699h1V697h1V698h1V697h1V698h6V697h1V698h2V697h1V699h1V698h3V699h1V698h6V699h1V698h1V699h2V698h2V699h1V698h1V697h1V698h9V699h1V697h2V698h6V699h1V698h4V699h3V698h4V697h2V696h1V698h2V697h2V699h1V698h2V699h3V698h5V697h1V698h1V699h1V698h5V699h1V698h5V699h1V698h5V697h1V698h2V697h2V698h2V697h1V699h1V698h1V697h1V698h3V696h1V698h1V699h1V698h5V699h1V698h6V699h1V698h1V697h1V698h4V697h1V699h1V698h6V699h1V698h1V699h1V698h3V699h1V698h6V699h1V698h3V699h1V698h3V699h1V698h2V699h1V698h1V697h1V698h5V699h1V697h1V698h1V699h1V698h1V699h1V697h1V698h4V699h1V697h1V698h5V699h1V698h1V699h1V698h9V699h1V698h3V697h1V698h5V697h1V699h1V697h2V698h1V699h1V697h1V698h5V699h1V698h3V699h1V698h2V699h1V698h4V697h1V698h2V697h1V698h5V699h1V698h7V697h1V698h1V697h1V698h2V699h3V698h7V699h1V698h2V697h1V698h4V699h1V698h2V697h1V698h2V697h1V698h2V699h1V698h2V699h1V698h2V697h1V698h1V697h1V698h12V697h1V699h1V698h3V696h1V698h3V699h1V698h2V699h1V698h3V699h2V698h1V699h1V698h1V697h1V698h3V699h1V698h4V699h1V697h1V699h1V698h5V697h2V698h5V699h1V698h2V699h1V698h4V697h1V698h3V699h1V698h3V697h1V698h1V699h2V698h1V697h1V699h1V698h4V699h1V698h14V699h1V698h1V699h1V698h1V697h1V698h4V699h1V698h5V699h1V698h6V699h1V698h3V699h2V697h1V699h1V698h5V697h1V699h1V697h1V698h2V699h1V698h3V697h1V699h1V698h10V699h1V698h4V696h1V698h4V699h1V698h2V699h2V698h4V699h1V698h2V697h2V698h5V697h1V698h7V697h1V698h8V697h1V698h3V699h1V698h2V699h2V698h2V699h2V698h8V699h3V698h3V699h1V698h1V699h1V698h4V699h1V698h4V697h1V698h5V699h2V697h1V698h4V699h1V698h1V696h1V698h1V697h1V699h2V698h3V699h3V698h1V699h1V698h2V696h1V698h3V697h1V699h1V698h1V699h1V698h7V699h1V698h5V699h2V698h3V697h1V698h1V697h1V698h8V697h1V698h1V699h1V698h2V699h1V698h14V699h2V698h7V697h1V698h1V699h1V697h1V698h1V697h2V699h1V698h3V699h1V697h1V698h3V699h1V698h5V697h1V698h1V702h-1V701h-1V702h-5V703h-1V702h-4V703h-1V702h-3V703h-1V702h-4V703h-1V702h-9V703h-2V702h-2V703h-1V702h-1V703h-1V702h-9V704h-2V702h-1V703h-1V702h-1V701h-1V702h-8V701h-1V703h-1V702h-4V703h-2V702h-5V703h-1V702h-4V703h-2V702h-1V703h-1V702h-1V703h-1V701h-1V702h-6V703h-1V702h-1V703h-3V702h-3V703h-2V702h-4V703h-1V702h-4V701h-1V703h-2V702h-2V703h-1V702h-2V701h-1V702h-3V703h-2V702h-4V703h-1V702h-1V703h-1V702h-3V703h-3V702h-6V704h-1V702h-1V703h-2V702h-2V703h-2V702h-2V703h-1V702h-12V701h-1V702h-5V703h-1V702h-8V701h-1V702h-2V703h-1V702h-2V703h-5V702h-1V703h-2V702h-8V703h-3V702h-6V704h-1V702h-1V703h-1V701h-1V702h-3V703h-1V702h-2V701h-1V703h-1V702h-6V703h-1V701h-1V704h-1V703h-1V702h-3V703h-1V702h-6V703h-1V702h-5V703h-1V702h-6V703h-3V702h-5V703h-1V702h-8V703h-1V702h-4V703h-1V702h-2V704h-1V703h-1V702h-1V701h-1V702h-1V703h-1V702h-1V703h-1V702h-3V701h-1V702h-4V703h-1V702h-2V703h-1V702h-5V701h-2V702h-5V703h-1V701h-1V703h-1V702h-4V703h-1V702h-3V701h-1V702h-1V703h-1V702h-1V703h-2V702h-3V703h-1V702h-2V703h-1V702h-3V703h-1V702h-3V703h-1V702h-2V703h-1V702h-10V701h-1V702h-4V703h-1V702h-2V703h-1V702h-1V703h-1V701h-1V702h-2V701h-1V702h-2V704h-1V702h-4V701h-1V702h-2V703h-1V702h-7V703h-3V702h-4V701h-1V702h-7V703h-1V702h-3V703h-1V702h-2V703h-1V702h-1V701h-1V702h-4V703h-1V702h-1V703h-2V702h-3V703h-1V702h-1V703h-1V702h-4V703h-1V702h-2V703h-2V701h-1V702h-3V703h-1V702h-1V701h-1V702h-3V703h-1V702h-9V703h-1V702h-1V703h-1V702h-5V701h-1V703h-2V702h-3V701h-1V703h-1V702h-1V703h-1V702h-1V701h-1V704h-1V702h-3V703h-2V702h-2V703h-1V702h-2V703h-1V702h-3V703h-1V702h-3V703h-1V702h-3V703h-1V702h-2V703h-1V702h-3V703h-1V702h-1V703h-1V702h-6V703h-1V702h-7V703h-1V702h-2V703h-2V702h-1V703h-2V702h-5V703h-1V702h-5V701h-1V704h-1V703h-1V701h-1V702h-2V701h-2V702h-8V703h-1V702h-5V703h-1V702h-5V704h-1V702h-1V703h-1V702h-5V703h-3V702h-2V703h-1V701h-1V702h-3V701h-2V702h-2V703h-1V702h-2V703h-1V705h-1V703h-1V702h-4V703h-1V702h-2V703h-1V702h-4V701h-1V703h-1V702h-10V703h-2V702h-2V703h-2V702h-1V703h-1V702h-4V703h-1V702h-1V703h-1V702h-3V703h-1V701h-1V702h-12V703h-1V702h-2V701h-1V704h-1V702h-1V703h-1V702h-5V701h-1V702h-5V703h-1V702h-3V703h-1V702h-5V703h-1V702h-9V701h-1V703h-2V702h-6V703h-1V702h-2V704h-1V703h-1V702h-1V703h-2V702h-5V703h-1V702h-5V703h-1V702h-1V701h-1V702h-3V701h-1V702h-5V703h-1V702h-6V703h-1V702h-2V703h-1V702h-1V703h-1V702h-5V701h-1V702h-1V703h-1V702h-2V701h-1V703h-1V702h-4V703h-1V702h-2V701h-1V702h-10V703h-1V702h-5V703h-1V702h-3V703h-1V702h-2V703h-3V702h-4V703h-1V702h-9V703h-1V702h-7V701h-1V703h-2V702h-4V703h-1V702h-3V703h-1V702h-3V703h-1V702h-5V703h-1V702h-4V703h-2V702h-1V703h-1V701h-1V703h-1V702h-1V703h-1V702h-2V701h-1V702h-1V703h-1V702h-2V703h-1V701h-1V702h-4V701h-1V702h-2V703h-1V702h-2V703h-1V702h-9V703h-1V702h-2V703h-2V702h-1V701h-1V702h-2V703h-1V702h-1V701h-1V703h-1V702h-5V703h-1V702h-7V701h-1V702h-4V704h-1V703h-1V702h-3V701h-1V703h-1V702h-2V703h-1V702h-1V703h-2V702h-3V703h-3V702h-1V703h-1V702h-1V703h-2V702h-9V703h-1V702h-7V703h-1V702h-1V701h-2V702h-1V701h-1V702h-2V703h-2V701h-1V703h-1V702h-1V703h-2V702h-5V703h-1V702h-2V703h-1V702h-3V703h-1V702h-3V703h-1V702h-6V701h-1V702h-2V703h-1V702h-1V703h-1V702h-2V703h-1V705h-1V702h-3V701h-1V702h-8V703h-1V702h-1V703h-1V702h-1V703h-2V702h-5V701h-1V704h-1V702h-2V703h-3V702h-3V703h-1V702h-4V703h-1V702h-2V703h-1V702h-3V703h-1V702h-2V703h-1V702h-4V704h-1V702h-2V703h-1V701h-1V702h-2V703h-3V702h-5V701h-1V702h-1V703h-3V702h-1V703h-1V702h-8V704h-1V703h-1V702h-4V703h-2V702h-1V703h-1V702h-8V701h-1V702h-1V703h-1V702h-7V703h-1V702h-1V703h-1V702h-1V701h-1V702h-1V703h-1V702h-6ZM277 729h4V730h1V729h6V728h1V729h1V730h1V729h1V728h1V730h1V729h4V730h1V729h1V730h1V729h1V728h1V729h1V730h1V729h3V730h1V729h1V730h1V727h1V729h3V730h1V729h1V727h1V730h1V728h1V729h1V730h1V729h1V730h1V729h1V728h1V730h1V729h3V728h1V729h5V728h1V729h2V730h1V729h2V728h1V729h2V728h1V729h1V730h1V729h1V728h1V729h4V730h1V729h1V728h2V729h1V730h1V728h1V729h2V730h2V729h1V730h1V729h4V728h2V729h1V727h1V729h6V730h1V728h2V729h1V728h1V729h6V728h1V729h2V730h1V729h2V730h1V729h3V730h1V729h2V730h1V729h10V728h1V730h1V729h1V728h1V730h1V729h1V730h2V729h1V728h1V729h3V730h1V729h4V728h2V729h3V730h1V729h1V730h1V727h1V728h2V729h3V727h1V729h2V728h1V730h1V729h2V730h1V727h1V728h2V730h1V729h2V730h1V729h4V730h1V729h5V728h1V729h2V730h1V729h2V730h1V729h1V730h2V729h4V728h1V729h8V730h1V729h1V730h2V728h1V729h7V730h1V729h4V730h1V729h1V728h1V729h1V730h1V729h11V730h1V729h1V730h1V729h2V730h1V729h1V728h1V729h8V728h1V729h5V730h1V728h1V729h13V730h3V729h2V730h1V729h6V728h1V729h1V728h1V729h9V730h1V729h5V730h1V729h2V730h1V729h2V730h1V729h6V728h2V729h1V730h3V729h3V728h1V729h10V730h1V729h4V728h1V729h7V728h1V729h2V728h1V730h1V729h3V730h1V729h4V728h1V729h6V728h1V729h5V728h1V729h2V730h1V729h5V730h1V728h1V730h2V729h2V728h1V729h3V730h1V727h1V730h1V729h2V730h2V729h2V730h1V729h6V727h1V730h1V729h1V730h1V728h1V729h1V728h1V729h1V730h1V729h6V730h1V729h3V728h1V729h1V730h2V729h1V728h1V729h4V730h1V728h1V729h1V730h1V729h2V730h1V729h10V730h1V729h4V728h1V729h2V728h1V729h1V730h1V729h4V728h1V729h1V730h1V729h2V730h1V728h1V730h1V729h3V728h1V729h8V730h3V729h1V730h1V729h2V728h1V729h8V728h1V729h4V730h1V729h6V728h1V730h1V729h5V730h2V729h2V730h1V729h4V730h1V728h1V729h2V730h1V729h1V730h2V729h3V730h1V729h1V730h2V729h2V728h1V729h3V730h2V729h2V730h1V729h1V728h1V729h3V730h1V729h1V728h1V729h2V730h1V729h1V730h1V729h1V730h1V728h2V729h1V728h2V729h5V730h1V729h2V728h1V729h1V730h1V729h5V730h1V729h3V728h2V730h1V729h3V730h1V729h12V728h1V729h3V730h1V729h5V730h1V729h1V728h1V729h3V730h2V729h7V728h1V729h1V730h1V729h6V728h1V729h6V728h2V730h1V729h1V730h2V728h1V729h1V728h1V729h1V728h1V729h2V728h1V729h7V728h1V729h2V728h1V729h2V730h1V729h1V730h1V729h5V728h1V730h1V729h4V730h1V729h1V730h1V729h1V730h1V729h5V730h2V729h3V727h1V729h2V728h1V729h1V728h1V729h6V730h1V729h2V728h1V729h5V730h1V729h1V730h1V728h2V729h2V730h1V729h1V728h1V729h6V728h1V729h3V730h1V729h3V730h1V728h1V730h1V729h1V730h2V728h1V729h1V730h1V729h9V727h1V729h2V730h1V728h1V729h1V730h2V729h3V730h1V729h2V728h1V729h7V728h1V729h1V730h1V729h1V730h1V728h1V729h2V730h2V729h4V730h1V729h1V728h1V729h3V730h1V729h3V730h1V729h1V728h1V730h1V729h3V728h1V730h1V729h2V730h1V727h1V730h1V729h1V728h2V729h2V728h1V730h1V728h1V730h1V729h2V727h1V730h1V729h4V730h1V729h2V728h2V729h2V730h1V729h12V730h1V729h2V730h1V729h2V728h1V730h2V728h1V730h1V729h3V730h1V728h1V729h1V730h2V729h1V730h1V729h1V728h1V729h4V730h1V729h4V728h1V730h1V729h5V728h2V729h1V728h2V729h1V730h1V729h5V730h1V729h2V728h1V729h4V730h1V729h1V730h1V729h1V727h1V729h4V730h3V727h1V728h1V729h1V730h2V728h1V729h1V730h1V729h1V727h1V729h2V730h1V728h1V729h1V728h1V729h1V730h1V729h3V728h1V730h1V729h2V730h1V729h2V728h1V730h1V729h1V730h1V729h6V730h1V729h1V728h1V730h1V729h9V730h1V729h1V730h1V729h1V730h1V727h1V730h1V729h1V730h1V729h3V730h1V728h1V729h4V728h1V729h1V728h1V729h1V730h1V729h2V727h1V729h4V728h1V730h1V729h2V730h1V729h9V728h1V729h2V730h1V729h4V727h1V729h2V728h1V729h6V728h1V730h1V729h3V730h2V729h4V730h1V728h1V727h1V729h2V728h1V729h1V728h2V729h3V728h1V729h1V728h1V729h5V728h1V729h2V728h1V729h3V728h1V729h4V730h1V729h2V728h1V730h1V734h-1V732h-1V733h-1V734h-2V733h-7V734h-1V732h-1V733h-2V732h-1V733h-2V734h-1V733h-2V732h-1V733h-4V734h-1V733h-1V732h-1V733h-1V734h-1V733h-3V732h-1V735h-2V733h-3V735h-1V734h-1V733h-3V734h-1V732h-1V733h-6V732h-1V735h-1V733h-2V736h-1V733h-3V734h-1V733h-2V732h-1V733h-3V734h-1V733h-2V734h-1V733h-2V734h-1V733h-2V734h-1V732h-1V733h-7V734h-1V733h-3V734h-1V733h-5V734h-1V733h-3V734h-3V733h-1V735h-1V733h-1V734h-1V733h-1V734h-1V733h-5V734h-1V733h-3V734h-1V732h-1V733h-1V734h-1V733h-6V734h-1V733h-1V735h-1V732h-1V733h-2V734h-1V733h-2V734h-1V733h-4V734h-2V733h-3V734h-1V733h-2V734h-1V733h-1V734h-1V733h-2V734h-2V733h-1V732h-2V734h-4V735h-1V733h-1V734h-1V733h-2V734h-1V733h-1V734h-1V733h-7V735h-1V733h-5V734h-1V733h-2V732h-1V733h-1V732h-1V733h-6V734h-1V732h-1V733h-4V734h-1V733h-1V734h-2V733h-3V734h-1V733h-1V734h-2V733h-1V732h-1V734h-1V733h-3V734h-1V735h-1V734h-2V733h-3V734h-1V733h-2V734h-1V733h-11V734h-1V735h-1V733h-3V732h-1V733h-2V734h-1V733h-4V734h-1V732h-1V733h-2V734h-1V732h-1V735h-1V732h-1V733h-1V734h-1V733h-1V732h-1V733h-1V734h-1V733h-1V734h-1V733h-2V734h-2V735h-1V733h-2V734h-1V733h-2V734h-1V733h-2V734h-1V735h-1V733h-5V734h-1V733h-4V734h-1V735h-1V733h-2V732h-1V734h-1V733h-1V735h-1V733h-1V732h-1V733h-1V735h-1V733h-5V732h-1V733h-2V734h-1V733h-3V734h-1V736h-1V733h-1V732h-1V734h-1V733h-12V734h-1V733h-2V735h-1V734h-1V733h-1V734h-1V733h-1V734h-1V733h-3V734h-1V733h-6V734h-1V733h-5V734h-3V733h-2V734h-1V733h-1V734h-1V733h-5V734h-1V733h-2V734h-1V733h-5V735h-1V732h-1V733h-1V732h-1V733h-2V734h-2V733h-2V735h-1V734h-1V733h-5V734h-1V733h-1V734h-1V733h-1V736h-1V734h-1V733h-1V734h-1V733h-1V735h-1V734h-1V733h-5V734h-1V733h-1V734h-2V733h-3V735h-1V732h-1V733h-5V734h-1V733h-1V732h-1V733h-2V732h-1V733h-1V735h-1V733h-2V734h-2V733h-1V734h-1V732h-2V733h-4V734h-2V733h-2V735h-1V733h-3V734h-1V735h-1V733h-1V734h-1V733h-2V734h-1V733h-1V735h-1V733h-2V734h-2V733h-5V734h-1V733h-3V734h-1V733h-1V734h-1V733h-3V732h-1V733h-11V734h-2V733h-3V734h-1V733h-1V732h-1V733h-3V734h-1V733h-2V734h-1V733h-1V734h-3V733h-3V736h-1V733h-6V732h-1V733h-2V732h-1V734h-1V733h-1V734h-1V733h-1V736h-1V733h-4V734h-1V733h-5V734h-1V733h-2V734h-2V733h-3V732h-1V733h-2V736h-1V734h-1V733h-1V734h-1V733h-1V734h-1V733h-1V734h-2V733h-1V734h-1V733h-3V734h-1V733h-4V734h-2V733h-1V734h-2V733h-5V734h-1V733h-1V734h-1V733h-5V734h-1V733h-12V734h-1V732h-1V733h-1V734h-1V736h-1V734h-4V733h-12V734h-1V733h-1V734h-1V733h-2V734h-1V733h-6V734h-2V733h-2V734h-3V733h-1V734h-3V733h-10V735h-1V733h-2V734h-1V733h-2V735h-1V733h-3V734h-1V732h-1V733h-1V734h-2V733h-5V734h-1V733h-6V734h-1V733h-1V732h-1V733h-1V732h-1V734h-1V733h-1V734h-1V733h-7V734h-1V733h-2V734h-2V733h-2V734h-1V733h-1V735h-1V733h-3V732h-1V733h-2V734h-2V732h-1V735h-1V733h-5V734h-1V733h-1V734h-1V733h-1V734h-1V733h-9V735h-1V733h-6V734h-1V733h-3V734h-1V733h-1V735h-1V733h-1V734h-1V733h-1V734h-1V733h-1V734h-1V733h-3V732h-1V735h-1V733h-1V734h-1V733h-1V734h-1V733h-10V732h-1V733h-3V734h-2V735h-1V733h-1V732h-1V735h-1V733h-1V735h-1V733h-4V734h-1V733h-2V734h-1V733h-2V734h-1V735h-1V733h-2V734h-1V733h-1V734h-1V733h-2V734h-1V733h-9V735h-1V733h-5V734h-1V733h-2V734h-3V733h-1V734h-2V733h-5V734h-2V736h-1V733h-3V734h-1V735h-1V733h-6V734h-1V733h-3V734h-1V733h-4V734h-1V733h-2V734h-1V733h-1V734h-1V733h-6V734h-1V733h-4V734h-1V733h-1V732h-1V733h-1V734h-1V733h-4V734h-1V733h-8V734h-2V733h-1V734h-1V733h-9V734h-1V733h-3V734h-2V733h-1V734h-1V733h-2V734h-3V733h-6V734h-1V733h-4V734h-1V733h-2V734h-1V732h-3V734h-1V735h-1V733h-1V734h-1V732h-1V733h-3V734h-1V733h-4V734h-2V733h-1V734h-1V733h-9V734h-1V733h-3V732h-1V733h-1V735h-1V734h-1V733h-1V734h-1V733h-2V734h-1V733h-3V734h-1V733h-1V734h-1V733h-1V734h-1V733h-3V734h-1V733h-2V734h-1V733h-3V734h-2V733h-1V734h-1V733h-11V734h-1V732h-1V734h-1V733h-6V732h-1V733h-7V734h-1V733h-1V734h-2V733h-2V732h-1V734h-1V733h-1V732h-2V734h-2V733h-1V734h-1V733h-2V735h-1V733h-1V734h-1V733h-3V734h-1V733h-3V734h-2V733h-1V732h-1V733h-5V732h-1V733h-3V735h-1V732h-1V733h-1V734h-3V733h-1V732h-1V734h-1V733h-1V734h-2V733h-4V734h-1V733h-1V734h-1V733h-3V734h-1V733h-1V734h-1V733h-1V734h-1V733h-1V734h-1V733h-4V735h-1V734h-1V735h-1V734h-1V733h-2V734h-3V733h-3V734h-1V733h-2V734h-1V733h-1ZM277 760h2V759h5V760h2V759h1V760h1V759h1V758h2V759h4V758h1V759h6V758h1V759h3V758h1V759h3V760h2V759h1V760h1V759h2V760h1V759h3V758h2V759h5V760h1V759h1V760h1V759h6V760h2V758h1V759h1V760h1V759h1V760h1V759h4V758h1V759h3V758h1V759h9V760h1V759h3V760h1V758h1V759h2V758h1V759h3V760h2V759h10V758h1V759h2V760h2V759h4V760h2V759h6V760h1V759h1V760h1V759h10V760h1V758h1V759h1V760h1V759h4V760h1V759h2V760h1V759h3V758h1V759h4V758h1V759h3V758h1V759h4V760h1V759h3V760h1V759h1V760h1V759h5V760h1V759h3V760h1V759h6V757h1V758h1V759h2V760h1V759h1V760h1V759h5V760h2V759h6V760h2V759h11V760h2V759h4V760h1V759h1V758h1V759h2V757h1V760h1V759h5V760h1V759h1V760h2V759h4V758h1V760h1V759h1V760h1V759h2V760h2V759h2V758h2V759h3V760h1V758h1V759h2V758h1V759h2V760h1V757h1V759h1V758h1V760h1V758h1V759h5V757h1V758h1V759h13V760h1V759h3V758h1V759h3V760h1V759h4V760h1V759h10V760h2V759h8V758h1V760h1V759h1V758h1V759h3V758h1V759h8V760h1V759h2V758h1V760h2V759h1V760h1V759h4V758h1V759h4V760h1V758h2V759h4V760h1V759h9V760h1V759h3V758h1V759h10V760h1V759h5V760h1V759h3V758h1V759h1V760h1V759h3V758h1V760h2V759h7V758h1V759h1V758h1V757h1V760h1V759h2V757h1V760h1V759h13V757h1V758h1V759h1V760h1V759h3V758h1V759h1V758h1V759h6V760h1V759h4V758h1V760h1V759h1V760h1V759h2V758h1V759h2V757h1V759h2V760h1V758h2V760h2V759h2V760h1V759h1V760h1V759h3V758h1V759h3V760h2V759h2V760h1V759h9V760h1V759h1V760h1V759h3V760h1V758h1V759h1V760h1V758h1V759h1V760h1V759h1V758h1V759h3V758h1V759h4V760h1V759h2V758h1V759h2V760h1V759h1V758h1V759h7V760h1V759h2V757h1V759h1V758h1V759h3V760h1V759h7V760h1V759h2V760h1V759h7V758h1V759h2V760h1V758h1V759h4V760h1V758h1V759h8V760h2V759h4V758h1V759h2V758h1V759h7V760h1V759h3V760h2V759h2V760h1V758h1V759h1V760h2V759h4V760h1V759h2V760h1V759h8V758h2V759h7V758h1V760h1V759h1V758h1V759h3V760h1V759h1V760h2V759h5V760h1V759h1V758h1V760h1V759h6V760h1V759h4V760h1V759h2V760h1V759h2V760h2V759h5V760h1V759h9V760h1V759h2V758h1V759h1V760h1V759h3V758h1V759h5V760h1V759h4V758h1V759h1V758h1V760h1V759h5V758h1V759h9V758h1V759h6V760h1V759h1V760h2V759h2V760h1V759h1V760h1V759h1V760h1V759h2V758h2V759h2V758h1V759h4V760h1V759h5V760h1V759h1V758h1V759h11V760h1V759h2V758h1V759h6V760h1V759h1V758h1V759h1V760h1V758h1V759h10V760h2V759h6V760h1V759h6V757h1V759h4V757h1V759h3V760h1V758h1V759h7V758h1V759h1V760h1V759h4V760h1V759h4V760h1V759h2V760h1V759h2V760h1V758h1V760h1V759h2V760h1V759h6V760h2V759h1V758h1V759h1V758h1V759h4V758h1V759h2V758h1V760h1V759h3V758h1V759h5V758h1V759h1V758h1V759h7V758h1V759h3V758h1V759h1V760h1V759h2V758h1V759h2V760h1V759h2V760h2V759h1V760h1V759h1V760h1V759h5V760h1V759h1V758h1V759h3V758h3V759h3V758h1V759h1V760h1V759h1V760h1V759h1V758h3V760h1V759h9V758h1V759h5V760h2V759h1V760h1V759h1V758h1V760h1V759h4V760h1V759h5V758h1V759h4V760h1V759h2V760h2V758h1V759h1V760h1V759h5V760h1V758h1V759h2V760h1V759h5V760h1V759h2V760h2V759h2V758h1V759h1V757h1V759h3V758h1V759h3V758h1V759h1V758h1V759h1V760h1V759h2V760h1V758h1V760h1V759h5V760h3V759h2V760h1V759h3V760h1V759h5V757h1V759h3V758h1V759h7V758h1V757h1V759h2V760h1V759h2V758h1V760h1V759h3V758h1V759h3V760h2V759h2V760h3V758h1V759h2V760h1V759h1V758h1V759h1V757h1V759h9V758h1V759h3V763h-3V762h-1V764h-1V763h-10V762h-1V763h-1V764h-1V763h-1V764h-1V762h-1V764h-2V765h-1V763h-2V764h-2V763h-3V762h-1V763h-2V765h-1V764h-1V762h-1V763h-2V764h-1V763h-11V762h-1V763h-9V764h-1V763h-1V764h-1V763h-1V764h-1V763h-2V764h-3V763h-3V764h-3V762h-1V764h-1V763h-2V764h-1V763h-16V764h-1V765h-1V763h-2V764h-1V763h-5V764h-2V763h-1V762h-1V764h-1V763h-5V764h-1V763h-1V762h-1V764h-1V766h-1V764h-1V763h-1V764h-1V763h-4V762h-1V763h-5V764h-1V763h-4V764h-1V763h-2V764h-1V763h-1V764h-2V763h-5V762h-1V763h-9V764h-1V762h-1V763h-3V764h-1V763h-1V764h-1V763h-5V762h-3V763h-3V762h-1V763h-1V764h-1V763h-5V764h-1V763h-1V765h-1V763h-1V764h-2V763h-2V764h-1V763h-2V764h-1V763h-2V765h-1V763h-1V762h-1V763h-3V764h-1V763h-3V764h-1V763h-11V762h-1V763h-3V764h-1V763h-3V762h-1V763h-4V762h-1V763h-1V762h-1V763h-1V764h-2V763h-6V764h-1V763h-2V764h-1V763h-1V764h-1V763h-2V764h-2V763h-1V764h-1V763h-4V764h-1V763h-4V764h-1V763h-1V762h-1V763h-7V762h-1V764h-1V763h-15V764h-1V763h-4V764h-1V763h-1V764h-2V763h-10V762h-1V764h-1V763h-3V764h-1V763h-9V764h-1V763h-11V762h-1V763h-1V764h-2V763h-3V764h-3V763h-2V764h-1V763h-1V764h-1V763h-1V762h-2V763h-2V764h-1V763h-1V764h-1V763h-1V764h-1V763h-2V764h-2V763h-1V764h-1V763h-4V764h-1V763h-1V762h-1V763h-15V764h-1V762h-1V763h-1V762h-1V764h-1V763h-3V764h-1V763h-5V764h-1V763h-3V764h-1V763h-4V764h-1V763h-9V764h-2V763h-4V764h-2V763h-2V764h-1V763h-2V764h-1V763h-4V764h-1V763h-1V764h-1V763h-4V764h-1V763h-2V764h-1V763h-5V764h-2V763h-1V764h-1V763h-5V764h-1V763h-9V762h-1V763h-3V764h-1V763h-4V764h-1V763h-2V764h-1V763h-4V764h-2V763h-1V762h-1V764h-1V763h-2V764h-2V763h-3V764h-2V763h-6V762h-1V763h-2V762h-1V763h-3V764h-3V763h-7V765h-1V763h-1V764h-1V763h-4V762h-1V764h-1V763h-3V764h-1V763h-6V764h-1V763h-2V764h-1V763h-5V764h-1V763h-1V764h-1V763h-1V764h-1V763h-1V762h-1V763h-1V762h-1V763h-2V764h-1V763h-9V764h-1V763h-2V764h-1V763h-2V764h-1V763h-4V762h-1V764h-1V763h-1V764h-1V763h-2V764h-1V763h-1V762h-1V764h-1V763h-2V764h-1V763h-3V764h-1V763h-1V764h-1V763h-9V764h-1V763h-2V764h-2V763h-3V764h-1V763h-3V764h-1V763h-1V765h-1V764h-1V763h-1V764h-2V762h-1V763h-1V764h-1V763h-2V762h-1V763h-1V764h-1V763h-3V764h-1V763h-1V764h-1V762h-1V764h-1V763h-1V764h-1V763h-1V765h-1V763h-6V762h-1V763h-1V762h-1V763h-2V764h-2V763h-1V762h-1V763h-8V764h-1V763h-5V764h-1V762h-1V763h-1V764h-2V763h-1V762h-1V763h-1V762h-1V763h-3V764h-1V763h-3V764h-2V762h-1V763h-3V764h-1V763h-1V762h-1V763h-2V764h-2V763h-5V764h-1V763h-3V764h-1V763h-6V762h-1V763h-3V764h-1V763h-9V764h-1V763h-5V762h-1V764h-2V763h-3V762h-1V763h-4V765h-1V763h-1V764h-2V763h-3V764h-1V763h-2V764h-1V763h-9V762h-1V763h-1V764h-1V763h-6V764h-1V763h-2V764h-2V763h-10V764h-1V763h-4V764h-1V763h-3V762h-1V763h-3V764h-1V763h-8V764h-2V763h-10V762h-1V764h-1V763h-3V764h-1V763h-3V764h-1V763h-1V762h-1V764h-1V763h-3V762h-2V763h-2V764h-2V763h-2V764h-1V763h-1V764h-1V762h-1V763h-4V764h-2V763h-1V764h-1V763h-3V764h-1V763h-1V764h-1V762h-1V763h-4V764h-1V763h-4V764h-2V763h-11V764h-2V763h-4V764h-1V763h-1V764h-2V763h-5V764h-1V763h-1V765h-1V763h-10V764h-1V763h-3V765h-1V763h-5V764h-1V763h-1V764h-1V763h-3V764h-1V763h-4V762h-1V763h-3V762h-1V763h-4V762h-1V763h-3V764h-1V763h-2V764h-1V763h-4V764h-1V763h-1V762h-1V764h-2V763h-3V764h-1V763h-2V764h-1V763h-2V764h-1V763h-1V765h-1V763h-6V764h-1V765h-1V763h-4V764h-2V763h-2V762h-1V763h-10V764h-3V763h-5V762h-1V764h-1V763h-3V764h-1V765h-1V763h-8V762h-1V763h-8V764h-1V763h-1V764h-2V762h-1V764h-2V763h-6V764h-1V763h-1V764h-1V763h-1V764h-1V763h-3V762h-2V763h-3V764h-1V763h-2V764h-1V763h-1V764h-2V763h-3V762h-1V763h-4V765h-1V763h-2V765h-1V763h-5V764h-2V762h-1V763h-2V764h-1V763h-1V764h-2V763h-4V765h-1V764h-2ZM277 789h7V790h1V789h6V788h1V789h1V790h1V789h2V788h2V790h2V788h1V789h2V790h2V789h3V788h1V789h5V790h2V789h2V790h1V789h1V790h3V789h1V788h2V789h4V788h1V789h1V790h1V789h1V790h1V789h2V790h1V789h2V787h1V788h1V789h1V788h1V789h6V790h1V788h1V789h2V788h1V789h1V788h1V789h1V790h2V789h2V788h2V790h1V789h4V790h1V789h3V788h1V789h3V790h2V789h1V790h1V788h1V790h1V789h3V787h1V789h2V790h1V788h2V789h2V790h1V789h2V788h1V789h3V787h1V789h1V788h2V789h6V790h1V788h1V789h1V790h1V789h2V790h1V789h1V788h1V789h1V790h1V789h4V790h1V789h3V790h1V789h3V790h1V789h1V788h1V789h2V788h1V789h1V790h1V789h3V788h1V789h10V788h1V789h6V787h1V789h3V788h1V789h5V788h1V789h1V790h4V789h9V787h1V789h1V788h1V789h1V790h1V789h2V790h2V789h3V788h1V790h1V788h1V789h1V788h1V789h12V788h1V790h1V789h3V788h1V789h12V790h1V789h1V787h1V788h1V790h1V789h1V788h1V789h4V788h1V789h1V788h1V790h1V789h4V790h2V789h4V790h1V788h1V789h4V790h1V789h9V788h1V790h1V787h1V789h3V790h1V788h1V789h1V790h1V789h3V790h1V789h7V786h1V789h5V788h1V790h1V789h2V786h1V790h1V788h1V789h3V788h1V789h3V788h1V790h1V787h1V788h2V790h2V789h3V788h1V789h1V788h1V790h1V789h5V788h1V789h1V790h1V789h6V790h1V789h10V788h1V790h1V789h9V788h2V789h2V788h1V790h3V789h4V790h1V788h1V789h1V788h1V790h1V789h3V790h2V789h2V790h1V788h1V789h1V790h1V789h3V790h1V789h6V790h3V789h1V790h1V789h4V788h2V789h12V788h1V790h1V788h1V789h2V788h1V789h9V790h1V789h2V787h1V789h4V790h1V787h1V789h9V788h1V789h1V788h1V789h1V790h1V789h2V790h1V789h3V788h1V789h1V790h1V788h1V789h2V788h2V789h3V788h1V789h7V790h1V789h13V788h2V790h1V789h2V790h1V789h2V790h1V789h12V788h1V789h3V790h1V789h2V790h1V789h1V788h1V789h3V790h2V788h1V789h2V788h1V789h8V790h1V789h5V790h1V789h1V790h1V789h12V788h1V790h1V789h3V788h1V790h1V788h2V789h1V790h2V787h1V789h2V790h1V788h1V789h3V788h1V789h3V788h1V789h2V790h1V789h1V790h1V788h1V789h1V788h2V789h10V790h1V788h2V790h1V789h2V790h1V789h2V788h1V790h1V788h1V789h1V787h1V789h1V790h1V789h4V788h1V790h1V789h9V788h1V789h1V788h1V789h1V790h1V789h1V788h2V789h1V788h1V789h9V790h2V788h3V789h5V790h1V789h1V788h1V789h3V790h1V789h6V786h1V789h5V788h1V789h4V790h1V789h2V788h1V789h3V788h1V789h2V788h1V789h2V788h1V789h5V790h1V788h1V789h1V790h1V789h1V787h1V789h2V788h1V789h1V788h1V790h2V788h2V789h1V788h1V789h6V790h2V789h6V790h1V788h1V789h5V790h1V789h1V788h1V790h1V789h1V787h1V789h3V790h2V788h1V790h1V789h2V790h1V789h1V790h1V789h1V790h1V788h1V790h1V789h4V790h1V789h4V790h1V788h1V789h1V790h2V789h2V790h1V789h1V790h1V789h5V788h1V789h6V790h1V788h1V789h3V788h1V789h9V790h1V789h5V790h1V788h1V789h3V788h1V789h2V788h1V789h1V788h2V789h2V788h2V789h8V790h2V789h3V790h1V789h2V787h1V789h1V787h1V789h1V790h1V789h2V790h1V789h1V788h1V789h1V788h1V790h1V789h2V790h1V789h2V788h1V789h8V790h1V789h3V788h1V789h2V790h3V789h1V790h1V788h2V789h1V788h1V789h4V790h1V788h1V789h3V788h1V789h1V790h1V788h3V789h3V790h1V789h5V790h1V789h1V790h1V789h3V790h1V788h1V789h1V788h1V789h5V790h1V789h1V788h1V790h1V789h1V788h1V789h4V790h2V789h2V788h1V789h3V790h1V789h2V788h1V789h2V790h1V789h10V788h1V789h2V788h1V789h4V788h1V790h1V789h2V788h2V789h1V790h2V789h1V788h1V789h1V788h1V789h1V790h1V789h3V790h1V789h1V790h1V789h7V790h1V789h6V788h1V790h1V789h2V788h1V789h4V788h1V789h2V788h1V790h1V789h2V788h2V789h1V790h1V789h2V790h1V788h2V789h4V790h2V788h1V789h3V790h1V789h2V790h1V789h1V790h1V789h2V790h2V789h3V788h1V790h1V788h2V789h2V788h1V790h2V788h1V790h1V789h5V788h1V790h1V789h1V788h1V789h8V793h-10V794h-1V793h-3V794h-2V793h-1V795h-1V792h-1V794h-2V792h-1V794h-1V793h-1V792h-2V794h-1V793h-4V794h-2V793h-2V794h-1V795h-1V794h-1V793h-2V794h-1V793h-4V794h-2V793h-4V794h-1V793h-1V794h-2V793h-1V794h-1V793h-1V792h-2V793h-2V796h-1V794h-1V793h-2V792h-1V793h-4V792h-1V793h-2V794h-1V793h-7V794h-1V793h-1V795h-1V793h-5V794h-4V793h-2V794h-1V793h-1V792h-1V793h-1V794h-1V793h-1V794h-2V793h-5V794h-1V792h-1V794h-1V793h-3V792h-1V793h-2V792h-1V793h-1V794h-1V793h-4V795h-1V793h-3V795h-1V794h-1V793h-4V794h-1V793h-3V792h-1V793h-2V794h-2V793h-1V794h-1V793h-4V794h-2V793h-1V794h-1V793h-7V792h-1V794h-2V793h-2V794h-1V793h-1V794h-1V793h-2V794h-1V793h-2V794h-1V793h-4V792h-1V793h-1V794h-1V793h-1V792h-1V793h-3V794h-2V793h-8V794h-1V793h-1V794h-3V793h-6V794h-3V795h-1V793h-1V794h-1V793h-3V792h-1V793h-1V794h-2V793h-2V794h-1V793h-2V792h-1V793h-1V794h-1V793h-2V794h-1V793h-5V794h-2V793h-3V794h-2V793h-8V792h-1V793h-3V792h-1V793h-5V792h-1V793h-4V794h-1V793h-5V794h-1V793h-3V794h-1V793h-10V794h-1V793h-9V794h-1V793h-2V794h-1V793h-1V794h-1V793h-2V794h-2V793h-2V795h-1V793h-1V794h-1V793h-2V794h-1V793h-4V795h-1V792h-1V794h-1V793h-1V794h-3V795h-1V793h-1V794h-1V792h-1V794h-1V795h-1V793h-3V792h-1V793h-1V794h-1V792h-1V793h-1V794h-1V793h-2V794h-1V793h-1V796h-1V792h-1V794h-2V793h-5V794h-2V793h-6V795h-1V793h-1V792h-1V793h-1V794h-1V795h-1V793h-2V794h-1V793h-2V792h-1V793h-1V794h-1V793h-1V792h-1V794h-1V793h-1V794h-1V793h-7V794h-1V793h-1V792h-1V793h-2V794h-1V793h-3V795h-1V793h-6V794h-1V793h-3V792h-1V793h-3V794h-1V793h-1V794h-1V795h-1V793h-3V792h-1V793h-1V794h-1V793h-4V795h-1V792h-1V793h-1V794h-4V793h-4V794h-2V793h-2V792h-1V793h-4V794h-1V793h-3V792h-1V794h-1V793h-4V795h-1V793h-3V794h-1V793h-5V794h-2V792h-1V794h-1V793h-1V794h-1V793h-2V794h-2V793h-2V794h-1V793h-2V794h-1V793h-3V794h-1V793h-1V794h-1V793h-1V794h-2V793h-2V792h-1V793h-1V792h-1V794h-3V793h-2V792h-1V793h-7V792h-1V794h-1V793h-1V794h-5V792h-1V795h-1V794h-1V793h-4V795h-1V793h-13V794h-1V793h-1V794h-1V793h-5V794h-1V793h-6V795h-1V793h-4V792h-1V794h-1V795h-1V793h-3V792h-1V793h-1V795h-1V793h-2V794h-1V793h-3V792h-1V793h-3V794h-1V793h-8V794h-1V793h-2V794h-1V793h-2V794h-1V793h-1V792h-1V793h-9V794h-1V793h-2V794h-3V793h-4V794h-1V793h-6V792h-1V793h-2V792h-1V794h-1V793h-1V792h-1V793h-3V794h-1V793h-2V794h-1V793h-1V792h-1V793h-1V792h-1V794h-1V793h-9V794h-1V793h-5V794h-1V793h-1V795h-1V793h-9V792h-1V793h-2V792h-1V794h-1V792h-1V793h-18V794h-1V793h-1V795h-1V794h-2V793h-6V794h-1V793h-3V794h-1V793h-2V794h-1V793h-2V794h-4V793h-1V794h-1V792h-1V793h-2V794h-1V793h-4V794h-3V792h-1V793h-3V792h-1V793h-9V794h-1V793h-8V794h-1V793h-2V794h-1V793h-3V794h-1V793h-2V794h-1V793h-3V794h-1V793h-3V794h-1V793h-2V792h-1V793h-3V794h-2V793h-2V792h-1V794h-1V793h-9V794h-1V792h-1V793h-2V794h-1V793h-14V794h-1V793h-3V794h-1V793h-1V794h-2V793h-2V794h-3V792h-1V793h-9V794h-1V793h-3V794h-1V792h-1V794h-1V793h-1V795h-1V793h-2V794h-2V793h-4V794h-1V792h-1V793h-6V794h-2V795h-1V792h-1V793h-2V794h-1V793h-2V794h-1V793h-9V792h-1V793h-1V795h-1V793h-1V794h-1V795h-1V793h-9V794h-1V793h-2V792h-1V793h-1V792h-1V794h-1V792h-1V793h-3V796h-1V794h-1V793h-2V794h-1V793h-1V792h-1V793h-7V794h-3V793h-1V794h-4V793h-3V794h-1V793h-3V795h-1V793h-4V795h-1V793h-3V794h-1V793h-12V792h-1V793h-3V794h-1V793h-3V794h-1V793h-2V794h-1V793h-2V794h-2V793h-3V796h-1V793h-4V794h-1V793h-1V792h-1V793h-1V794h-2V793h-1V794h-2V792h-1V794h-1V793h-2V794h-1V793h-2V794h-1V793h-3V792h-1V793h-3V792h-1V793h-2V794h-1V793h-2V792h-1V793h-1V794h-2V793h-1V794h-1V793h-1V795h-1V793h-1V794h-1V793h-1V794h-1V793h-1V794h-1V795h-1V793h-7V794h-1V793h-4V794h-1V792h-2V793h-1V794h-3V793h-1V792h-1V793h-4V792h-1V794h-1V793h-3V794h-1V793h-2V792h-1V793h-1V792h-2V793h-2V795h-1V793h-2V794h-1V793h-1V794h-1V793h-1V794h-1V793h-4V792h-1V793h-2V794h-2V795h-1V793h-1V794h-2V793h-1V794h-1V795h-1V793h-5V792h-1V794h-1V793h-2V794h-2V793h-2V792h-1V794h-2V792h-1V794h-1V793h-2V794h-1V793h-1V792h-1V793h-5V794h-2V793h-1V795h-1V793h-5ZM277 819h1V820h3V821h1V820h5V821h1V820h2V819h1V820h1V821h1V820h6V821h1V820h1V819h2V821h1V820h1V821h2V820h6V821h1V820h3V819h1V821h1V820h2V818h1V820h3V821h1V819h1V820h1V821h1V820h4V819h1V820h5V821h1V820h1V818h1V820h2V821h1V820h1V821h1V820h1V821h1V820h1V821h1V820h3V821h1V820h2V821h1V818h1V820h5V817h1V821h1V820h3V821h1V820h3V818h1V821h1V819h1V820h1V819h1V820h6V819h1V820h3V821h1V820h4V818h1V820h1V819h1V820h1V821h1V820h4V819h1V820h1V819h1V820h5V821h1V820h4V818h1V820h2V821h1V819h2V821h1V820h6V821h1V819h1V821h2V820h7V819h1V821h1V819h1V820h1V821h1V820h7V819h1V821h1V820h1V821h2V820h12V821h1V820h1V819h1V821h1V820h4V821h1V820h2V819h1V820h4V821h1V820h2V819h1V820h3V821h1V820h3V821h1V820h4V821h1V820h5V819h1V820h1V821h1V820h1V821h1V820h2V821h1V820h3V819h1V820h5V819h1V820h7V821h3V820h2V821h2V820h1V821h2V820h2V819h2V820h4V818h1V820h3V819h1V820h1V821h1V819h1V820h10V821h1V820h5V819h2V820h1V819h1V821h1V820h1V821h1V820h4V821h1V820h3V819h1V820h1V818h1V820h5V821h1V819h1V821h1V820h2V821h1V820h1V821h1V820h6V821h1V820h2V819h3V820h2V821h1V819h1V820h3V821h1V820h1V821h1V820h1V821h1V820h1V821h2V820h1V819h1V820h5V819h2V820h7V821h1V820h7V821h1V820h1V818h1V820h10V821h1V820h5V821h1V820h2V821h1V820h1V819h1V820h4V821h1V820h4V819h1V820h1V819h1V820h1V821h1V820h3V819h1V820h1V821h1V820h1V819h1V820h1V821h1V820h1V821h2V820h3V821h1V820h11V819h1V821h1V820h2V821h1V820h1V818h1V821h2V820h1V819h1V820h4V821h2V820h2V821h1V820h7V818h1V820h3V819h1V820h1V819h1V821h2V819h1V820h2V821h1V820h1V821h2V820h3V819h1V820h3V821h2V820h6V819h1V820h3V819h1V820h4V821h1V820h5V821h1V820h1V821h2V820h1V818h1V819h1V820h3V819h1V821h1V820h2V819h1V820h10V821h2V819h1V820h8V819h1V821h1V820h8V819h1V820h2V821h1V820h3V821h1V820h1V819h1V821h1V820h1V821h1V820h4V821h1V820h4V819h1V820h1V821h1V820h1V821h1V820h4V819h1V820h4V819h1V820h4V821h1V820h6V821h1V820h1V821h1V820h1V821h1V820h1V821h1V820h3V821h1V820h1V821h1V820h1V819h1V820h2V821h1V820h6V821h1V820h3V821h1V819h1V820h4V818h1V820h5V819h1V821h1V820h1V821h1V820h1V819h1V821h1V820h3V821h2V820h1V819h1V820h3V821h1V820h1V819h1V821h1V820h1V818h1V820h6V819h1V820h3V821h2V820h4V821h1V820h2V821h1V818h1V820h1V821h1V820h1V821h1V818h1V821h1V820h2V819h1V820h8V821h1V818h1V820h3V819h1V820h4V821h1V820h3V819h2V820h10V819h1V820h6V821h1V820h5V818h1V820h3V819h1V820h9V821h1V820h2V821h1V819h1V821h1V820h2V821h1V820h6V821h2V820h1V819h2V820h2V819h1V820h1V819h1V820h1V821h1V820h5V821h1V820h1V821h1V820h2V821h1V820h1V819h1V820h2V819h1V820h1V821h2V820h1V819h1V818h1V820h1V821h1V820h1V819h1V820h5V818h1V820h3V819h1V820h1V821h2V818h1V819h1V820h2V821h1V820h1V818h1V820h1V821h1V820h1V821h1V820h4V819h1V821h1V818h1V821h2V819h1V820h5V821h1V820h2V821h2V820h2V821h1V820h5V821h1V819h1V820h1V818h1V820h4V821h1V820h8V821h1V819h1V820h4V821h1V820h1V819h1V821h1V820h2V821h1V819h1V820h2V821h1V820h10V819h3V821h1V820h3V821h1V819h1V820h3V819h1V821h2V820h1V819h1V820h2V821h2V819h1V821h1V818h1V820h1V821h1V819h1V821h3V820h4V819h1V820h3V819h1V820h5V818h1V820h1V818h1V819h1V820h1V821h1V820h1V819h1V820h6V821h2V820h7V819h2V820h5V821h1V820h3V821h1V820h2V821h2V820h5V819h1V820h1V821h2V820h3V821h1V820h6V821h1V820h9V819h1V821h1V820h1V821h1V820h4V821h1V820h5V821h1V820h3V819h1V820h2V821h1V818h1V820h7V821h1V819h1V820h1V819h1V821h1V820h1V819h1V820h1V819h1V820h8V818h1V820h1V821h1V820h3V819h1V820h1V821h1V818h1V819h1V820h3V819h1V821h1V820h1V819h2V820h2V821h2V820h2V821h1V820h3V821h1V820h2V818h1V820h3V821h2V820h6V821h1V820h6V824h-6V825h-1V824h-6V825h-1V826h-1V824h-2V825h-1V824h-3V825h-1V824h-3V825h-1V824h-2V825h-2V824h-2V823h-1V824h-2V825h-1V823h-1V824h-4V823h-1V825h-1V824h-3V825h-1V824h-1V825h-1V824h-1V825h-1V826h-1V824h-7V825h-1V824h-3V825h-1V823h-1V824h-1V825h-2V824h-5V825h-1V824h-2V825h-1V824h-2V823h-1V824h-1V825h-1V824h-1V825h-1V824h-4V825h-4V824h-2V827h-1V824h-1V825h-1V824h-2V825h-1V824h-3V825h-1V824h-3V826h-1V824h-6V825h-1V824h-3V825h-2V824h-1V823h-1V825h-3V824h-2V825h-2V824h-2V825h-1V824h-3V825h-1V824h-1V825h-1V824h-1V825h-1V824h-3V825h-1V824h-6V825h-2V824h-6V826h-1V824h-1V825h-1V824h-4V823h-1V824h-5V823h-1V824h-1V825h-1V824h-4V825h-1V824h-1V825h-3V824h-1V826h-1V824h-2V825h-1V823h-1V825h-2V824h-2V823h-1V824h-1V825h-2V824h-4V823h-1V825h-2V824h-2V826h-1V823h-1V824h-12V826h-1V824h-2V823h-1V825h-1V824h-2V825h-1V824h-2V825h-1V824h-1V826h-1V824h-1V826h-1V824h-1V825h-1V824h-5V825h-1V824h-2V825h-1V824h-3V825h-1V823h-1V824h-1V823h-1V825h-1V824h-5V825h-1V824h-2V825h-2V824h-2V825h-1V824h-3V825h-1V824h-2V825h-2V823h-1V825h-1V823h-1V824h-1V825h-1V824h-2V825h-1V824h-1V826h-1V824h-2V825h-2V824h-2V825h-1V824h-1V825h-2V824h-1V823h-1V824h-6V825h-1V824h-4V825h-1V824h-1V823h-2V824h-1V825h-2V824h-1V825h-1V824h-2V823h-1V824h-1V825h-1V824h-2V827h-1V824h-1V825h-1V824h-5V825h-1V824h-7V823h-1V824h-1V825h-2V824h-4V825h-1V824h-1V825h-1V824h-2V825h-1V823h-1V825h-1V824h-2V825h-1V824h-9V823h-1V824h-3V823h-1V824h-5V825h-1V824h-6V823h-1V824h-3V825h-1V824h-2V826h-1V825h-1V824h-3V823h-1V824h-3V825h-2V824h-3V823h-1V824h-3V823h-1V825h-1V824h-5V825h-2V824h-4V825h-1V823h-1V825h-1V824h-1V825h-1V824h-1V823h-1V825h-1V826h-1V824h-1V825h-1V824h-3V826h-1V825h-2V824h-3V823h-1V824h-8V825h-1V823h-1V824h-1V825h-1V824h-5V825h-2V824h-3V825h-2V824h-1V825h-1V824h-1V825h-1V823h-1V824h-4V825h-1V824h-5V823h-1V825h-1V824h-3V825h-1V824h-6V825h-1V824h-4V827h-1V824h-1V825h-1V824h-3V825h-1V824h-1V825h-1V824h-1V825h-1V824h-1V825h-1V824h-3V826h-1V824h-1V826h-2V824h-4V823h-1V824h-5V825h-1V824h-3V825h-1V824h-1V825h-1V824h-1V823h-1V824h-4V825h-1V824h-4V825h-1V824h-1V826h-1V823h-1V824h-1V825h-1V824h-1V825h-1V824h-1V825h-1V824h-1V826h-1V823h-1V825h-1V824h-4V825h-1V824h-2V825h-1V824h-6V827h-1V824h-3V825h-2V824h-1V825h-2V824h-7V823h-1V825h-1V824h-1V825h-1V824h-7V826h-1V825h-1V824h-1V825h-1V824h-4V825h-2V824h-10V825h-2V824h-3V825h-2V824h-7V825h-2V824h-1V825h-1V824h-3V825h-2V823h-1V824h-3V825h-2V824h-8V825h-1V824h-2V825h-2V824h-6V825h-2V824h-2V825h-1V824h-2V826h-1V824h-1V825h-1V824h-10V825h-2V824h-2V827h-1V825h-3V824h-3V825h-1V824h-1V823h-1V824h-1V825h-3V824h-3V823h-1V824h-4V825h-1V824h-2V825h-1V824h-1V823h-1V824h-1V825h-1V824h-2V825h-1V824h-5V826h-1V824h-2V825h-1V824h-1V825h-1V824h-2V825h-1V826h-1V824h-1V823h-1V824h-1V825h-2V824h-6V825h-1V824h-6V825h-1V823h-1V825h-1V824h-7V825h-2V824h-1V825h-1V824h-1V825h-1V824h-1V827h-1V824h-3V823h-1V825h-1V824h-3V823h-1V825h-1V824h-2V825h-1V824h-4V825h-1V824h-1V825h-1V824h-1V825h-2V824h-1V825h-1V823h-1V825h-1V824h-6V825h-1V823h-1V824h-1V825h-1V824h-1V825h-1V824h-4V825h-3V824h-2V825h-1V824h-4V825h-3V824h-11V825h-1V824h-1V825h-1V824h-3V823h-1V824h-4V823h-1V824h-3V825h-2V824h-1V826h-1V825h-1V826h-1V824h-1V825h-3V824h-17V825h-1V824h-2V826h-1V824h-1V826h-1V824h-1V823h-1V824h-1V825h-1V824h-3V825h-1V824h-4V825h-1V824h-3V825h-1V824h-3V823h-1V824h-2V826h-1V824h-4V823h-1V824h-2V825h-1V824h-1V826h-1V824h-2V825h-1V824h-2V825h-1V824h-2V825h-2V824h-8V825h-2V824h-1V825h-1V824h-1V825h-1V824h-6V826h-1V824h-1V823h-1V825h-1V824h-6V825h-4V824h-1V825h-1V824h-2V825h-1V824h-3V825h-1V823h-2V825h-1V824h-2V825h-1V824h-4V825h-1V824h-9V825h-1V824h-2V825h-1V824h-1V823h-1V824h-4V825h-1V824h-1V825h-1V824h-13V825h-1V824h-4V827h-1V824h-3V825h-1V823h-1V826h-1V824h-5V825h-1V824h-2V825h-1V824h-3V825h-1V824h-1V825h-1V824h-1V825h-1V824h-1V825h-1V824h-4V825h-1V824h-5V823h-1V826h-1V824h-1V825h-1V824h-1V825h-1V824h-1V823h-1V825h-1V824h-6V825h-1V823h-1V824h-3V825h-2V824h-2V825h-1V824h-2V825h-4V824h-1V823h-1V824h-1V825h-1V824h-3V825h-1V824h-1V825h-2V824h-1V825h-1V824h-2V825h-1V824h-5V825h-1V824h-2V825h-1V823h-1ZM277 850h2V849h1V850h2V849h1V850h6V851h2V850h2V851h2V850h3V851h1V850h1V851h1V850h2V851h2V850h1V849h1V851h1V850h4V851h2V850h6V849h1V850h3V851h2V850h1V851h1V850h6V849h1V850h6V851h1V850h1V851h1V850h4V851h1V850h3V851h1V850h2V851h2V850h1V849h1V850h3V849h1V850h1V851h1V850h1V851h1V847h1V850h2V849h1V851h1V850h1V851h1V850h2V849h1V850h1V851h1V850h3V849h1V850h1V849h1V850h1V849h1V848h1V851h2V850h1V851h2V850h1V849h1V851h1V849h2V850h3V849h2V851h1V848h1V850h1V851h1V850h1V851h1V850h3V851h2V850h2V851h1V850h2V849h2V850h3V849h1V850h2V848h1V850h4V849h1V851h2V850h1V849h3V850h8V851h1V850h1V851h1V850h1V851h1V850h1V851h1V850h1V849h1V850h4V849h1V850h6V851h3V850h3V849h1V850h3V851h1V850h1V851h1V850h2V851h1V850h2V851h1V850h1V849h1V851h1V850h10V848h1V851h1V850h2V851h1V850h4V849h2V850h1V851h1V847h1V851h1V849h1V850h3V851h1V850h2V851h2V850h5V851h1V850h5V851h1V849h1V850h1V851h1V849h1V850h1V848h1V851h1V850h4V851h2V850h1V849h1V850h6V851h2V850h1V851h1V848h1V851h1V850h6V851h1V850h2V849h1V850h4V849h1V850h1V849h2V851h2V850h1V849h1V850h1V851h1V849h1V850h1V851h2V850h4V849h1V851h1V850h1V849h1V850h3V851h1V850h4V851h2V850h2V851h1V850h2V851h1V848h1V849h1V850h1V851h1V850h1V851h1V850h3V851h1V850h3V851h1V850h4V849h1V850h5V849h1V850h2V851h1V850h5V851h2V847h1V850h1V849h1V850h1V851h1V849h1V851h1V850h1V849h1V850h1V851h1V849h1V850h4V849h1V851h1V850h1V849h1V850h2V849h1V850h1V849h1V850h1V849h1V850h7V851h1V850h3V851h1V850h2V849h1V851h1V850h11V849h1V850h1V851h1V850h2V849h1V850h2V849h1V850h6V849h1V850h1V849h1V850h5V851h1V850h2V851h1V850h1V849h1V850h5V851h1V850h3V851h1V850h1V849h1V851h1V850h1V851h1V850h3V851h1V850h3V849h2V850h5V849h1V850h2V851h2V850h3V851h1V850h1V851h1V849h2V848h1V850h1V851h1V850h2V851h1V850h4V848h2V850h1V849h1V850h4V849h3V848h1V847h1V849h3V850h11V851h1V850h8V851h1V850h2V849h1V850h10V851h1V850h2V849h1V850h1V851h1V850h4V849h1V850h1V851h1V850h1V851h1V850h2V849h1V851h1V850h5V848h1V850h6V851h1V850h4V851h1V850h2V849h1V850h2V851h1V848h1V850h5V851h1V850h1V851h1V850h3V849h1V850h4V848h1V849h1V850h1V849h1V850h1V848h1V851h1V850h2V848h1V850h2V851h1V850h10V849h1V850h9V849h1V850h2V851h2V850h1V851h1V850h1V849h1V850h4V848h1V851h1V849h1V851h2V849h1V850h2V849h1V851h1V849h1V851h1V850h2V849h1V850h2V851h1V850h2V851h1V850h7V851h1V850h1V851h3V849h1V850h2V849h1V850h1V848h2V850h3V851h1V850h2V849h2V850h2V851h1V848h1V851h1V850h1V849h1V850h1V851h1V850h1V851h1V850h3V849h1V850h1V851h1V849h1V850h1V849h1V850h1V849h1V850h5V851h1V850h4V851h1V848h1V850h1V851h1V850h2V849h1V850h1V849h1V850h3V849h1V850h4V851h1V850h1V851h1V849h1V851h1V850h2V851h1V850h1V851h2V850h2V851h2V850h15V849h1V850h1V851h1V850h1V849h1V850h2V851h1V850h4V851h2V850h4V851h1V850h1V851h2V849h1V850h7V851h1V850h1V851h1V850h11V849h1V850h5V849h1V850h1V851h1V850h5V851h1V850h5V851h1V850h1V851h1V849h1V850h7V851h1V850h3V851h1V849h2V851h1V850h1V851h1V850h2V851h1V850h5V851h1V850h3V851h1V850h3V849h1V850h1V849h2V850h1V851h1V850h1V851h1V850h1V851h1V850h2V851h1V850h3V851h1V850h4V851h1V850h4V851h1V850h1V851h1V850h1V849h1V850h2V851h1V849h1V850h3V849h1V850h3V851h1V849h1V850h1V849h1V850h1V851h1V850h3V851h1V850h15V849h1V850h1V851h1V850h2V849h2V848h1V850h2V849h1V850h4V849h1V850h5V851h1V850h1V851h1V850h1V849h1V850h2V849h2V850h5V851h1V850h3V849h1V850h1V851h1V850h9V848h1V850h3V848h1V850h1V851h1V850h2V849h1V850h1V848h1V850h4V851h1V850h2V849h3V850h1V851h1V849h1V850h2V849h2V846h1V848h1V849h1V848h1V849h3V850h2V849h1V850h2V848h1V850h3V851h1V850h1V851h1V850h1V849h1V850h1V849h1V850h2V851h1V850h1V849h1V850h1V851h1V850h5V849h1V850h7V849h1V850h5V851h2V850h8V851h1V850h3V851h2V850h1V851h1V850h1V849h1V850h1V851h2V849h1V850h5V849h1V850h1V851h2V850h1V849h3V850h1V854h-2V853h-2V854h-1V855h-2V854h-8V855h-2V854h-3V855h-1V854h-1V855h-2V854h-3V856h-1V854h-8V855h-2V854h-2V855h-1V854h-2V853h-1V854h-5V855h-1V854h-1V855h-1V854h-5V855h-1V854h-1V853h-1V854h-1V856h-1V854h-2V855h-1V854h-3V855h-1V856h-1V855h-1V854h-6V853h-1V854h-2V856h-1V855h-1V856h-1V854h-1V857h-1V856h-1V854h-1V855h-3V854h-2V855h-1V854h-1V855h-1V853h-1V854h-1V855h-1V854h-1V855h-1V854h-5V855h-1V853h-1V854h-1V855h-1V856h-1V854h-14V856h-1V855h-1V854h-5V855h-1V854h-1V855h-1V854h-3V853h-1V854h-5V855h-1V854h-1V855h-1V854h-10V853h-1V854h-2V853h-3V854h-2V855h-1V854h-11V856h-1V854h-1V855h-1V854h-3V855h-1V854h-3V855h-1V854h-1V853h-1V854h-1V853h-1V856h-1V854h-2V855h-1V854h-2V855h-1V854h-1V855h-1V856h-1V854h-2V853h-1V854h-1V855h-1V854h-1V855h-1V854h-2V855h-1V854h-1V855h-1V854h-4V855h-1V854h-3V855h-1V854h-2V855h-1V854h-1V855h-1V854h-1V855h-1V854h-1V855h-1V854h-6V855h-1V854h-3V855h-1V854h-5V855h-1V854h-2V855h-1V854h-1V855h-1V854h-1V853h-1V855h-1V854h-3V855h-1V854h-5V855h-1V854h-1V853h-1V855h-2V856h-1V854h-4V855h-2V854h-5V855h-1V854h-1V853h-1V854h-6V855h-1V854h-10V855h-1V854h-1V855h-1V854h-7V853h-1V855h-1V856h-1V854h-1V855h-1V854h-4V855h-2V854h-2V855h-3V854h-2V853h-1V854h-1V855h-1V854h-12V856h-1V854h-4V855h-2V854h-2V855h-2V854h-1V855h-2V854h-1V855h-1V853h-1V855h-1V854h-1V855h-1V854h-1V855h-1V854h-2V855h-1V854h-3V853h-1V854h-1V855h-1V854h-2V855h-1V854h-1V853h-1V855h-1V854h-2V855h-1V854h-1V855h-2V854h-4V853h-1V854h-3V853h-1V855h-1V854h-2V855h-1V854h-1V855h-2V854h-1V855h-1V854h-1V853h-1V854h-1V855h-1V856h-1V855h-1V854h-3V855h-2V854h-1V855h-1V854h-4V853h-1V854h-4V856h-1V855h-3V854h-1V856h-1V854h-7V855h-1V854h-1V855h-2V854h-2V853h-1V854h-2V855h-1V853h-1V855h-1V854h-1V855h-1V854h-1V853h-1V855h-2V854h-1V855h-1V854h-1V855h-1V854h-5V855h-1V854h-1V855h-2V854h-1V855h-1V853h-1V855h-1V854h-5V855h-2V854h-1V853h-1V854h-6V855h-1V854h-3V855h-1V854h-2V853h-1V854h-2V855h-1V853h-1V855h-2V854h-6V855h-1V854h-4V856h-1V854h-1V855h-1V854h-6V855h-1V854h-3V855h-3V854h-2V855h-1V854h-1V855h-1V854h-1V855h-1V854h-1V855h-1V854h-2V853h-1V854h-1V855h-1V854h-3V855h-1V853h-1V854h-2V855h-1V854h-1V855h-1V854h-5V855h-2V854h-4V855h-1V854h-3V855h-3V854h-3V855h-1V854h-3V855h-1V854h-1V855h-1V854h-6V855h-1V854h-8V855h-1V854h-2V855h-3V856h-1V855h-1V857h-2V855h-3V854h-1V855h-1V853h-1V854h-1V853h-1V854h-4V855h-2V854h-2V855h-1V854h-3V853h-1V856h-1V854h-1V855h-1V854h-3V855h-2V854h-3V855h-1V854h-4V853h-1V854h-2V855h-1V854h-1V855h-1V854h-3V855h-1V854h-1V855h-1V854h-2V855h-1V854h-2V855h-2V854h-2V855h-1V854h-3V856h-1V855h-1V854h-2V855h-1V854h-1V855h-1V854h-3V853h-1V854h-1V855h-1V854h-1V855h-1V854h-1V856h-1V854h-2V855h-1V854h-2V853h-1V854h-2V855h-1V854h-13V856h-1V854h-1V855h-1V854h-1V855h-1V854h-3V855h-1V854h-3V855h-2V854h-1V855h-1V853h-1V854h-3V855h-1V854h-2V853h-1V854h-1V855h-1V853h-1V854h-4V853h-1V855h-1V854h-3V855h-1V853h-1V855h-1V854h-3V853h-1V855h-2V854h-5V855h-1V854h-4V855h-1V854h-2V855h-1V853h-1V854h-4V855h-1V854h-3V855h-2V854h-2V855h-1V854h-1V855h-1V854h-1V853h-1V854h-1V855h-1V854h-2V856h-1V854h-2V855h-2V854h-4V855h-1V854h-2V855h-1V854h-2V855h-1V853h-1V854h-4V855h-3V854h-1V855h-2V854h-1V855h-3V854h-2V855h-1V854h-1V855h-1V854h-2V855h-1V853h-1V854h-2V855h-1V854h-6V855h-1V854h-1V855h-1V854h-1V855h-1V857h-1V854h-6V853h-1V854h-1V855h-3V854h-3V855h-1V854h-2V853h-1V855h-1V854h-1V853h-1V855h-1V854h-1V856h-1V854h-3V855h-1V854h-5V855h-2V854h-2V855h-1V854h-4V855h-1V853h-1V855h-1V854h-1V853h-1V854h-5V855h-2V854h-1V856h-1V854h-11V855h-1V854h-2V855h-1V854h-2V855h-1V854h-2V855h-3V854h-3V853h-1V854h-3V855h-3V854h-4V855h-1V854h-1V855h-1V854h-4V855h-1V854h-1V855h-1V854h-1V855h-1V854h-1V855h-1V854h-1V855h-2V854h-8V853h-1V854h-2V855h-2V854h-8V853h-1V854h-7V855h-1V854h-1V855h-3V854h-3V855h-1V854h-1V857h-1V854h-2V855h-1V853h-1V854h-4V853h-2V855h-1V854h-2V855h-2V856h-1V855h-2V854h-3V853h-1V854h-1V853h-1V854h-3V855h-1V854h-1V853h-1V854h-2V855h-1V854h-1V855h-1V854h-3V853h-1V855h-2V856h-1V854h-1V855h-1V854h-3V855h-1V854h-1V855h-2V854h-1V855h-2V854h-3V855h-1V854h-4V855h-1V854h-1V855h-1V854h-5V855h-1V854h-1V855h-1V854h-5V856h-1V854h-1V855h-2V854h-2V856h-1V854h-2V855h-1V854h-4V855h-2V854h-3V856h-1V855h-1V854h-2V855h-1V856h-1V854h-1V856h-1V855h-1V854h-1V855h-2V854h-2V855h-2V854h-2V855h-1V857h-1V854h-9V853h-1V854h-2ZM277 879h1V881h2V880h2V881h1V880h4V879h1V880h1V881h1V879h1V880h1V881h1V880h3V879h1V880h5V879h1V880h4V881h2V880h2V881h3V880h2V881h2V880h1V881h1V880h1V881h1V880h1V879h1V881h1V880h4V881h2V880h1V881h2V880h7V881h2V880h3V879h1V880h1V881h1V879h1V881h1V880h1V881h1V880h1V881h1V880h1V879h1V880h5V881h1V880h2V879h1V880h3V879h1V880h3V881h2V880h2V879h2V880h7V879h1V880h3V878h1V880h2V881h2V880h2V881h1V880h1V879h1V880h3V879h2V881h1V879h1V880h2V881h2V880h3V879h1V880h1V881h3V880h2V879h2V881h1V880h5V881h1V877h1V880h4V879h2V880h1V881h1V880h2V881h1V880h6V879h1V880h12V879h1V880h1V881h2V880h1V881h2V880h1V881h1V879h1V880h7V878h1V880h2V879h1V881h1V880h1V881h1V880h1V879h1V880h3V881h1V880h1V881h1V880h3V881h1V880h1V879h1V880h1V879h1V878h1V880h3V881h1V879h1V880h3V879h1V881h1V880h5V879h2V880h2V881h1V880h5V881h1V880h5V881h1V880h2V878h1V880h1V879h1V880h10V881h2V880h1V881h3V880h1V879h1V881h1V880h2V881h2V880h3V881h1V879h1V880h5V881h1V880h5V881h1V880h3V879h1V880h1V879h1V880h1V881h1V879h2V880h1V881h1V880h1V881h1V880h3V879h1V880h1V879h1V881h1V880h3V879h3V878h1V880h3V881h1V880h3V879h1V880h1V881h2V879h1V880h1V878h1V880h3V881h1V880h2V881h1V880h2V881h1V880h1V879h1V880h9V881h1V878h1V881h1V880h1V881h1V880h7V881h1V880h11V879h1V880h2V881h1V879h2V880h3V881h2V880h2V879h1V880h1V879h1V880h5V881h1V878h1V881h1V880h2V881h1V880h2V881h1V880h6V878h1V880h1V879h1V881h1V880h4V879h2V880h3V879h1V880h1V879h1V880h1V881h2V880h16V881h2V880h3V879h1V880h3V879h2V880h1V881h1V880h3V879h2V880h3V881h3V880h3V879h1V880h1V881h1V880h7V879h1V880h4V881h1V880h1V881h1V880h6V878h1V880h3V881h1V880h1V881h1V880h2V881h1V879h1V881h2V880h3V879h1V881h2V880h3V881h1V880h3V881h1V880h3V879h1V880h2V881h1V880h1V879h1V878h1V881h1V880h11V878h1V880h2V879h1V880h5V879h1V880h2V878h1V880h1V881h1V880h2V879h1V880h4V881h2V880h1V881h1V880h10V881h1V880h2V881h2V879h1V881h1V879h1V881h1V879h1V880h2V881h1V880h2V881h1V880h2V881h1V879h1V880h1V879h1V880h1V881h1V878h1V880h2V881h1V880h5V879h1V881h1V880h3V879h1V880h2V879h1V880h5V881h1V880h4V879h1V880h3V881h1V880h1V881h1V880h1V879h2V880h1V877h1V878h1V879h2V880h1V881h1V880h1V881h1V880h3V881h2V880h1V879h1V881h2V879h1V880h2V879h1V880h1V879h1V880h1V879h1V881h1V880h1V879h1V880h3V881h1V880h4V878h1V880h1V881h1V879h1V880h3V881h1V880h11V879h1V881h1V880h2V879h1V880h1V881h1V880h1V881h1V879h1V881h2V880h1V878h1V881h3V880h2V881h4V880h4V881h2V880h1V879h1V880h1V879h1V881h1V879h1V880h1V881h1V880h2V879h1V880h1V881h1V880h2V881h1V880h8V881h1V880h1V881h1V880h1V881h1V880h3V881h1V880h1V879h1V880h1V879h1V880h4V881h1V880h7V881h1V880h6V879h1V880h1V879h1V880h3V879h1V880h3V881h2V880h4V881h1V880h10V881h1V880h2V881h2V880h1V879h1V880h1V881h1V880h3V878h1V880h1V881h1V880h1V879h1V881h1V880h1V881h1V880h2V879h2V880h1V881h1V880h2V881h1V880h1V879h2V881h1V880h11V881h1V880h8V881h1V879h1V880h1V881h1V880h2V878h1V880h5V881h1V880h1V881h1V880h4V881h1V879h1V880h2V879h1V881h2V880h2V881h2V879h1V880h1V879h2V881h1V880h5V879h1V878h1V880h2V879h1V880h13V881h2V880h4V881h1V879h1V880h1V881h1V880h2V881h1V880h2V881h2V880h1V881h1V880h3V881h1V880h1V879h1V880h3V881h1V880h2V878h1V879h1V880h1V879h1V880h1V881h1V880h2V881h2V880h1V879h1V880h1V879h1V880h1V881h1V880h1V881h1V880h2V881h1V880h1V879h1V881h1V880h2V879h1V880h6V881h1V880h6V879h1V880h2V881h1V880h3V879h1V881h1V880h1V881h2V880h8V879h1V880h1V881h1V880h5V879h3V880h2V881h1V880h1V879h1V880h1V879h1V881h1V878h1V879h1V880h3V879h1V881h1V880h3V881h1V880h2V879h1V880h2V881h1V880h2V881h2V880h2V881h2V879h1V880h3V881h2V880h4V881h1V880h5V881h1V880h3V881h1V880h5V881h1V879h1V880h1V879h1V880h4V879h2V880h2V879h2V881h6V880h3V879h1V880h2V879h1V885h-1V887h-2V885h-4V886h-2V888h-1V886h-2V888h-1V886h-1V884h-1V885h-3V884h-1V885h-1V886h-1V885h-4V884h-1V886h-1V885h-2V887h-1V885h-2V886h-1V885h-1V887h-1V885h-1V886h-1V885h-2V886h-1V885h-1V886h-2V885h-4V887h-1V886h-1V885h-4V886h-2V885h-2V886h-2V885h-2V886h-1V885h-2V886h-1V885h-1V887h-1V886h-1V885h-3V886h-1V885h-4V886h-1V884h-1V886h-1V884h-1V886h-1V884h-1V885h-1V886h-1V885h-2V884h-1V885h-1V884h-1V885h-5V886h-1V885h-1V886h-1V885h-7V886h-3V885h-1V886h-1V884h-1V885h-3V887h-1V885h-2V884h-1V885h-3V886h-1V885h-2V886h-1V885h-6V886h-4V884h-1V885h-1V886h-1V885h-2V887h-1V885h-1V886h-1V885h-1V887h-1V885h-3V886h-2V885h-1V887h-1V886h-1V885h-3V884h-1V885h-3V886h-1V885h-2V886h-1V884h-1V885h-1V886h-1V885h-3V886h-1V885h-1V886h-2V885h-1V886h-2V885h-2V886h-1V885h-2V886h-1V885h-1V886h-1V885h-2V886h-2V885h-7V887h-1V885h-2V886h-1V885h-2V884h-1V885h-1V886h-1V885h-7V888h-1V885h-4V887h-1V886h-1V885h-2V886h-2V885h-3V884h-1V886h-3V885h-2V886h-1V885h-1V886h-1V885h-3V887h-1V885h-4V886h-1V885h-1V884h-1V886h-1V885h-7V886h-2V885h-5V887h-1V886h-1V885h-4V886h-2V885h-2V886h-2V885h-1V886h-1V885h-5V886h-1V885h-1V886h-1V885h-2V886h-1V885h-1V884h-1V885h-2V886h-3V884h-1V886h-3V885h-2V887h-1V885h-1V886h-1V885h-8V887h-1V885h-4V886h-2V885h-3V884h-1V885h-3V884h-1V885h-1V884h-1V885h-6V886h-1V885h-7V886h-1V885h-6V884h-1V885h-1V886h-1V885h-1V886h-1V885h-1V886h-1V885h-1V886h-1V885h-1V886h-1V885h-5V886h-1V885h-2V886h-1V885h-2V886h-1V885h-4V886h-2V885h-1V886h-1V884h-1V885h-1V884h-1V885h-1V886h-2V885h-4V886h-4V885h-2V887h-1V886h-2V885h-2V886h-2V884h-1V886h-1V885h-1V886h-1V885h-4V886h-1V884h-1V885h-10V887h-1V886h-1V885h-3V884h-1V886h-1V885h-6V886h-2V885h-2V884h-1V885h-1V886h-1V885h-4V884h-1V885h-2V884h-1V886h-3V885h-1V886h-2V885h-3V886h-1V885h-1V886h-1V887h-1V886h-1V889h-1V886h-2V887h-1V886h-4V885h-1V886h-1V885h-4V886h-1V885h-3V886h-1V885h-2V887h-1V885h-3V886h-1V885h-1V884h-1V885h-3V886h-1V884h-1V885h-1V886h-1V885h-3V886h-1V885h-1V886h-1V885h-1V886h-1V885h-1V884h-1V886h-1V884h-1V886h-1V885h-2V886h-1V885h-2V886h-1V885h-3V887h-1V885h-1V886h-1V885h-1V886h-2V885h-2V886h-1V885h-2V886h-1V885h-2V886h-1V885h-4V886h-1V885h-1V886h-4V885h-2V884h-1V885h-2V886h-1V885h-4V884h-1V885h-9V887h-1V885h-10V887h-1V885h-3V886h-1V885h-6V886h-1V885h-3V886h-1V885h-3V886h-2V885h-4V886h-2V884h-1V887h-2V886h-2V885h-1V886h-1V885h-3V884h-1V885h-6V886h-1V885h-1V886h-1V885h-8V886h-1V885h-3V886h-2V885h-2V886h-1V885h-1V886h-5V885h-2V884h-1V885h-3V886h-1V885h-1V884h-2V885h-3V884h-1V885h-3V886h-2V885h-5V886h-1V885h-3V886h-1V885h-2V886h-1V885h-3V886h-2V885h-1V884h-1V885h-1V886h-1V887h-1V885h-2V884h-1V885h-2V886h-1V885h-2V886h-1V885h-9V886h-1V885h-2V886h-1V885h-1V886h-2V885h-1V886h-1V885h-10V886h-2V885h-3V884h-2V887h-2V885h-5V886h-1V885h-6V886h-2V885h-7V886h-1V885h-1V886h-1V885h-1V886h-1V885h-9V884h-1V885h-1V886h-1V885h-2V886h-1V885h-2V886h-1V885h-5V884h-1V886h-2V885h-1V884h-1V885h-1V886h-1V885h-1V886h-1V885h-3V884h-2V885h-5V886h-1V885h-6V886h-1V885h-1V886h-1V885h-3V886h-1V885h-7V886h-1V885h-1V886h-1V885h-3V886h-1V885h-6V886h-1V885h-3V886h-3V885h-1V886h-1V884h-1V885h-1V886h-3V885h-1V886h-2V885h-1V886h-2V885h-5V886h-2V884h-1V885h-3V886h-1V887h-1V885h-5V886h-1V885h-5V886h-1V885h-9V886h-1V885h-4V884h-1V886h-1V885h-3V884h-1V885h-2V886h-1V885h-1V886h-1V885h-3V887h-1V885h-1V887h-1V885h-5V886h-1V885h-1V886h-3V885h-5V886h-1V885h-4V887h-1V885h-1V886h-2V885h-1V886h-1V887h-1V885h-7V887h-2V885h-5V884h-1V885h-6V886h-1V885h-2V886h-1V885h-7V886h-1V887h-1V885h-5V886h-1V885h-1V884h-1V885h-1V886h-4V885h-1V884h-1V885h-3V886h-2V885h-3V886h-1V884h-2V885h-3V884h-1V885h-1V886h-3V887h-1V886h-1V885h-2V886h-1V885h-8V886h-2V885h-1V884h-1V885h-3V886h-2V885h-9V886h-2V885h-7V886h-1V885h-1V886h-1V885h-1V887h-1V884h-1V886h-1V885h-5V886h-2V885h-2V886h-1V885h-4V887h-1V886h-2V887h-1V886h-1V885h-2V886h-1V885h-1V886h-1V884h-1V885h-1V886h-1V885h-1V887h-1V885h-1V886h-1V887h-1V885h-2V886h-3V885h-2V886h-2V885h-4V884h-1V885h-6V887h-1V885h-2V886h-1V885h-1V884h-1V886h-2V884h-1V885h-4V886h-1V885h-2V886h-2V885h-1ZM277 910h1V911h1V910h1V909h1V910h1V911h1V909h1V910h1V909h1V910h1V909h1V911h1V910h3V911h2V910h2V908h1V910h5V911h1V910h2V909h2V910h3V909h1V910h1V909h1V910h1V911h1V910h1V911h1V910h1V909h1V910h1V911h1V909h1V910h6V911h1V910h1V909h1V910h1V908h2V910h1V911h2V909h3V911h1V909h1V910h4V909h1V910h3V911h1V909h1V911h1V910h1V911h1V909h1V910h9V908h1V911h1V910h1V909h1V910h5V908h1V910h2V911h1V910h1V911h1V910h4V911h1V910h3V911h1V910h1V911h1V910h1V909h1V911h1V910h1V911h1V910h1V911h1V909h1V910h4V911h2V910h5V911h1V910h2V908h1V910h2V909h1V910h1V909h1V910h5V911h1V910h2V911h1V910h2V909h1V908h1V910h2V911h1V910h5V911h2V910h1V911h1V910h4V911h1V910h1V911h1V910h1V911h1V910h1V909h1V910h1V909h1V910h2V909h1V910h1V911h1V910h1V909h2V910h5V909h1V910h1V909h1V910h3V911h1V908h1V911h2V909h1V910h3V911h1V910h1V911h1V910h2V909h1V910h3V909h1V911h1V910h1V911h1V910h3V909h1V911h1V909h1V911h1V910h1V911h1V910h1V911h2V910h8V911h1V910h1V911h2V909h1V911h1V910h1V909h1V911h1V910h1V909h1V911h1V910h1V911h2V910h2V911h2V910h1V909h1V911h1V910h1V911h1V910h1V911h1V910h3V911h2V908h1V909h1V910h1V909h1V910h1V911h1V910h3V911h1V910h2V909h1V910h1V911h1V910h1V909h1V911h1V910h3V911h1V910h7V909h1V910h4V909h2V910h13V909h1V911h3V910h2V908h1V910h2V911h1V910h1V911h1V910h2V908h1V911h1V909h1V910h1V911h1V910h3V909h1V910h1V909h1V910h5V911h1V910h1V908h1V910h1V909h1V910h1V911h1V910h6V909h1V910h1V909h1V910h8V909h1V910h3V909h1V911h1V910h1V909h1V910h4V909h1V910h5V909h1V910h11V911h1V910h1V909h1V910h9V908h1V909h1V911h2V910h2V911h1V910h1V911h2V910h1V909h1V910h1V911h1V910h2V911h1V909h1V910h1V909h1V910h7V911h1V910h2V911h1V909h1V910h4V911h1V910h7V911h2V910h14V911h1V910h1V911h1V910h4V911h1V910h2V909h1V910h1V909h1V910h1V909h1V910h2V909h1V910h1V908h1V909h1V910h6V911h1V910h1V909h2V910h2V911h1V910h1V909h1V910h2V911h3V909h1V910h3V911h1V908h1V909h1V910h1V911h2V910h1V911h1V910h5V911h1V910h2V909h1V910h3V909h1V910h5V911h1V910h4V911h2V910h1V911h2V910h1V909h1V910h5V911h1V910h2V911h1V910h2V909h1V910h1V911h1V910h1V909h1V910h3V909h1V910h1V909h2V910h1V909h1V907h1V910h3V911h1V910h1V911h2V910h2V911h1V909h1V910h2V911h1V910h2V911h1V910h1V911h1V909h2V910h2V909h1V910h1V909h1V910h4V909h1V911h1V910h1V911h1V910h2V911h1V910h2V908h2V911h1V910h6V909h1V910h2V911h2V910h2V908h1V910h3V909h1V910h3V909h1V911h1V910h1V909h2V910h3V911h1V910h1V911h1V910h1V909h1V910h1V911h1V910h3V911h1V909h1V911h1V910h3V911h1V910h1V909h1V910h1V911h1V910h5V911h1V910h11V909h1V910h2V909h1V911h1V910h11V911h3V910h1V908h1V909h1V910h2V911h1V910h6V911h1V910h2V911h1V910h6V908h1V910h3V911h1V910h3V911h1V910h3V909h1V910h5V909h1V910h15V911h1V909h1V910h3V909h1V910h3V909h1V910h6V911h6V910h1V911h1V910h2V909h1V910h1V909h1V910h4V911h3V910h2V909h1V910h3V911h1V910h3V911h1V910h2V911h1V910h2V909h1V911h1V909h1V910h2V909h1V910h2V909h1V910h2V909h1V911h1V910h1V909h1V910h1V908h1V910h1V908h2V910h1V909h1V910h1V909h2V910h3V911h3V910h1V911h1V910h1V908h1V910h1V911h2V910h9V911h1V910h2V911h1V910h9V909h1V911h1V910h1V911h3V910h2V909h1V910h2V911h1V910h1V909h1V910h2V908h1V910h2V911h2V910h3V909h1V911h1V910h7V911h1V910h1V909h1V910h3V909h2V911h2V910h1V909h1V910h1V911h1V910h1V909h1V910h2V909h2V910h7V911h1V910h1V909h1V910h1V909h1V910h3V909h1V910h1V909h1V910h1V911h2V910h1V911h2V910h7V911h1V910h4V911h1V910h5V911h1V910h2V908h1V910h5V911h1V909h2V910h1V911h1V910h2V911h1V910h1V909h1V910h10V909h1V910h4V911h2V909h1V910h4V909h1V911h1V910h1V911h1V910h4V911h1V910h2V911h1V910h3V909h1V911h1V910h2V911h1V910h1V909h1V910h5V911h1V910h1V909h1V911h1V910h2V911h1V910h13V909h2V910h1V911h1V910h4V915h-4V918h-1V915h-1V916h-2V915h-13V917h-1V915h-2V916h-1V915h-2V916h-1V915h-4V916h-1V914h-1V915h-1V916h-1V915h-2V916h-1V914h-1V915h-3V916h-2V915h-1V916h-1V915h-4V916h-1V915h-1V916h-1V914h-1V915h-1V916h-1V915h-2V916h-3V915h-4V914h-1V915h-7V916h-1V915h-2V914h-1V915h-1V916h-1V915h-2V916h-1V915h-2V914h-1V916h-1V915h-5V914h-1V915h-2V916h-1V915h-1V916h-1V915h-3V916h-1V915h-4V916h-1V915h-7V916h-2V915h-1V916h-3V914h-1V915h-5V914h-1V915h-1V916h-1V915h-1V916h-1V915h-8V916h-1V915h-3V916h-2V915h-1V914h-1V915h-1V916h-2V914h-2V915h-1V916h-1V915h-1V914h-1V915h-1V916h-1V915h-7V916h-1V915h-4V916h-2V915h-5V914h-1V916h-2V918h-1V915h-4V916h-3V915h-1V916h-1V915h-8V916h-1V915h-1V916h-1V917h-1V915h-1V916h-1V915h-7V916h-1V915h-1V916h-2V915h-3V916h-1V915h-1V916h-3V915h-3V914h-1V916h-1V917h-3V916h-1V917h-1V918h-1V915h-1V916h-2V915h-1V916h-1V914h-1V915h-2V914h-1V915h-1V917h-1V914h-1V915h-3V916h-1V915h-3V916h-1V915h-2V916h-1V915h-3V916h-1V915h-6V916h-3V915h-6V914h-1V915h-2V916h-1V915h-1V916h-2V917h-2V916h-3V915h-5V914h-1V915h-3V914h-1V915h-1V916h-1V915h-1V914h-1V916h-1V915h-15V914h-1V915h-3V916h-1V915h-1V916h-1V915h-3V916h-1V915h-3V916h-1V915h-1V916h-1V915h-8V916h-1V915h-1V916h-2V915h-1V916h-1V915h-4V916h-1V915h-5V916h-3V915h-11V916h-1V914h-1V915h-2V914h-1V915h-4V916h-1V915h-5V917h-1V916h-1V915h-1V916h-1V915h-3V916h-1V915h-1V914h-1V915h-1V916h-1V915h-3V916h-1V914h-1V916h-1V915h-3V916h-1V915h-1V914h-1V917h-1V916h-1V915h-1V916h-1V917h-1V915h-5V916h-2V915h-3V914h-1V915h-2V916h-1V914h-1V915h-2V916h-2V915h-8V916h-2V915h-4V916h-2V915h-1V916h-1V915h-1V916h-1V914h-1V915h-1V916h-1V915h-2V914h-1V915h-1V914h-1V915h-4V916h-1V915h-1V916h-1V915h-2V917h-2V915h-1V914h-1V916h-1V915h-2V916h-5V915h-2V914h-2V915h-4V914h-1V917h-1V915h-4V916h-1V915h-1V917h-1V915h-2V916h-1V915h-2V916h-1V915h-1V916h-1V915h-3V914h-1V915h-1V916h-2V915h-1V916h-2V915h-4V916h-1V915h-3V916h-1V915h-8V916h-1V915h-1V917h-1V915h-3V916h-4V915h-2V916h-2V915h-2V916h-1V914h-1V916h-1V918h-1V916h-1V915h-4V916h-1V915h-1V916h-1V914h-2V917h-1V916h-1V915h-9V914h-1V915h-2V914h-1V915h-3V914h-1V915h-2V916h-1V915h-4V916h-1V915h-1V916h-1V915h-5V916h-1V915h-1V916h-1V915h-3V916h-1V915h-2V916h-2V915h-7V917h-1V915h-4V916h-2V915h-2V917h-1V915h-2V917h-1V915h-4V914h-1V915h-2V917h-1V915h-2V916h-1V915h-3V916h-2V915h-1V916h-1V915h-2V916h-2V915h-1V914h-1V915h-1V916h-1V915h-5V916h-1V915h-1V914h-1V915h-1V916h-1V915h-11V914h-1V915h-3V917h-1V915h-8V916h-1V915h-3V916h-1V915h-4V916h-1V915h-10V916h-1V915h-2V916h-1V915h-5V916h-2V915h-2V916h-1V915h-1V914h-1V915h-1V914h-1V915h-3V916h-1V915h-1V916h-2V914h-1V915h-2V917h-1V916h-2V915h-1V916h-2V915h-1V916h-2V918h-1V916h-1V915h-9V916h-1V915h-4V914h-1V917h-1V915h-9V916h-1V915h-2V916h-1V915h-3V916h-1V914h-1V915h-1V916h-1V915h-1V914h-1V915h-2V918h-1V915h-3V916h-1V915h-5V917h-1V916h-1V915h-3V917h-1V915h-1V916h-1V915h-1V916h-1V914h-1V915h-1V916h-3V915h-1V916h-1V918h-1V915h-1V917h-1V914h-1V915h-1V916h-1V915h-2V916h-1V915h-1V916h-2V917h-1V916h-1V915h-3V916h-1V915h-1V916h-1V915h-2V916h-2V915h-1V916h-1V915h-1V916h-1V914h-1V916h-1V914h-1V915h-3V916h-1V915h-1V916h-1V915h-2V916h-1V915h-2V916h-1V915h-1V916h-1V915h-1V916h-1V915h-3V914h-1V916h-2V915h-1V916h-1V915h-14V917h-1V915h-5V916h-2V915h-1V917h-1V916h-2V915h-1V916h-1V915h-2V916h-1V915h-1V916h-1V915h-1V916h-2V915h-5V916h-1V915h-2V917h-1V915h-3V916h-1V915h-2V916h-1V915h-4V916h-1V914h-1V915h-1V914h-1V915h-5V916h-1V915h-5V916h-2V915h-1V917h-1V915h-2V914h-1V916h-3V915h-1V916h-1V914h-1V915h-1V916h-1V915h-1V916h-1V915h-3V916h-1V915h-1V916h-1V915h-2V916h-1V915h-1V916h-1V915h-10V916h-1V915h-8V916h-1V915h-2V916h-1V915h-1V917h-1V914h-1V916h-1V915h-3V916h-1V915h-2V916h-1V915h-2V916h-1V915h-1V914h-1V915h-1V916h-2V915h-6V916h-1V915h-7V916h-1V915h-3V917h-1V915h-1V916h-1V915h-1V917h-1V915h-1V914h-1V915h-7V916h-1V915h-8V916h-2V915h-3V916h-1V914h-1V915h-1V914h-1V915h-2V916h-1V915h-1V914h-1V915h-1V916h-1V915h-1Z" fill="#00ffff"/><path d="M334.5 197V230M560.5 209V222M580.5 211V220M737.5 202V231M1188.5 206V226M1208.5 210V218M397.5 233V259M447.5 228V260M463.5 228V261M524.5 223V267M900.5 230V259M1241.5 231V262M744.5 262V289M1235.5 247V300M335.5 286V320M650.5 290V326M677.5 290V321M952.5 295V324M969.5 299V314M1060.5 300V312M1104.5 282V324M389.5 324V353M1294.5 322V350M1335.5 323V352M744.5 350V387M761.5 345V387M938.5 350V379M916.5 375V415M769.5 412V441M1350.5 423V433M517.5 441V476M504.5 452V464M1152.5 443V480M1296.5 450V468M742.5 481V494M518.5 502V534M703.5 513V524M784.5 498V536M1269.5 504V532M1326.5 503V534M1342.5 513V523M1004.5 524V564M689.5 626V656M794.5 716V741M1002.5 778V804M415.5 834V864M717.5 869V897M809.5 860V897M405.5 890V927M799.5 893V931M954.5 905V917" stroke="#00ffff" stroke-width="1" fill="none"/></svg>
<div class="t" style="left:277px;top:107.5px;font-size:16px;line-height:16px;color:#000;font-weight:400;">Département de géologie et de génie géologique</div><div class="t" style="left:277px;top:126.5px;font-size:16px;line-height:16px;color:#000;font-weight:400;">Faculté des sciences et de génie</div><div class="t" style="left:277px;top:145.5px;font-size:16px;line-height:16px;color:#000;font-weight:400;">Université Laval</div><div class="t" style="left:639.5px;width:400px;text-align:center;top:124.3px;font-size:21.5px;line-height:21.5px;color:#000;font-weight:400;">Séismographe QCQ (CGC/GSC)</div><div class="t" style="left:639.5px;width:400px;text-align:center;top:985.8px;font-size:18px;line-height:18px;color:#000;font-weight:400;">Minutes écoulées</div><div class="t" style="left:1405px;top:176.8px;font-size:18px;line-height:18px;color:#ff0000;font-weight:400;">UTC</div><div class="t" style="left:152.5px;width:400px;text-align:center;top:167.0px;font-size:13px;line-height:13px;color:#000;font-weight:400;">02</div><div class="t" style="left:152.5px;width:400px;text-align:center;top:949.0px;font-size:13px;line-height:13px;color:#000;font-weight:400;">02</div><div class="t" style="left:227.5px;width:400px;text-align:center;top:167.0px;font-size:13px;line-height:13px;color:#000;font-weight:400;">04</div><div class="t" style="left:227.5px;width:400px;text-align:center;top:949.0px;font-size:13px;line-height:13px;color:#000;font-weight:400;">04</div><div class="t" style="left:302.5px;width:400px;text-align:center;top:167.0px;font-size:13px;line-height:13px;color:#000;font-weight:400;">06</div><div class="t" style="left:302.5px;width:400px;text-align:center;top:949.0px;font-size:13px;line-height:13px;color:#000;font-weight:400;">06</div><div class="t" style="left:377.5px;width:400px;text-align:center;top:167.0px;font-size:13px;line-height:13px;color:#000;font-weight:400;">08</div><div class="t" style="left:377.5px;width:400px;text-align:center;top:949.0px;font-size:13px;line-height:13px;color:#000;font-weight:400;">08</div><div class="t" style="left:452.5px;width:400px;text-align:center;top:167.0px;font-size:13px;line-height:13px;color:#000;font-weight:400;">10</div><div class="t" style="left:452.5px;width:400px;text-align:center;top:949.0px;font-size:13px;line-height:13px;color:#000;font-weight:400;">10</div><div class="t" style="left:527.5px;width:400px;text-align:center;top:167.0px;font-size:13px;line-height:13px;color:#000;font-weight:400;">12</div><div class="t" style="left:527.5px;width:400px;text-align:center;top:949.0px;font-size:13px;line-height:13px;color:#000;font-weight:400;">12</div><div class="t" style="left:602.5px;width:400px;text-align:center;top:167.0px;font-size:13px;line-height:13px;color:#000;font-weight:400;">14</div><div class="t" style="left:602.5px;width:400px;text-align:center;top:949.0px;font-size:13px;line-height:13px;color:#000;font-weight:400;">14</div><div class="t" style="left:676.5px;width:400px;text-align:center;top:167.0px;font-size:13px;line-height:13px;color:#000;font-weight:400;">16</div><div class="t" style="left:676.5px;width:400px;text-align:center;top:949.0px;font-size:13px;line-height:13px;color:#000;font-weight:400;">16</div><div class="t" style="left:751.5px;width:400px;text-align:center;top:167.0px;font-size:13px;line-height:13px;color:#000;font-weight:400;">18</div><div class="t" style="left:751.5px;width:400px;text-align:center;top:949.0px;font-size:13px;line-height:13px;color:#000;font-weight:400;">18</div><div class="t" style="left:826.5px;width:400px;text-align:center;top:167.0px;font-size:13px;line-height:13px;color:#000;font-weight:400;">20</div><div class="t" style="left:826.5px;width:400px;text-align:center;top:949.0px;font-size:13px;line-height:13px;color:#000;font-weight:400;">20</div><div class="t" style="left:901.5px;width:400px;text-align:center;top:167.0px;font-size:13px;line-height:13px;color:#000;font-weight:400;">22</div><div class="t" style="left:901.5px;width:400px;text-align:center;top:949.0px;font-size:13px;line-height:13px;color:#000;font-weight:400;">22</div><div class="t" style="left:976.5px;width:400px;text-align:center;top:167.0px;font-size:13px;line-height:13px;color:#000;font-weight:400;">24</div><div class="t" style="left:976.5px;width:400px;text-align:center;top:949.0px;font-size:13px;line-height:13px;color:#000;font-weight:400;">24</div><div class="t" style="left:1051.5px;width:400px;text-align:center;top:167.0px;font-size:13px;line-height:13px;color:#000;font-weight:400;">26</div><div class="t" style="left:1051.5px;width:400px;text-align:center;top:949.0px;font-size:13px;line-height:13px;color:#000;font-weight:400;">26</div><div class="t" style="left:1126.5px;width:400px;text-align:center;top:167.0px;font-size:13px;line-height:13px;color:#000;font-weight:400;">28</div><div class="t" style="left:1126.5px;width:400px;text-align:center;top:949.0px;font-size:13px;line-height:13px;color:#000;font-weight:400;">28</div><div class="t" style="left:1223.5px;width:400px;text-align:center;top:209.0px;font-size:13px;line-height:13px;color:#000;font-weight:400;">0:30</div><div class="t" style="left:1223.5px;width:400px;text-align:center;top:240.0px;font-size:13px;line-height:13px;color:#000;font-weight:400;">1:00</div><div class="t" style="left:1223.5px;width:400px;text-align:center;top:270.0px;font-size:13px;line-height:13px;color:#000;font-weight:400;">1:30</div><div class="t" style="left:1223.5px;width:400px;text-align:center;top:300.0px;font-size:13px;line-height:13px;color:#000;font-weight:400;">2:00</div><div class="t" style="left:1223.5px;width:400px;text-align:center;top:331.0px;font-size:13px;line-height:13px;color:#000;font-weight:400;">2:30</div><div class="t" style="left:1223.5px;width:400px;text-align:center;top:361.0px;font-size:13px;line-height:13px;color:#000;font-weight:400;">3:00</div><div class="t" style="left:1223.5px;width:400px;text-align:center;top:391.0px;font-size:13px;line-height:13px;color:#000;font-weight:400;">3:30</div><div class="t" style="left:1223.5px;width:400px;text-align:center;top:422.0px;font-size:13px;line-height:13px;color:#000;font-weight:400;">4:00</div><div class="t" style="left:1223.5px;width:400px;text-align:center;top:452.0px;font-size:13px;line-height:13px;color:#000;font-weight:400;">4:30</div><div class="t" style="left:1223.5px;width:400px;text-align:center;top:482.0px;font-size:13px;line-height:13px;color:#000;font-weight:400;">5:00</div><div class="t" style="left:1223.5px;width:400px;text-align:center;top:513.0px;font-size:13px;line-height:13px;color:#000;font-weight:400;">5:30</div><div class="t" style="left:1223.5px;width:400px;text-align:center;top:543.0px;font-size:13px;line-height:13px;color:#000;font-weight:400;">6:00</div><div class="t" style="left:1223.5px;width:400px;text-align:center;top:573.0px;font-size:13px;line-height:13px;color:#000;font-weight:400;">6:30</div><div class="t" style="left:1223.5px;width:400px;text-align:center;top:603.0px;font-size:13px;line-height:13px;color:#000;font-weight:400;">7:00</div><div class="t" style="left:1223.5px;width:400px;text-align:center;top:634.0px;font-size:13px;line-height:13px;color:#000;font-weight:400;">7:30</div><div class="t" style="left:1223.5px;width:400px;text-align:center;top:664.0px;font-size:13px;line-height:13px;color:#000;font-weight:400;">8:00</div><div class="t" style="left:1223.5px;width:400px;text-align:center;top:694.0px;font-size:13px;line-height:13px;color:#000;font-weight:400;">8:30</div><div class="t" style="left:1223.5px;width:400px;text-align:center;top:725.0px;font-size:13px;line-height:13px;color:#000;font-weight:400;">9:00</div><div class="t" style="left:1223.5px;width:400px;text-align:center;top:755.0px;font-size:13px;line-height:13px;color:#000;font-weight:400;">9:30</div><div class="t" style="left:1223.5px;width:400px;text-align:center;top:785.0px;font-size:13px;line-height:13px;color:#000;font-weight:400;">10:00</div><div class="t" style="left:1223.5px;width:400px;text-align:center;top:816.0px;font-size:13px;line-height:13px;color:#000;font-weight:400;">10:30</div><div class="t" style="left:1223.5px;width:400px;text-align:center;top:846.0px;font-size:13px;line-height:13px;color:#000;font-weight:400;">11:00</div><div class="t" style="left:1223.5px;width:400px;text-align:center;top:876.0px;font-size:13px;line-height:13px;color:#000;font-weight:400;">11:30</div><div class="t" style="left:1223.5px;width:400px;text-align:center;top:907.0px;font-size:13px;line-height:13px;color:#000;font-weight:400;">12:00</div>
</body></html>
